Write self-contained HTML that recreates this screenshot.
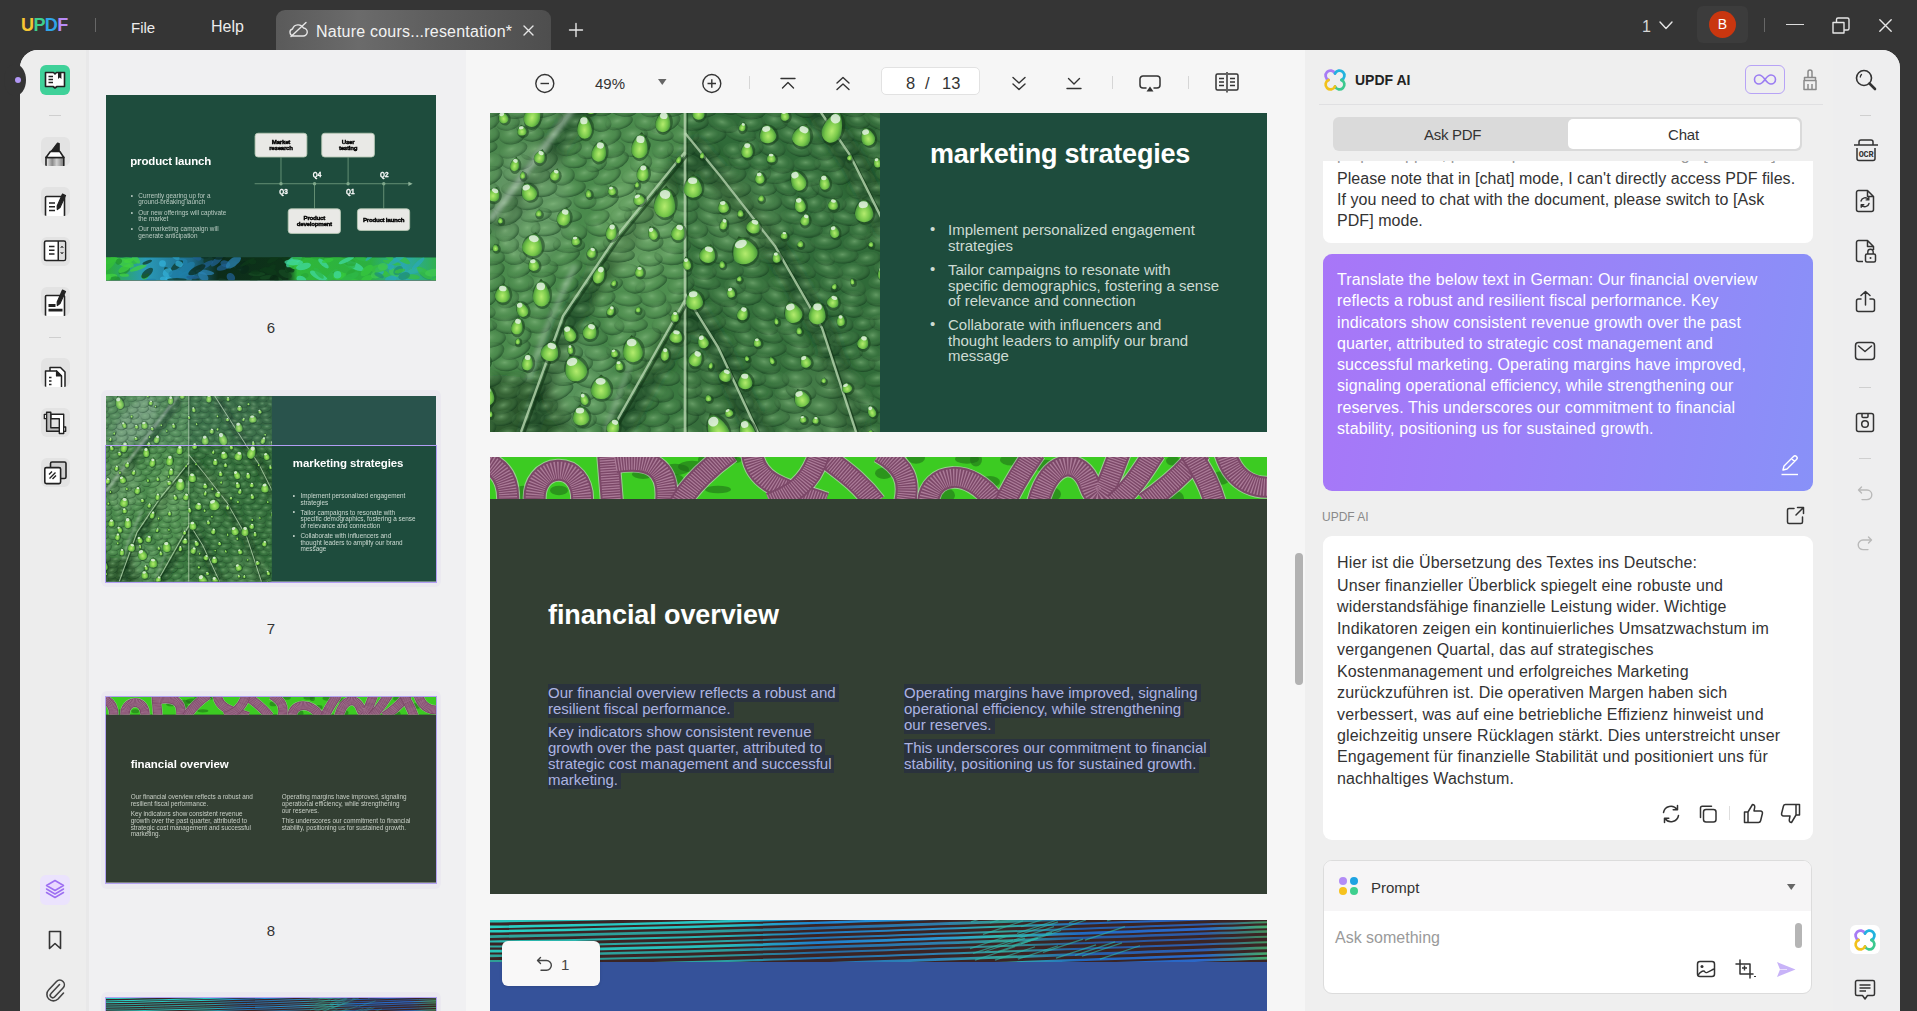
<!DOCTYPE html>
<html><head><meta charset="utf-8">
<style>
*{margin:0;padding:0;box-sizing:border-box}
html,body{width:1917px;height:1011px;overflow:hidden;background:#353535;font-family:"Liberation Sans",sans-serif}
.a{position:absolute}
svg{position:absolute;overflow:visible}
.s{fill:none;stroke:#3a3a3a;stroke-width:1.5;stroke-linecap:round;stroke-linejoin:round}
.w{fill:none;stroke:#e6e6e6;stroke-width:1.4;stroke-linecap:round;stroke-linejoin:round}
.nw{white-space:nowrap}
</style></head><body>
<!-- ============ TOP BAR ============ -->
<div class="a" style="left:21px;top:15px;font:bold 18px 'Liberation Sans';letter-spacing:-0.6px;line-height:20px">
<span style="color:#f6c633">U</span><span style="color:#3ecf8e">P</span><span style="color:#2fa5e8">D</span><span style="color:#b88bf6">F</span></div>
<div class="a" style="left:95px;top:18px;width:1px;height:14px;background:#676767"></div>
<div class="a nw" style="left:131px;top:19px;color:#ececec;font-size:15px;line-height:18px">File</div>
<div class="a nw" style="left:211px;top:18px;color:#ececec;font-size:16px;line-height:18px">Help</div>
<div class="a" style="left:276px;top:10px;width:275px;height:40px;border-radius:9px 9px 0 0;background:linear-gradient(90deg,#5a5a5a 0%,#6b6b6b 30%,#5d5d5d 60%,#4e4e4e 100%)"></div>
<svg style="left:289px;top:21px" width="20" height="17" viewBox="0 0 20 17"><path class="w" d="M5 15 H14 A4 4 0 0 0 14.5 7 A6 6 0 0 0 3.5 8 A3.6 3.6 0 0 0 5 15 M2 15.5 L17 1.5" stroke="#cfcfcf"/></svg>
<div class="a nw" style="left:316px;top:23px;color:#f2f2f2;font-size:16px;line-height:18px;letter-spacing:0.22px">Nature cours...resentation*</div>
<svg style="left:523px;top:25px" width="11" height="11"><path class="w" d="M1 1L10 10M10 1L1 10"/></svg>
<svg style="left:568.5px;top:22.5px" width="14" height="14"><path class="w" d="M7 0.5V13.5M0.5 7H13.5"/></svg>
<div class="a nw" style="left:1642px;top:18px;color:#d6d6d6;font-size:16px;line-height:18px">1</div>
<svg style="left:1659px;top:21px" width="14" height="9"><path class="w" d="M1 1L7 7.5L13 1"/></svg>
<div class="a" style="left:1697px;top:6px;width:51px;height:37px;border-radius:6px;background:#3c3c3c"></div>
<div class="a" style="left:1709px;top:11px;width:27px;height:27px;border-radius:50%;background:#c9360f;color:#fff;font-size:14px;text-align:center;line-height:27px">B</div>
<div class="a" style="left:1764px;top:18px;width:1px;height:14px;background:#676767"></div>
<div class="a" style="left:1786px;top:24px;width:18px;height:1.3px;background:#dcdcdc"></div>
<svg style="left:1832px;top:17px" width="18" height="17"><path class="w" d="M1 5.5H12V16H1Z M4.5 5.5V2.5A1.5 1.5 0 0 1 6 1H15.5A1.5 1.5 0 0 1 17 2.5V11.5A1.5 1.5 0 0 1 15.5 13H12"/></svg>
<svg style="left:1879px;top:19px" width="13" height="13"><path class="w" d="M0.8 0.8L12.2 12.2M12.2 0.8L0.8 12.2"/></svg>

<!-- ============ APP FRAME ============ -->
<div id="app" class="a" style="left:20px;top:50px;width:1880px;height:961px;border-radius:18px 18px 0 0;overflow:hidden;background:#efeff1">
  <div class="a" style="left:0;top:0;width:68px;height:961px;background:#ededed"></div><div class="a" style="left:66px;top:0;width:3px;height:961px;background:#e8e8e9"></div>
  <div class="a" style="left:69px;top:0;width:377px;height:961px;background:#f0f0f2"></div>
  <div class="a" style="left:446px;top:0;width:839px;height:961px;background:#f6f6f6"></div>
  <div class="a" style="left:1285px;top:0;width:528px;height:961px;background:#efefef"></div>
  <div class="a" style="left:1813px;top:0;width:67px;height:961px;background:#eeeeef"></div>
</div>
<!--SIDEBAR-->
<div class="a" style="left:40px;top:65px;width:30px;height:30px;border-radius:6px;background:#3fd199"></div>
<svg style="left:44px;top:70px" width="22" height="20" viewBox="0 0 22 20"><path d="M1.5 2.5H9.5L11 4L12.5 2.5H20.5V16.5H13L11 18L9 16.5H1.5Z" fill="#fff" stroke="#222" stroke-width="1.6" stroke-linejoin="round"/><path d="M4.5 6.5H9M4.5 9.5H9M4.5 12.5H9" stroke="#222" stroke-width="1.5"/><path d="M14 2V9L15.7 7.6L17.4 9V2" fill="#222"/></svg>
<div class="a" style="left:49px;top:115px;width:12px;height:1px;background:#cfcfcf"></div>
<div class="a" style="left:41px;top:137px;width:29px;height:29px;border-radius:6px;background:#e3e3e3;overflow:hidden">
 <svg style="left:0;top:0" width="29" height="29" viewBox="0 0 29 29"><defs><linearGradient id="hlg" x1="0" x2="1"><stop offset="0" stop-color="#f4f4f4"/><stop offset="0.35" stop-color="#8a8a8a"/><stop offset="0.6" stop-color="#d0d0d0"/><stop offset="1" stop-color="#777"/></linearGradient></defs><path d="M5 20.5H22.8V30H5Z" fill="url(#hlg)" stroke="#222" stroke-width="1.6"/><path d="M10 14.5L16.5 6L18.2 6.6V14.5Z" fill="#222" stroke="#222" stroke-width="1.2" stroke-linejoin="round"/><path d="M9.4 14.5H18.8L22.8 20.5H5Z" fill="#fff" stroke="#222" stroke-width="1.6" stroke-linejoin="round"/></svg></div>
<div class="a" style="left:41px;top:187px;width:29px;height:29px;border-radius:6px;background:#e3e3e3;overflow:hidden">
 <svg style="left:0;top:0" width="29" height="29" viewBox="0 0 29 29"><path d="M4.5 30V10.5A1 1 0 0 1 5.5 9.5H22.5A1 1 0 0 1 23.5 10.5V30" fill="#fff" stroke="#222" stroke-width="1.6"/><path d="M8 16H14M8 19.8H14M8 23.5H14" stroke="#222" stroke-width="1.5"/><path d="M21.5 7L24.5 8.5L19 20.5L16.3 22.5L16.2 19Z" fill="#222" stroke="#222" stroke-width="1.2" stroke-linejoin="round"/></svg></div>
<div class="a" style="left:41px;top:237px;width:29px;height:29px;border-radius:6px;background:#e3e3e3;overflow:hidden">
 <svg style="left:0;top:0" width="29" height="29" viewBox="0 0 29 29"><rect x="3.5" y="4" width="21" height="19.5" rx="1.5" fill="#fff" stroke="#222" stroke-width="1.6"/><path d="M17.3 4V23.5" stroke="#222" stroke-width="1.6"/><rect x="18.2" y="5" width="5.4" height="17.6" fill="#ddd"/><path d="M8 9.5H13.5M8 13.3H13.5M8 17H13.5" stroke="#222" stroke-width="1.5"/><path d="M19.5 10.5L21 9L22.5 10.5M19.5 15.5L21 17L22.5 15.5" stroke="#555" stroke-width="1"/></svg></div>
<div class="a" style="left:41px;top:287px;width:29px;height:29px;border-radius:6px;background:#e3e3e3;overflow:hidden">
 <svg style="left:0;top:0" width="29" height="29" viewBox="0 0 29 29"><path d="M4.5 30V9.5A1 1 0 0 1 5.5 8.5H22.5A1 1 0 0 1 23.5 9.5V30" fill="#fff" stroke="#222" stroke-width="1.6"/><path d="M7.5 18.5H14.5M7.5 23.2H21.5" stroke="#222" stroke-width="2.8"/><path d="M21.5 3L24.5 4.5L19 16.5L16.3 18.5L16.2 15Z" fill="#222" stroke="#222" stroke-width="1.2" stroke-linejoin="round"/></svg></div>
<div class="a" style="left:49px;top:337px;width:12px;height:1px;background:#cfcfcf"></div>
<div class="a" style="left:41px;top:358px;width:29px;height:29px;border-radius:6px;background:#e3e3e3;overflow:hidden">
 <svg style="left:0;top:0" width="29" height="29" viewBox="0 0 29 29"><path d="M9 30V9.5H19.5L24 14V30" fill="#fff" stroke="#222" stroke-width="1.5" stroke-linejoin="round"/><path d="M4.5 30V13H15.5L20.5 18V30" fill="#fff" stroke="#222" stroke-width="1.5" stroke-linejoin="round"/><path d="M15.5 13V18H20.5Z" fill="#222" stroke="#222" stroke-width="1.2" stroke-linejoin="round"/><path d="M8 19.5H10.5M8 23H10.5M8 26.5H10.5" stroke="#222" stroke-width="1.4"/></svg></div>
<div class="a" style="left:41px;top:408px;width:29px;height:29px;border-radius:6px;background:#e3e3e3;overflow:hidden">
 <svg style="left:0;top:0" width="29" height="29" viewBox="0 0 29 29"><path d="M5.6 10.7H3.3V6.4H5.6M22.7 19H24.7V23.3H22.7" fill="#fff" stroke="#222" stroke-width="1.3" stroke-linejoin="round"/><path d="M9.8 6.2H22.7V25.5H18.3V10.7H9.8Z" fill="#fff" stroke="#222" stroke-width="1.4" stroke-linejoin="round"/><path d="M5.6 4.2H9.8V19.8H18.3V23.3H5.6Z" fill="#bdbdbd" stroke="#222" stroke-width="1.4" stroke-linejoin="round"/></svg></div>
<div class="a" style="left:41px;top:458px;width:29px;height:29px;border-radius:6px;background:#e3e3e3;overflow:hidden">
 <svg style="left:0;top:0" width="29" height="29" viewBox="0 0 29 29"><rect x="9.5" y="4" width="15.5" height="16.5" rx="1.5" fill="#cfcfcf" stroke="#222" stroke-width="1.6"/><rect x="3.8" y="9.6" width="15.8" height="16" rx="1.5" fill="#fff" stroke="#222" stroke-width="1.6"/><path d="M8 16.5L11 13.5M8.5 20.5L14.5 14.5M11.5 21L15 17.5" stroke="#222" stroke-width="1.4"/></svg></div>
<div class="a" style="left:40px;top:875px;width:30px;height:30px;border-radius:6px;background:#ebe3fd"></div>
<svg style="left:45px;top:879px" width="20" height="22" viewBox="0 0 20 22"><path d="M10 1.5L18.5 6.5L10 11.5L1.5 6.5Z" fill="#ead9ff" stroke="#9d6ff2" stroke-width="1.5" stroke-linejoin="round"/><path d="M1.5 10L10 15L18.5 10M1.5 13.5L10 18.5L18.5 13.5" fill="none" stroke="#9d6ff2" stroke-width="1.5" stroke-linejoin="round" stroke-linecap="round"/></svg>
<svg style="left:48px;top:930px" width="14" height="20" viewBox="0 0 14 20"><path d="M1.5 1.5H12.5V18.5L7 13.5L1.5 18.5Z" fill="none" stroke="#333" stroke-width="1.6" stroke-linejoin="round"/></svg>
<svg style="left:46px;top:978px" width="20" height="24" viewBox="0 0 20 24"><path d="M13.5 6.5L5 15.5A2.4 2.4 0 0 0 8.5 19L17 10A4.5 4.5 0 0 0 10.5 3.5L2.8 11.8A6.5 6.5 0 0 0 12 21L17.5 15" fill="none" stroke="#444" stroke-width="1.6" stroke-linecap="round"/></svg>

<!--THUMBS--><svg width="0" height="0" style="position:absolute;left:0;top:0"><defs><symbol id="leaf" viewBox="0 0 390 437"><defs>
<filter id="blur4" x="-20%" y="-20%" width="140%" height="140%"><feGaussianBlur stdDeviation="6"/></filter>
<filter id="blur1"><feGaussianBlur stdDeviation="1"/></filter>
<filter id="blur2"><feGaussianBlur stdDeviation="2"/></filter>
<radialGradient id="dr" cx="0.5" cy="0.65" r="0.6"><stop offset="0" stop-color="#b4ec6e"/><stop offset="0.5" stop-color="#78c84a"/><stop offset="0.85" stop-color="#44923a"/><stop offset="1" stop-color="#234f25"/></radialGradient>
<clipPath id="lclip"><rect width="390" height="437"/></clipPath>
</defs><g clip-path="url(#lclip)"><rect width="390" height="437" fill="#3a7540"/><path d="M195 0 L195 157 L126 242 L73 321 L31 437 L0 437 L0 225 L79 119 L169 0Z" fill="#4a8a4c"/><path d="M195 157 L195 305 L120 438 L31 437 L73 321 L126 242Z" fill="#3f7f44"/><path d="M169 0 L79 119 L0 225 L0 0Z" fill="#4b874d"/><path d="M195 305 L195 437 L120 438Z" fill="#3a7840"/><path d="M195 0 L256 0 L332 119 L360 160 L395 230 L390 437 L367 440 L332 333 L285 251 L231 182 L195 138Z" fill="#2f6a38"/><path d="M195 138 L231 182 L285 251 L332 333 L367 440 L269 440 L228 352 L195 299Z" fill="#336e3a"/><path d="M256 0 L390 0 L395 230 L360 160 L332 119Z" fill="#2c6435"/><path d="M195 299 L228 352 L269 440 L195 440Z" fill="#376f3c"/><g filter="url(#blur4)"><path d="M199 165 L130 250 L77 329 L35 445" stroke="#123617" stroke-width="24" fill="none" opacity="0.7"/><path d="M199 313 L124 446" stroke="#123617" stroke-width="24" fill="none" opacity="0.7"/><path d="M173 8 L83 127 L4 233" stroke="#123617" stroke-width="24" fill="none" opacity="0.7"/><path d="M199 146 L235 190 L289 259 L336 341 L371 448" stroke="#123617" stroke-width="24" fill="none" opacity="0.7"/><path d="M199 307 L232 360 L273 448" stroke="#123617" stroke-width="24" fill="none" opacity="0.7"/><path d="M260 8 L336 127 L364 168 L399 238" stroke="#123617" stroke-width="24" fill="none" opacity="0.7"/><ellipse cx="70" cy="60" rx="70" ry="35" fill="#a8c2ad" opacity="0.45" transform="rotate(-50 70 60)"/><ellipse cx="40" cy="210" rx="40" ry="60" fill="#8fb890" opacity="0.35"/><ellipse cx="150" cy="230" rx="35" ry="55" fill="#80b27c" opacity="0.35"/><ellipse cx="90" cy="390" rx="35" ry="45" fill="#8fbf8a" opacity="0.3"/><ellipse cx="250" cy="220" rx="45" ry="40" fill="#6a9f68" opacity="0.3"/><ellipse cx="330" cy="410" rx="45" ry="40" fill="#6a9f68" opacity="0.25"/><ellipse cx="10" cy="430" rx="70" ry="50" fill="#0f2e12" opacity="0.55"/><ellipse cx="150" cy="270" rx="45" ry="110" fill="#86c476" opacity="0.22"/><ellipse cx="380" cy="20" rx="40" ry="50" fill="#1a4a20" opacity="0.4"/></g><defs><radialGradient id="cell" cx="0.45" cy="0.4" r="0.6"><stop offset="0" stop-color="#8cc086" stop-opacity="0.55"/><stop offset="0.55" stop-color="#5f9a5c" stop-opacity="0.15"/><stop offset="1" stop-color="#10361a" stop-opacity="0.6"/></radialGradient></defs><ellipse cx="-10" cy="-9" rx="15.1" ry="8.6" fill="url(#cell)" transform="rotate(3 -10 -9)"/><ellipse cx="17" cy="-9" rx="15.8" ry="8.3" fill="url(#cell)" transform="rotate(-25 17 -9)"/><ellipse cx="44" cy="-7" rx="13.2" ry="8.5" fill="url(#cell)" transform="rotate(-17 44 -7)"/><ellipse cx="71" cy="-7" rx="12.4" ry="7.1" fill="url(#cell)" transform="rotate(6 71 -7)"/><ellipse cx="90" cy="-8" rx="14.7" ry="7.1" fill="url(#cell)" transform="rotate(-21 90 -8)"/><ellipse cx="115" cy="-7" rx="16.7" ry="7.9" fill="url(#cell)" transform="rotate(-21 115 -7)"/><ellipse cx="146" cy="-9" rx="16.6" ry="8.1" fill="url(#cell)" transform="rotate(-8 146 -9)"/><ellipse cx="177" cy="-9" rx="12.1" ry="7.1" fill="url(#cell)" transform="rotate(2 177 -9)"/><ellipse cx="198" cy="-7" rx="12.3" ry="9.4" fill="url(#cell)" transform="rotate(17 198 -7)"/><ellipse cx="217" cy="-8" rx="14.5" ry="8.8" fill="url(#cell)" transform="rotate(19 217 -8)"/><ellipse cx="245" cy="-8" rx="12.2" ry="9.3" fill="url(#cell)" transform="rotate(3 245 -8)"/><ellipse cx="267" cy="-8" rx="13.7" ry="8.0" fill="url(#cell)" transform="rotate(-9 267 -8)"/><ellipse cx="291" cy="-8" rx="11.6" ry="8.8" fill="url(#cell)" transform="rotate(7 291 -8)"/><ellipse cx="308" cy="-8" rx="14.3" ry="8.9" fill="url(#cell)" transform="rotate(9 308 -8)"/><ellipse cx="333" cy="-9" rx="14.7" ry="7.5" fill="url(#cell)" transform="rotate(22 333 -9)"/><ellipse cx="360" cy="-10" rx="13.1" ry="8.5" fill="url(#cell)" transform="rotate(-8 360 -10)"/><ellipse cx="383" cy="-7" rx="15.9" ry="8.9" fill="url(#cell)" transform="rotate(14 383 -7)"/><ellipse cx="3" cy="7" rx="16.7" ry="8.0" fill="url(#cell)" transform="rotate(-4 3 7)"/><ellipse cx="30" cy="4" rx="16.3" ry="8.2" fill="url(#cell)" transform="rotate(6 30 4)"/><ellipse cx="61" cy="7" rx="12.0" ry="7.2" fill="url(#cell)" transform="rotate(-8 61 7)"/><ellipse cx="79" cy="5" rx="16.0" ry="7.1" fill="url(#cell)" transform="rotate(-10 79 5)"/><ellipse cx="108" cy="7" rx="12.0" ry="7.2" fill="url(#cell)" transform="rotate(9 108 7)"/><ellipse cx="129" cy="7" rx="15.5" ry="8.2" fill="url(#cell)" transform="rotate(-7 129 7)"/><ellipse cx="156" cy="7" rx="15.4" ry="7.1" fill="url(#cell)" transform="rotate(3 156 7)"/><ellipse cx="184" cy="6" rx="16.3" ry="8.5" fill="url(#cell)" transform="rotate(5 184 6)"/><ellipse cx="213" cy="7" rx="12.8" ry="8.3" fill="url(#cell)" transform="rotate(-10 213 7)"/><ellipse cx="234" cy="6" rx="15.1" ry="9.4" fill="url(#cell)" transform="rotate(13 234 6)"/><ellipse cx="262" cy="5" rx="16.1" ry="8.5" fill="url(#cell)" transform="rotate(24 262 5)"/><ellipse cx="290" cy="4" rx="16.4" ry="7.3" fill="url(#cell)" transform="rotate(-9 290 4)"/><ellipse cx="323" cy="6" rx="13.7" ry="7.4" fill="url(#cell)" transform="rotate(-6 323 6)"/><ellipse cx="345" cy="4" rx="14.2" ry="7.8" fill="url(#cell)" transform="rotate(-4 345 4)"/><ellipse cx="371" cy="6" rx="12.1" ry="7.9" fill="url(#cell)" transform="rotate(-8 371 6)"/><ellipse cx="393" cy="7" rx="15.3" ry="9.2" fill="url(#cell)" transform="rotate(-10 393 7)"/><ellipse cx="-7" cy="20" rx="11.4" ry="8.9" fill="url(#cell)" transform="rotate(-16 -7 20)"/><ellipse cx="12" cy="19" rx="15.2" ry="7.8" fill="url(#cell)" transform="rotate(-14 12 19)"/><ellipse cx="41" cy="19" rx="16.4" ry="7.7" fill="url(#cell)" transform="rotate(8 41 19)"/><ellipse cx="70" cy="20" rx="11.6" ry="8.5" fill="url(#cell)" transform="rotate(9 70 20)"/><ellipse cx="91" cy="19" rx="12.9" ry="8.7" fill="url(#cell)" transform="rotate(-23 91 19)"/><ellipse cx="113" cy="18" rx="15.9" ry="9.4" fill="url(#cell)" transform="rotate(10 113 18)"/><ellipse cx="140" cy="20" rx="11.6" ry="7.2" fill="url(#cell)" transform="rotate(2 140 20)"/><ellipse cx="160" cy="20" rx="13.7" ry="8.6" fill="url(#cell)" transform="rotate(-10 160 20)"/><ellipse cx="185" cy="18" rx="14.1" ry="8.0" fill="url(#cell)" transform="rotate(-23 185 18)"/><ellipse cx="211" cy="20" rx="13.6" ry="7.6" fill="url(#cell)" transform="rotate(15 211 20)"/><ellipse cx="234" cy="19" rx="13.7" ry="7.6" fill="url(#cell)" transform="rotate(12 234 19)"/><ellipse cx="259" cy="19" rx="16.8" ry="7.2" fill="url(#cell)" transform="rotate(15 259 19)"/><ellipse cx="289" cy="20" rx="16.3" ry="8.9" fill="url(#cell)" transform="rotate(13 289 20)"/><ellipse cx="319" cy="18" rx="16.2" ry="8.7" fill="url(#cell)" transform="rotate(22 319 18)"/><ellipse cx="348" cy="21" rx="13.3" ry="8.5" fill="url(#cell)" transform="rotate(25 348 21)"/><ellipse cx="369" cy="19" rx="11.0" ry="7.8" fill="url(#cell)" transform="rotate(-5 369 19)"/><ellipse cx="388" cy="21" rx="14.3" ry="7.2" fill="url(#cell)" transform="rotate(16 388 21)"/><ellipse cx="-5" cy="31" rx="11.6" ry="9.4" fill="url(#cell)" transform="rotate(-13 -5 31)"/><ellipse cx="14" cy="34" rx="14.8" ry="8.7" fill="url(#cell)" transform="rotate(-14 14 34)"/><ellipse cx="40" cy="33" rx="12.5" ry="9.1" fill="url(#cell)" transform="rotate(-18 40 33)"/><ellipse cx="62" cy="34" rx="14.6" ry="7.7" fill="url(#cell)" transform="rotate(-9 62 34)"/><ellipse cx="88" cy="31" rx="13.6" ry="8.5" fill="url(#cell)" transform="rotate(-12 88 31)"/><ellipse cx="115" cy="31" rx="12.6" ry="7.5" fill="url(#cell)" transform="rotate(3 115 31)"/><ellipse cx="133" cy="33" rx="16.6" ry="8.8" fill="url(#cell)" transform="rotate(-24 133 33)"/><ellipse cx="163" cy="31" rx="14.6" ry="8.8" fill="url(#cell)" transform="rotate(-6 163 31)"/><ellipse cx="190" cy="34" rx="11.6" ry="7.8" fill="url(#cell)" transform="rotate(-12 190 34)"/><ellipse cx="212" cy="33" rx="11.8" ry="9.0" fill="url(#cell)" transform="rotate(-8 212 33)"/><ellipse cx="231" cy="31" rx="12.1" ry="8.0" fill="url(#cell)" transform="rotate(18 231 31)"/><ellipse cx="254" cy="31" rx="16.1" ry="9.3" fill="url(#cell)" transform="rotate(10 254 31)"/><ellipse cx="282" cy="34" rx="11.5" ry="9.2" fill="url(#cell)" transform="rotate(-3 282 34)"/><ellipse cx="301" cy="33" rx="11.4" ry="9.0" fill="url(#cell)" transform="rotate(6 301 33)"/><ellipse cx="319" cy="32" rx="15.8" ry="7.8" fill="url(#cell)" transform="rotate(0 319 32)"/><ellipse cx="347" cy="31" rx="14.8" ry="9.2" fill="url(#cell)" transform="rotate(8 347 31)"/><ellipse cx="374" cy="31" rx="15.1" ry="7.5" fill="url(#cell)" transform="rotate(-9 374 31)"/><ellipse cx="-6" cy="44" rx="15.1" ry="8.6" fill="url(#cell)" transform="rotate(8 -6 44)"/><ellipse cx="22" cy="47" rx="14.2" ry="8.0" fill="url(#cell)" transform="rotate(-7 22 47)"/><ellipse cx="46" cy="44" rx="11.5" ry="9.1" fill="url(#cell)" transform="rotate(-13 46 44)"/><ellipse cx="65" cy="47" rx="14.2" ry="8.6" fill="url(#cell)" transform="rotate(-8 65 47)"/><ellipse cx="93" cy="48" rx="12.0" ry="9.1" fill="url(#cell)" transform="rotate(-1 93 48)"/><ellipse cx="114" cy="46" rx="12.3" ry="8.9" fill="url(#cell)" transform="rotate(7 114 46)"/><ellipse cx="136" cy="48" rx="16.8" ry="8.0" fill="url(#cell)" transform="rotate(3 136 48)"/><ellipse cx="165" cy="46" rx="11.1" ry="7.9" fill="url(#cell)" transform="rotate(1 165 46)"/><ellipse cx="185" cy="46" rx="14.9" ry="7.4" fill="url(#cell)" transform="rotate(6 185 46)"/><ellipse cx="210" cy="47" rx="12.2" ry="9.5" fill="url(#cell)" transform="rotate(16 210 47)"/><ellipse cx="229" cy="46" rx="16.3" ry="7.9" fill="url(#cell)" transform="rotate(-4 229 46)"/><ellipse cx="260" cy="45" rx="14.2" ry="9.0" fill="url(#cell)" transform="rotate(-9 260 45)"/><ellipse cx="283" cy="47" rx="13.5" ry="8.5" fill="url(#cell)" transform="rotate(-3 283 47)"/><ellipse cx="309" cy="48" rx="11.6" ry="9.3" fill="url(#cell)" transform="rotate(8 309 48)"/><ellipse cx="329" cy="47" rx="11.7" ry="7.6" fill="url(#cell)" transform="rotate(17 329 47)"/><ellipse cx="349" cy="46" rx="15.5" ry="8.6" fill="url(#cell)" transform="rotate(3 349 46)"/><ellipse cx="377" cy="46" rx="13.9" ry="7.7" fill="url(#cell)" transform="rotate(-9 377 46)"/><ellipse cx="0" cy="60" rx="14.5" ry="9.0" fill="url(#cell)" transform="rotate(10 0 60)"/><ellipse cx="23" cy="60" rx="13.3" ry="8.0" fill="url(#cell)" transform="rotate(-5 23 60)"/><ellipse cx="47" cy="58" rx="14.5" ry="9.5" fill="url(#cell)" transform="rotate(1 47 58)"/><ellipse cx="72" cy="59" rx="15.9" ry="8.2" fill="url(#cell)" transform="rotate(4 72 59)"/><ellipse cx="102" cy="60" rx="14.0" ry="8.2" fill="url(#cell)" transform="rotate(-4 102 60)"/><ellipse cx="128" cy="59" rx="15.2" ry="9.2" fill="url(#cell)" transform="rotate(-16 128 59)"/><ellipse cx="156" cy="58" rx="15.7" ry="9.0" fill="url(#cell)" transform="rotate(5 156 58)"/><ellipse cx="181" cy="60" rx="16.3" ry="7.2" fill="url(#cell)" transform="rotate(-20 181 60)"/><ellipse cx="212" cy="59" rx="16.0" ry="7.7" fill="url(#cell)" transform="rotate(-2 212 59)"/><ellipse cx="240" cy="58" rx="12.2" ry="8.2" fill="url(#cell)" transform="rotate(14 240 58)"/><ellipse cx="260" cy="58" rx="13.0" ry="8.6" fill="url(#cell)" transform="rotate(-5 260 58)"/><ellipse cx="283" cy="58" rx="11.3" ry="8.7" fill="url(#cell)" transform="rotate(21 283 58)"/><ellipse cx="304" cy="60" rx="14.9" ry="7.1" fill="url(#cell)" transform="rotate(6 304 60)"/><ellipse cx="329" cy="60" rx="14.0" ry="9.4" fill="url(#cell)" transform="rotate(12 329 60)"/><ellipse cx="356" cy="60" rx="13.2" ry="7.9" fill="url(#cell)" transform="rotate(6 356 60)"/><ellipse cx="379" cy="58" rx="14.1" ry="7.6" fill="url(#cell)" transform="rotate(13 379 58)"/><ellipse cx="-5" cy="71" rx="12.3" ry="8.5" fill="url(#cell)" transform="rotate(-8 -5 71)"/><ellipse cx="15" cy="72" rx="12.0" ry="9.0" fill="url(#cell)" transform="rotate(-17 15 72)"/><ellipse cx="35" cy="73" rx="11.3" ry="7.5" fill="url(#cell)" transform="rotate(5 35 73)"/><ellipse cx="56" cy="71" rx="12.3" ry="7.3" fill="url(#cell)" transform="rotate(-11 56 71)"/><ellipse cx="79" cy="73" rx="15.6" ry="7.5" fill="url(#cell)" transform="rotate(-22 79 73)"/><ellipse cx="104" cy="72" rx="12.5" ry="8.5" fill="url(#cell)" transform="rotate(-5 104 72)"/><ellipse cx="128" cy="71" rx="15.9" ry="8.3" fill="url(#cell)" transform="rotate(-14 128 71)"/><ellipse cx="155" cy="74" rx="12.9" ry="9.3" fill="url(#cell)" transform="rotate(-24 155 74)"/><ellipse cx="179" cy="73" rx="14.0" ry="9.2" fill="url(#cell)" transform="rotate(-19 179 73)"/><ellipse cx="205" cy="74" rx="16.6" ry="7.2" fill="url(#cell)" transform="rotate(15 205 74)"/><ellipse cx="232" cy="74" rx="14.2" ry="7.4" fill="url(#cell)" transform="rotate(13 232 74)"/><ellipse cx="256" cy="72" rx="13.3" ry="9.0" fill="url(#cell)" transform="rotate(-7 256 72)"/><ellipse cx="282" cy="72" rx="12.9" ry="9.0" fill="url(#cell)" transform="rotate(1 282 72)"/><ellipse cx="303" cy="72" rx="11.7" ry="8.7" fill="url(#cell)" transform="rotate(3 303 72)"/><ellipse cx="325" cy="74" rx="16.2" ry="8.1" fill="url(#cell)" transform="rotate(7 325 74)"/><ellipse cx="352" cy="73" rx="14.3" ry="7.9" fill="url(#cell)" transform="rotate(1 352 73)"/><ellipse cx="380" cy="73" rx="13.0" ry="7.5" fill="url(#cell)" transform="rotate(-3 380 73)"/><ellipse cx="-12" cy="87" rx="12.3" ry="9.2" fill="url(#cell)" transform="rotate(-17 -12 87)"/><ellipse cx="11" cy="87" rx="14.9" ry="8.1" fill="url(#cell)" transform="rotate(-12 11 87)"/><ellipse cx="38" cy="87" rx="12.7" ry="8.5" fill="url(#cell)" transform="rotate(-8 38 87)"/><ellipse cx="60" cy="85" rx="13.0" ry="9.2" fill="url(#cell)" transform="rotate(-1 60 85)"/><ellipse cx="83" cy="88" rx="15.6" ry="8.7" fill="url(#cell)" transform="rotate(-16 83 88)"/><ellipse cx="109" cy="88" rx="17.0" ry="7.8" fill="url(#cell)" transform="rotate(-19 109 88)"/><ellipse cx="138" cy="86" rx="13.4" ry="8.6" fill="url(#cell)" transform="rotate(3 138 86)"/><ellipse cx="164" cy="88" rx="14.7" ry="8.9" fill="url(#cell)" transform="rotate(6 164 88)"/><ellipse cx="189" cy="87" rx="15.9" ry="9.4" fill="url(#cell)" transform="rotate(-7 189 87)"/><ellipse cx="217" cy="87" rx="16.8" ry="8.6" fill="url(#cell)" transform="rotate(0 217 87)"/><ellipse cx="246" cy="85" rx="11.8" ry="8.0" fill="url(#cell)" transform="rotate(-7 246 85)"/><ellipse cx="266" cy="87" rx="13.7" ry="8.9" fill="url(#cell)" transform="rotate(-6 266 87)"/><ellipse cx="292" cy="87" rx="14.1" ry="7.7" fill="url(#cell)" transform="rotate(4 292 87)"/><ellipse cx="315" cy="86" rx="13.4" ry="8.8" fill="url(#cell)" transform="rotate(15 315 86)"/><ellipse cx="339" cy="87" rx="16.0" ry="9.4" fill="url(#cell)" transform="rotate(1 339 87)"/><ellipse cx="367" cy="86" rx="15.2" ry="9.1" fill="url(#cell)" transform="rotate(23 367 86)"/><ellipse cx="397" cy="86" rx="13.1" ry="8.6" fill="url(#cell)" transform="rotate(17 397 86)"/><ellipse cx="-13" cy="99" rx="13.0" ry="7.4" fill="url(#cell)" transform="rotate(-24 -13 99)"/><ellipse cx="11" cy="100" rx="15.8" ry="7.4" fill="url(#cell)" transform="rotate(5 11 100)"/><ellipse cx="38" cy="101" rx="16.1" ry="8.6" fill="url(#cell)" transform="rotate(-22 38 101)"/><ellipse cx="67" cy="99" rx="16.6" ry="7.8" fill="url(#cell)" transform="rotate(-11 67 99)"/><ellipse cx="98" cy="101" rx="15.7" ry="9.1" fill="url(#cell)" transform="rotate(-16 98 101)"/><ellipse cx="125" cy="101" rx="12.9" ry="7.8" fill="url(#cell)" transform="rotate(10 125 101)"/><ellipse cx="150" cy="100" rx="11.5" ry="9.4" fill="url(#cell)" transform="rotate(-1 150 100)"/><ellipse cx="168" cy="102" rx="15.7" ry="7.5" fill="url(#cell)" transform="rotate(6 168 102)"/><ellipse cx="197" cy="100" rx="16.5" ry="7.2" fill="url(#cell)" transform="rotate(22 197 100)"/><ellipse cx="224" cy="101" rx="12.0" ry="8.4" fill="url(#cell)" transform="rotate(15 224 101)"/><ellipse cx="245" cy="101" rx="11.2" ry="7.8" fill="url(#cell)" transform="rotate(12 245 101)"/><ellipse cx="267" cy="100" rx="11.4" ry="9.4" fill="url(#cell)" transform="rotate(10 267 100)"/><ellipse cx="285" cy="100" rx="13.2" ry="8.5" fill="url(#cell)" transform="rotate(16 285 100)"/><ellipse cx="309" cy="99" rx="12.1" ry="7.7" fill="url(#cell)" transform="rotate(-8 309 99)"/><ellipse cx="329" cy="99" rx="16.5" ry="7.4" fill="url(#cell)" transform="rotate(-1 329 99)"/><ellipse cx="357" cy="100" rx="13.1" ry="8.3" fill="url(#cell)" transform="rotate(-8 357 100)"/><ellipse cx="381" cy="99" rx="11.5" ry="7.5" fill="url(#cell)" transform="rotate(0 381 99)"/><ellipse cx="1" cy="114" rx="14.9" ry="8.2" fill="url(#cell)" transform="rotate(-14 1 114)"/><ellipse cx="26" cy="115" rx="14.7" ry="8.9" fill="url(#cell)" transform="rotate(-3 26 115)"/><ellipse cx="53" cy="115" rx="16.6" ry="7.7" fill="url(#cell)" transform="rotate(-7 53 115)"/><ellipse cx="83" cy="113" rx="16.4" ry="7.2" fill="url(#cell)" transform="rotate(1 83 113)"/><ellipse cx="110" cy="113" rx="13.5" ry="8.3" fill="url(#cell)" transform="rotate(5 110 113)"/><ellipse cx="133" cy="113" rx="14.9" ry="8.6" fill="url(#cell)" transform="rotate(9 133 113)"/><ellipse cx="162" cy="114" rx="12.2" ry="8.3" fill="url(#cell)" transform="rotate(-6 162 114)"/><ellipse cx="182" cy="113" rx="16.8" ry="9.0" fill="url(#cell)" transform="rotate(-10 182 113)"/><ellipse cx="212" cy="114" rx="15.1" ry="8.7" fill="url(#cell)" transform="rotate(5 212 114)"/><ellipse cx="239" cy="112" rx="11.1" ry="7.7" fill="url(#cell)" transform="rotate(13 239 112)"/><ellipse cx="259" cy="115" rx="17.0" ry="9.3" fill="url(#cell)" transform="rotate(7 259 115)"/><ellipse cx="287" cy="113" rx="14.5" ry="9.2" fill="url(#cell)" transform="rotate(3 287 113)"/><ellipse cx="313" cy="114" rx="13.0" ry="8.1" fill="url(#cell)" transform="rotate(23 313 114)"/><ellipse cx="337" cy="115" rx="12.4" ry="7.5" fill="url(#cell)" transform="rotate(-2 337 115)"/><ellipse cx="360" cy="114" rx="15.6" ry="7.4" fill="url(#cell)" transform="rotate(14 360 114)"/><ellipse cx="388" cy="113" rx="11.5" ry="9.4" fill="url(#cell)" transform="rotate(20 388 113)"/><ellipse cx="-2" cy="127" rx="12.0" ry="8.0" fill="url(#cell)" transform="rotate(-24 -2 127)"/><ellipse cx="18" cy="128" rx="12.0" ry="7.5" fill="url(#cell)" transform="rotate(-9 18 128)"/><ellipse cx="38" cy="128" rx="13.4" ry="9.4" fill="url(#cell)" transform="rotate(-18 38 128)"/><ellipse cx="60" cy="126" rx="14.1" ry="7.4" fill="url(#cell)" transform="rotate(-21 60 126)"/><ellipse cx="87" cy="128" rx="13.3" ry="8.6" fill="url(#cell)" transform="rotate(-8 87 128)"/><ellipse cx="110" cy="128" rx="11.5" ry="8.8" fill="url(#cell)" transform="rotate(9 110 128)"/><ellipse cx="129" cy="127" rx="14.1" ry="7.6" fill="url(#cell)" transform="rotate(-14 129 127)"/><ellipse cx="156" cy="128" rx="11.6" ry="8.0" fill="url(#cell)" transform="rotate(2 156 128)"/><ellipse cx="175" cy="128" rx="16.3" ry="9.0" fill="url(#cell)" transform="rotate(-23 175 128)"/><ellipse cx="203" cy="127" rx="15.8" ry="8.8" fill="url(#cell)" transform="rotate(-0 203 127)"/><ellipse cx="233" cy="129" rx="15.8" ry="8.1" fill="url(#cell)" transform="rotate(17 233 129)"/><ellipse cx="262" cy="129" rx="13.3" ry="7.9" fill="url(#cell)" transform="rotate(-3 262 129)"/><ellipse cx="285" cy="126" rx="13.2" ry="9.0" fill="url(#cell)" transform="rotate(6 285 126)"/><ellipse cx="306" cy="128" rx="16.8" ry="7.2" fill="url(#cell)" transform="rotate(22 306 128)"/><ellipse cx="338" cy="129" rx="16.7" ry="8.2" fill="url(#cell)" transform="rotate(2 338 129)"/><ellipse cx="368" cy="126" rx="12.4" ry="7.6" fill="url(#cell)" transform="rotate(9 368 126)"/><ellipse cx="389" cy="127" rx="16.6" ry="7.5" fill="url(#cell)" transform="rotate(24 389 127)"/><ellipse cx="-4" cy="139" rx="13.9" ry="9.3" fill="url(#cell)" transform="rotate(3 -4 139)"/><ellipse cx="22" cy="140" rx="13.4" ry="9.4" fill="url(#cell)" transform="rotate(-10 22 140)"/><ellipse cx="42" cy="139" rx="12.4" ry="7.7" fill="url(#cell)" transform="rotate(1 42 139)"/><ellipse cx="65" cy="141" rx="11.3" ry="8.5" fill="url(#cell)" transform="rotate(-5 65 141)"/><ellipse cx="83" cy="141" rx="16.6" ry="7.7" fill="url(#cell)" transform="rotate(-16 83 141)"/><ellipse cx="115" cy="142" rx="16.9" ry="9.3" fill="url(#cell)" transform="rotate(-16 115 142)"/><ellipse cx="144" cy="140" rx="13.9" ry="8.0" fill="url(#cell)" transform="rotate(-8 144 140)"/><ellipse cx="169" cy="139" rx="14.9" ry="7.1" fill="url(#cell)" transform="rotate(9 169 139)"/><ellipse cx="195" cy="141" rx="14.3" ry="8.5" fill="url(#cell)" transform="rotate(-0 195 141)"/><ellipse cx="220" cy="141" rx="16.5" ry="8.5" fill="url(#cell)" transform="rotate(-8 220 141)"/><ellipse cx="251" cy="139" rx="15.5" ry="7.8" fill="url(#cell)" transform="rotate(11 251 139)"/><ellipse cx="277" cy="142" rx="12.0" ry="7.1" fill="url(#cell)" transform="rotate(4 277 142)"/><ellipse cx="300" cy="140" rx="14.1" ry="9.0" fill="url(#cell)" transform="rotate(14 300 140)"/><ellipse cx="323" cy="140" rx="15.7" ry="9.0" fill="url(#cell)" transform="rotate(17 323 140)"/><ellipse cx="352" cy="142" rx="12.5" ry="8.2" fill="url(#cell)" transform="rotate(-1 352 142)"/><ellipse cx="372" cy="140" rx="15.0" ry="7.5" fill="url(#cell)" transform="rotate(13 372 140)"/><ellipse cx="398" cy="141" rx="14.8" ry="9.4" fill="url(#cell)" transform="rotate(7 398 141)"/><ellipse cx="-9" cy="152" rx="16.5" ry="7.4" fill="url(#cell)" transform="rotate(-2 -9 152)"/><ellipse cx="23" cy="155" rx="14.9" ry="7.6" fill="url(#cell)" transform="rotate(-18 23 155)"/><ellipse cx="47" cy="155" rx="16.7" ry="9.1" fill="url(#cell)" transform="rotate(-20 47 155)"/><ellipse cx="79" cy="153" rx="13.1" ry="8.0" fill="url(#cell)" transform="rotate(-11 79 153)"/><ellipse cx="99" cy="155" rx="12.2" ry="9.0" fill="url(#cell)" transform="rotate(-13 99 155)"/><ellipse cx="121" cy="154" rx="14.3" ry="9.2" fill="url(#cell)" transform="rotate(-3 121 154)"/><ellipse cx="147" cy="153" rx="14.5" ry="8.0" fill="url(#cell)" transform="rotate(-20 147 153)"/><ellipse cx="173" cy="155" rx="11.1" ry="8.5" fill="url(#cell)" transform="rotate(-20 173 155)"/><ellipse cx="192" cy="155" rx="15.0" ry="8.1" fill="url(#cell)" transform="rotate(-7 192 155)"/><ellipse cx="217" cy="155" rx="13.6" ry="8.6" fill="url(#cell)" transform="rotate(8 217 155)"/><ellipse cx="244" cy="156" rx="11.3" ry="8.2" fill="url(#cell)" transform="rotate(5 244 156)"/><ellipse cx="261" cy="152" rx="12.6" ry="9.3" fill="url(#cell)" transform="rotate(-1 261 152)"/><ellipse cx="282" cy="153" rx="13.8" ry="8.7" fill="url(#cell)" transform="rotate(15 282 153)"/><ellipse cx="309" cy="154" rx="13.1" ry="7.4" fill="url(#cell)" transform="rotate(14 309 154)"/><ellipse cx="331" cy="156" rx="13.9" ry="9.0" fill="url(#cell)" transform="rotate(18 331 156)"/><ellipse cx="356" cy="154" rx="15.3" ry="8.2" fill="url(#cell)" transform="rotate(-7 356 154)"/><ellipse cx="384" cy="155" rx="16.3" ry="9.0" fill="url(#cell)" transform="rotate(9 384 155)"/><ellipse cx="0" cy="167" rx="13.8" ry="9.5" fill="url(#cell)" transform="rotate(-5 0 167)"/><ellipse cx="27" cy="167" rx="15.9" ry="8.3" fill="url(#cell)" transform="rotate(-1 27 167)"/><ellipse cx="53" cy="168" rx="15.8" ry="8.5" fill="url(#cell)" transform="rotate(-25 53 168)"/><ellipse cx="84" cy="166" rx="12.8" ry="7.3" fill="url(#cell)" transform="rotate(0 84 166)"/><ellipse cx="106" cy="169" rx="11.4" ry="7.5" fill="url(#cell)" transform="rotate(-22 106 169)"/><ellipse cx="125" cy="166" rx="14.7" ry="8.0" fill="url(#cell)" transform="rotate(-24 125 166)"/><ellipse cx="151" cy="168" rx="11.5" ry="9.2" fill="url(#cell)" transform="rotate(-20 151 168)"/><ellipse cx="170" cy="169" rx="15.1" ry="9.3" fill="url(#cell)" transform="rotate(5 170 169)"/><ellipse cx="198" cy="167" rx="17.0" ry="8.4" fill="url(#cell)" transform="rotate(17 198 167)"/><ellipse cx="229" cy="169" rx="12.9" ry="8.6" fill="url(#cell)" transform="rotate(18 229 169)"/><ellipse cx="250" cy="167" rx="11.6" ry="7.4" fill="url(#cell)" transform="rotate(15 250 167)"/><ellipse cx="270" cy="167" rx="12.6" ry="8.4" fill="url(#cell)" transform="rotate(12 270 167)"/><ellipse cx="291" cy="169" rx="13.6" ry="9.4" fill="url(#cell)" transform="rotate(12 291 169)"/><ellipse cx="317" cy="169" rx="13.8" ry="7.2" fill="url(#cell)" transform="rotate(2 317 169)"/><ellipse cx="339" cy="169" rx="15.3" ry="8.3" fill="url(#cell)" transform="rotate(1 339 169)"/><ellipse cx="369" cy="169" rx="13.9" ry="8.9" fill="url(#cell)" transform="rotate(3 369 169)"/><ellipse cx="393" cy="167" rx="16.1" ry="7.4" fill="url(#cell)" transform="rotate(20 393 167)"/><ellipse cx="-2" cy="181" rx="15.0" ry="9.0" fill="url(#cell)" transform="rotate(-21 -2 181)"/><ellipse cx="26" cy="180" rx="13.1" ry="7.5" fill="url(#cell)" transform="rotate(7 26 180)"/><ellipse cx="46" cy="181" rx="14.6" ry="8.1" fill="url(#cell)" transform="rotate(-5 46 181)"/><ellipse cx="73" cy="181" rx="11.9" ry="9.4" fill="url(#cell)" transform="rotate(-15 73 181)"/><ellipse cx="96" cy="179" rx="13.2" ry="7.7" fill="url(#cell)" transform="rotate(-12 96 179)"/><ellipse cx="117" cy="181" rx="14.6" ry="8.2" fill="url(#cell)" transform="rotate(-23 117 181)"/><ellipse cx="144" cy="181" rx="12.8" ry="8.1" fill="url(#cell)" transform="rotate(-10 144 181)"/><ellipse cx="166" cy="180" rx="14.9" ry="7.7" fill="url(#cell)" transform="rotate(-3 166 180)"/><ellipse cx="194" cy="182" rx="14.2" ry="8.6" fill="url(#cell)" transform="rotate(10 194 182)"/><ellipse cx="217" cy="180" rx="12.4" ry="9.4" fill="url(#cell)" transform="rotate(6 217 180)"/><ellipse cx="240" cy="180" rx="16.5" ry="9.4" fill="url(#cell)" transform="rotate(-6 240 180)"/><ellipse cx="269" cy="179" rx="12.2" ry="8.7" fill="url(#cell)" transform="rotate(-10 269 179)"/><ellipse cx="288" cy="181" rx="17.0" ry="7.8" fill="url(#cell)" transform="rotate(-7 288 181)"/><ellipse cx="321" cy="183" rx="15.9" ry="8.3" fill="url(#cell)" transform="rotate(-6 321 183)"/><ellipse cx="349" cy="181" rx="12.3" ry="9.0" fill="url(#cell)" transform="rotate(2 349 181)"/><ellipse cx="372" cy="183" rx="14.7" ry="9.4" fill="url(#cell)" transform="rotate(24 372 183)"/><ellipse cx="397" cy="180" rx="11.8" ry="7.1" fill="url(#cell)" transform="rotate(8 397 180)"/><ellipse cx="-7" cy="193" rx="16.8" ry="8.1" fill="url(#cell)" transform="rotate(7 -7 193)"/><ellipse cx="27" cy="194" rx="15.9" ry="7.3" fill="url(#cell)" transform="rotate(0 27 194)"/><ellipse cx="53" cy="193" rx="14.4" ry="9.1" fill="url(#cell)" transform="rotate(-5 53 193)"/><ellipse cx="80" cy="194" rx="16.1" ry="8.0" fill="url(#cell)" transform="rotate(-12 80 194)"/><ellipse cx="107" cy="196" rx="13.2" ry="7.6" fill="url(#cell)" transform="rotate(-4 107 196)"/><ellipse cx="130" cy="195" rx="15.6" ry="7.4" fill="url(#cell)" transform="rotate(-12 130 195)"/><ellipse cx="156" cy="195" rx="11.1" ry="9.2" fill="url(#cell)" transform="rotate(9 156 195)"/><ellipse cx="176" cy="195" rx="12.7" ry="7.7" fill="url(#cell)" transform="rotate(9 176 195)"/><ellipse cx="201" cy="194" rx="11.9" ry="7.6" fill="url(#cell)" transform="rotate(13 201 194)"/><ellipse cx="218" cy="196" rx="15.3" ry="7.0" fill="url(#cell)" transform="rotate(22 218 196)"/><ellipse cx="246" cy="195" rx="15.2" ry="8.2" fill="url(#cell)" transform="rotate(-6 246 195)"/><ellipse cx="274" cy="194" rx="12.9" ry="7.1" fill="url(#cell)" transform="rotate(-0 274 194)"/><ellipse cx="295" cy="193" rx="12.3" ry="7.2" fill="url(#cell)" transform="rotate(24 295 193)"/><ellipse cx="318" cy="195" rx="11.2" ry="8.8" fill="url(#cell)" transform="rotate(1 318 195)"/><ellipse cx="337" cy="194" rx="16.9" ry="9.0" fill="url(#cell)" transform="rotate(22 337 194)"/><ellipse cx="368" cy="195" rx="11.9" ry="9.2" fill="url(#cell)" transform="rotate(9 368 195)"/><ellipse cx="388" cy="194" rx="14.5" ry="7.2" fill="url(#cell)" transform="rotate(-2 388 194)"/><ellipse cx="-10" cy="208" rx="15.3" ry="8.1" fill="url(#cell)" transform="rotate(8 -10 208)"/><ellipse cx="16" cy="209" rx="12.5" ry="8.3" fill="url(#cell)" transform="rotate(-20 16 209)"/><ellipse cx="39" cy="207" rx="14.3" ry="8.1" fill="url(#cell)" transform="rotate(-6 39 207)"/><ellipse cx="65" cy="210" rx="16.9" ry="7.3" fill="url(#cell)" transform="rotate(-9 65 210)"/><ellipse cx="95" cy="206" rx="11.5" ry="8.2" fill="url(#cell)" transform="rotate(1 95 206)"/><ellipse cx="114" cy="207" rx="15.7" ry="7.3" fill="url(#cell)" transform="rotate(-22 114 207)"/><ellipse cx="142" cy="208" rx="14.1" ry="7.7" fill="url(#cell)" transform="rotate(-17 142 208)"/><ellipse cx="168" cy="207" rx="16.5" ry="7.0" fill="url(#cell)" transform="rotate(6 168 207)"/><ellipse cx="195" cy="209" rx="14.6" ry="8.1" fill="url(#cell)" transform="rotate(5 195 209)"/><ellipse cx="223" cy="210" rx="16.8" ry="8.5" fill="url(#cell)" transform="rotate(13 223 210)"/><ellipse cx="251" cy="209" rx="13.0" ry="8.5" fill="url(#cell)" transform="rotate(9 251 209)"/><ellipse cx="276" cy="207" rx="16.2" ry="9.2" fill="url(#cell)" transform="rotate(2 276 207)"/><ellipse cx="302" cy="207" rx="11.5" ry="7.8" fill="url(#cell)" transform="rotate(18 302 207)"/><ellipse cx="325" cy="209" rx="11.7" ry="9.3" fill="url(#cell)" transform="rotate(-2 325 209)"/><ellipse cx="344" cy="210" rx="12.7" ry="8.1" fill="url(#cell)" transform="rotate(-9 344 210)"/><ellipse cx="364" cy="210" rx="11.5" ry="9.1" fill="url(#cell)" transform="rotate(-3 364 210)"/><ellipse cx="386" cy="209" rx="16.9" ry="8.2" fill="url(#cell)" transform="rotate(19 386 209)"/><ellipse cx="-7" cy="221" rx="13.8" ry="9.0" fill="url(#cell)" transform="rotate(5 -7 221)"/><ellipse cx="17" cy="221" rx="16.3" ry="9.1" fill="url(#cell)" transform="rotate(-21 17 221)"/><ellipse cx="46" cy="220" rx="16.0" ry="7.1" fill="url(#cell)" transform="rotate(-9 46 220)"/><ellipse cx="75" cy="221" rx="17.0" ry="7.2" fill="url(#cell)" transform="rotate(-0 75 221)"/><ellipse cx="107" cy="223" rx="13.1" ry="7.4" fill="url(#cell)" transform="rotate(-19 107 223)"/><ellipse cx="131" cy="220" rx="11.4" ry="8.0" fill="url(#cell)" transform="rotate(-20 131 220)"/><ellipse cx="149" cy="220" rx="14.9" ry="8.9" fill="url(#cell)" transform="rotate(-6 149 220)"/><ellipse cx="173" cy="223" rx="11.6" ry="7.2" fill="url(#cell)" transform="rotate(-21 173 223)"/><ellipse cx="194" cy="221" rx="13.9" ry="9.1" fill="url(#cell)" transform="rotate(3 194 221)"/><ellipse cx="220" cy="223" rx="14.4" ry="7.5" fill="url(#cell)" transform="rotate(19 220 223)"/><ellipse cx="243" cy="222" rx="16.8" ry="7.1" fill="url(#cell)" transform="rotate(-10 243 222)"/><ellipse cx="275" cy="223" rx="16.8" ry="7.7" fill="url(#cell)" transform="rotate(5 275 223)"/><ellipse cx="305" cy="222" rx="15.6" ry="7.4" fill="url(#cell)" transform="rotate(6 305 222)"/><ellipse cx="332" cy="223" rx="12.1" ry="9.1" fill="url(#cell)" transform="rotate(1 332 223)"/><ellipse cx="355" cy="223" rx="16.0" ry="7.3" fill="url(#cell)" transform="rotate(12 355 223)"/><ellipse cx="384" cy="223" rx="13.5" ry="9.5" fill="url(#cell)" transform="rotate(-2 384 223)"/><ellipse cx="-13" cy="235" rx="14.7" ry="7.3" fill="url(#cell)" transform="rotate(8 -13 235)"/><ellipse cx="17" cy="237" rx="12.6" ry="9.1" fill="url(#cell)" transform="rotate(-22 17 237)"/><ellipse cx="39" cy="234" rx="11.8" ry="9.4" fill="url(#cell)" transform="rotate(-19 39 234)"/><ellipse cx="56" cy="234" rx="15.3" ry="7.2" fill="url(#cell)" transform="rotate(-5 56 234)"/><ellipse cx="84" cy="237" rx="13.2" ry="9.1" fill="url(#cell)" transform="rotate(3 84 237)"/><ellipse cx="109" cy="233" rx="13.2" ry="8.5" fill="url(#cell)" transform="rotate(8 109 233)"/><ellipse cx="133" cy="233" rx="13.6" ry="8.3" fill="url(#cell)" transform="rotate(-16 133 233)"/><ellipse cx="154" cy="236" rx="11.2" ry="8.8" fill="url(#cell)" transform="rotate(0 154 236)"/><ellipse cx="175" cy="236" rx="17.0" ry="7.5" fill="url(#cell)" transform="rotate(-9 175 236)"/><ellipse cx="206" cy="235" rx="12.1" ry="8.7" fill="url(#cell)" transform="rotate(3 206 235)"/><ellipse cx="228" cy="234" rx="11.8" ry="8.0" fill="url(#cell)" transform="rotate(23 228 234)"/><ellipse cx="248" cy="237" rx="13.1" ry="8.2" fill="url(#cell)" transform="rotate(20 248 237)"/><ellipse cx="268" cy="235" rx="13.5" ry="8.1" fill="url(#cell)" transform="rotate(19 268 235)"/><ellipse cx="292" cy="235" rx="12.1" ry="7.8" fill="url(#cell)" transform="rotate(7 292 235)"/><ellipse cx="316" cy="234" rx="16.9" ry="8.7" fill="url(#cell)" transform="rotate(5 316 234)"/><ellipse cx="345" cy="236" rx="15.2" ry="7.2" fill="url(#cell)" transform="rotate(-9 345 236)"/><ellipse cx="371" cy="236" rx="12.2" ry="9.0" fill="url(#cell)" transform="rotate(5 371 236)"/><ellipse cx="393" cy="237" rx="13.3" ry="9.2" fill="url(#cell)" transform="rotate(19 393 237)"/><ellipse cx="-2" cy="248" rx="11.6" ry="7.8" fill="url(#cell)" transform="rotate(-4 -2 248)"/><ellipse cx="17" cy="250" rx="12.2" ry="8.8" fill="url(#cell)" transform="rotate(-4 17 250)"/><ellipse cx="38" cy="250" rx="11.7" ry="9.0" fill="url(#cell)" transform="rotate(-7 38 250)"/><ellipse cx="58" cy="249" rx="12.9" ry="8.1" fill="url(#cell)" transform="rotate(-3 58 249)"/><ellipse cx="79" cy="250" rx="16.2" ry="8.3" fill="url(#cell)" transform="rotate(-0 79 250)"/><ellipse cx="110" cy="249" rx="11.9" ry="8.2" fill="url(#cell)" transform="rotate(-21 110 249)"/><ellipse cx="129" cy="249" rx="16.2" ry="8.8" fill="url(#cell)" transform="rotate(5 129 249)"/><ellipse cx="159" cy="247" rx="14.5" ry="9.4" fill="url(#cell)" transform="rotate(-2 159 247)"/><ellipse cx="185" cy="250" rx="16.0" ry="9.3" fill="url(#cell)" transform="rotate(3 185 250)"/><ellipse cx="211" cy="247" rx="13.8" ry="7.2" fill="url(#cell)" transform="rotate(22 211 247)"/><ellipse cx="238" cy="248" rx="15.8" ry="9.3" fill="url(#cell)" transform="rotate(10 238 248)"/><ellipse cx="265" cy="247" rx="11.2" ry="7.4" fill="url(#cell)" transform="rotate(1 265 247)"/><ellipse cx="283" cy="247" rx="14.1" ry="7.4" fill="url(#cell)" transform="rotate(6 283 247)"/><ellipse cx="310" cy="249" rx="16.0" ry="8.1" fill="url(#cell)" transform="rotate(18 310 249)"/><ellipse cx="336" cy="247" rx="15.8" ry="8.3" fill="url(#cell)" transform="rotate(-0 336 247)"/><ellipse cx="366" cy="248" rx="13.0" ry="8.5" fill="url(#cell)" transform="rotate(-4 366 248)"/><ellipse cx="390" cy="247" rx="15.4" ry="9.5" fill="url(#cell)" transform="rotate(14 390 247)"/><ellipse cx="1" cy="262" rx="14.2" ry="8.6" fill="url(#cell)" transform="rotate(-0 1 262)"/><ellipse cx="25" cy="261" rx="12.0" ry="9.1" fill="url(#cell)" transform="rotate(-3 25 261)"/><ellipse cx="45" cy="263" rx="15.9" ry="8.1" fill="url(#cell)" transform="rotate(10 45 263)"/><ellipse cx="74" cy="262" rx="16.8" ry="7.8" fill="url(#cell)" transform="rotate(-20 74 262)"/><ellipse cx="104" cy="263" rx="14.3" ry="7.7" fill="url(#cell)" transform="rotate(-6 104 263)"/><ellipse cx="128" cy="260" rx="16.9" ry="7.5" fill="url(#cell)" transform="rotate(-0 128 260)"/><ellipse cx="160" cy="264" rx="12.7" ry="7.5" fill="url(#cell)" transform="rotate(1 160 264)"/><ellipse cx="181" cy="261" rx="16.7" ry="9.3" fill="url(#cell)" transform="rotate(2 181 261)"/><ellipse cx="211" cy="263" rx="12.3" ry="7.2" fill="url(#cell)" transform="rotate(12 211 263)"/><ellipse cx="231" cy="262" rx="13.5" ry="7.3" fill="url(#cell)" transform="rotate(7 231 262)"/><ellipse cx="257" cy="263" rx="14.3" ry="8.9" fill="url(#cell)" transform="rotate(22 257 263)"/><ellipse cx="282" cy="261" rx="14.1" ry="7.9" fill="url(#cell)" transform="rotate(-4 282 261)"/><ellipse cx="305" cy="262" rx="15.3" ry="8.1" fill="url(#cell)" transform="rotate(1 305 262)"/><ellipse cx="334" cy="263" rx="11.4" ry="7.1" fill="url(#cell)" transform="rotate(19 334 263)"/><ellipse cx="354" cy="261" rx="14.6" ry="7.6" fill="url(#cell)" transform="rotate(-2 354 261)"/><ellipse cx="378" cy="264" rx="13.0" ry="7.3" fill="url(#cell)" transform="rotate(-7 378 264)"/><ellipse cx="0" cy="276" rx="15.2" ry="8.9" fill="url(#cell)" transform="rotate(-18 0 276)"/><ellipse cx="30" cy="274" rx="14.0" ry="8.1" fill="url(#cell)" transform="rotate(-25 30 274)"/><ellipse cx="54" cy="274" rx="14.5" ry="8.3" fill="url(#cell)" transform="rotate(-12 54 274)"/><ellipse cx="78" cy="274" rx="15.3" ry="8.5" fill="url(#cell)" transform="rotate(-23 78 274)"/><ellipse cx="104" cy="275" rx="16.4" ry="7.7" fill="url(#cell)" transform="rotate(-18 104 275)"/><ellipse cx="135" cy="276" rx="14.3" ry="7.1" fill="url(#cell)" transform="rotate(-6 135 276)"/><ellipse cx="160" cy="276" rx="14.6" ry="7.6" fill="url(#cell)" transform="rotate(-15 160 276)"/><ellipse cx="186" cy="277" rx="16.0" ry="7.5" fill="url(#cell)" transform="rotate(-2 186 277)"/><ellipse cx="214" cy="277" rx="12.7" ry="7.9" fill="url(#cell)" transform="rotate(3 214 277)"/><ellipse cx="238" cy="276" rx="16.0" ry="8.7" fill="url(#cell)" transform="rotate(-0 238 276)"/><ellipse cx="264" cy="275" rx="15.1" ry="8.1" fill="url(#cell)" transform="rotate(-3 264 275)"/><ellipse cx="294" cy="276" rx="11.4" ry="7.7" fill="url(#cell)" transform="rotate(5 294 276)"/><ellipse cx="312" cy="275" rx="14.5" ry="8.0" fill="url(#cell)" transform="rotate(20 312 275)"/><ellipse cx="338" cy="275" rx="15.8" ry="8.1" fill="url(#cell)" transform="rotate(17 338 275)"/><ellipse cx="364" cy="277" rx="16.0" ry="9.3" fill="url(#cell)" transform="rotate(-2 364 277)"/><ellipse cx="395" cy="274" rx="11.7" ry="8.0" fill="url(#cell)" transform="rotate(13 395 274)"/><ellipse cx="0" cy="288" rx="15.7" ry="9.1" fill="url(#cell)" transform="rotate(-16 0 288)"/><ellipse cx="31" cy="288" rx="13.2" ry="9.2" fill="url(#cell)" transform="rotate(-5 31 288)"/><ellipse cx="52" cy="287" rx="14.6" ry="9.4" fill="url(#cell)" transform="rotate(-22 52 287)"/><ellipse cx="77" cy="290" rx="11.9" ry="8.2" fill="url(#cell)" transform="rotate(-18 77 290)"/><ellipse cx="99" cy="290" rx="11.3" ry="8.8" fill="url(#cell)" transform="rotate(-5 99 290)"/><ellipse cx="120" cy="290" rx="13.3" ry="7.2" fill="url(#cell)" transform="rotate(-16 120 290)"/><ellipse cx="144" cy="290" rx="11.5" ry="8.6" fill="url(#cell)" transform="rotate(7 144 290)"/><ellipse cx="161" cy="289" rx="17.0" ry="7.3" fill="url(#cell)" transform="rotate(-21 161 289)"/><ellipse cx="191" cy="290" rx="13.9" ry="9.0" fill="url(#cell)" transform="rotate(-16 191 290)"/><ellipse cx="215" cy="287" rx="15.9" ry="7.2" fill="url(#cell)" transform="rotate(10 215 287)"/><ellipse cx="245" cy="291" rx="11.1" ry="8.7" fill="url(#cell)" transform="rotate(3 245 291)"/><ellipse cx="264" cy="290" rx="16.0" ry="8.9" fill="url(#cell)" transform="rotate(11 264 290)"/><ellipse cx="292" cy="289" rx="14.6" ry="8.1" fill="url(#cell)" transform="rotate(8 292 289)"/><ellipse cx="317" cy="291" rx="13.6" ry="9.5" fill="url(#cell)" transform="rotate(10 317 291)"/><ellipse cx="341" cy="289" rx="11.6" ry="8.4" fill="url(#cell)" transform="rotate(7 341 289)"/><ellipse cx="361" cy="291" rx="15.6" ry="9.3" fill="url(#cell)" transform="rotate(23 361 291)"/><ellipse cx="390" cy="287" rx="11.9" ry="7.2" fill="url(#cell)" transform="rotate(-6 390 287)"/><ellipse cx="-6" cy="303" rx="12.3" ry="8.5" fill="url(#cell)" transform="rotate(-3 -6 303)"/><ellipse cx="18" cy="304" rx="11.5" ry="8.7" fill="url(#cell)" transform="rotate(-24 18 304)"/><ellipse cx="36" cy="302" rx="15.1" ry="7.8" fill="url(#cell)" transform="rotate(-23 36 302)"/><ellipse cx="65" cy="301" rx="14.8" ry="7.3" fill="url(#cell)" transform="rotate(-3 65 301)"/><ellipse cx="88" cy="302" rx="14.3" ry="7.1" fill="url(#cell)" transform="rotate(-11 88 302)"/><ellipse cx="114" cy="304" rx="11.9" ry="7.3" fill="url(#cell)" transform="rotate(-20 114 304)"/><ellipse cx="137" cy="304" rx="15.5" ry="7.3" fill="url(#cell)" transform="rotate(6 137 304)"/><ellipse cx="163" cy="303" rx="13.3" ry="9.4" fill="url(#cell)" transform="rotate(4 163 303)"/><ellipse cx="187" cy="301" rx="11.9" ry="7.1" fill="url(#cell)" transform="rotate(-17 187 301)"/><ellipse cx="206" cy="301" rx="14.0" ry="7.4" fill="url(#cell)" transform="rotate(-7 206 301)"/><ellipse cx="233" cy="302" rx="15.9" ry="9.1" fill="url(#cell)" transform="rotate(22 233 302)"/><ellipse cx="258" cy="302" rx="14.3" ry="8.4" fill="url(#cell)" transform="rotate(-2 258 302)"/><ellipse cx="286" cy="302" rx="14.9" ry="9.4" fill="url(#cell)" transform="rotate(19 286 302)"/><ellipse cx="310" cy="304" rx="11.5" ry="9.0" fill="url(#cell)" transform="rotate(16 310 304)"/><ellipse cx="332" cy="302" rx="16.9" ry="8.2" fill="url(#cell)" transform="rotate(16 332 302)"/><ellipse cx="363" cy="304" rx="14.2" ry="8.1" fill="url(#cell)" transform="rotate(-0 363 304)"/><ellipse cx="387" cy="302" rx="12.5" ry="9.5" fill="url(#cell)" transform="rotate(9 387 302)"/><ellipse cx="-8" cy="317" rx="13.7" ry="7.7" fill="url(#cell)" transform="rotate(2 -8 317)"/><ellipse cx="15" cy="317" rx="16.6" ry="9.3" fill="url(#cell)" transform="rotate(-1 15 317)"/><ellipse cx="48" cy="316" rx="14.8" ry="8.2" fill="url(#cell)" transform="rotate(8 48 316)"/><ellipse cx="71" cy="317" rx="11.6" ry="7.9" fill="url(#cell)" transform="rotate(-9 71 317)"/><ellipse cx="92" cy="315" rx="12.9" ry="7.8" fill="url(#cell)" transform="rotate(-8 92 315)"/><ellipse cx="114" cy="316" rx="14.7" ry="7.1" fill="url(#cell)" transform="rotate(-2 114 316)"/><ellipse cx="141" cy="318" rx="14.6" ry="8.8" fill="url(#cell)" transform="rotate(2 141 318)"/><ellipse cx="168" cy="315" rx="14.0" ry="8.4" fill="url(#cell)" transform="rotate(-15 168 315)"/><ellipse cx="190" cy="316" rx="14.0" ry="8.3" fill="url(#cell)" transform="rotate(7 190 316)"/><ellipse cx="217" cy="315" rx="16.2" ry="8.3" fill="url(#cell)" transform="rotate(-7 217 315)"/><ellipse cx="245" cy="316" rx="15.9" ry="8.3" fill="url(#cell)" transform="rotate(24 245 316)"/><ellipse cx="274" cy="317" rx="12.8" ry="8.4" fill="url(#cell)" transform="rotate(22 274 317)"/><ellipse cx="294" cy="315" rx="11.2" ry="9.0" fill="url(#cell)" transform="rotate(2 294 315)"/><ellipse cx="316" cy="316" rx="15.8" ry="9.2" fill="url(#cell)" transform="rotate(13 316 316)"/><ellipse cx="343" cy="314" rx="11.2" ry="7.9" fill="url(#cell)" transform="rotate(1 343 314)"/><ellipse cx="361" cy="315" rx="12.7" ry="7.3" fill="url(#cell)" transform="rotate(13 361 315)"/><ellipse cx="386" cy="317" rx="16.1" ry="7.8" fill="url(#cell)" transform="rotate(-6 386 317)"/><ellipse cx="-9" cy="330" rx="16.3" ry="7.4" fill="url(#cell)" transform="rotate(3 -9 330)"/><ellipse cx="18" cy="330" rx="15.7" ry="9.0" fill="url(#cell)" transform="rotate(6 18 330)"/><ellipse cx="46" cy="329" rx="15.0" ry="9.4" fill="url(#cell)" transform="rotate(9 46 329)"/><ellipse cx="73" cy="329" rx="12.8" ry="7.9" fill="url(#cell)" transform="rotate(-10 73 329)"/><ellipse cx="97" cy="331" rx="14.0" ry="7.6" fill="url(#cell)" transform="rotate(-13 97 331)"/><ellipse cx="122" cy="331" rx="12.5" ry="9.3" fill="url(#cell)" transform="rotate(7 122 331)"/><ellipse cx="141" cy="330" rx="16.9" ry="7.8" fill="url(#cell)" transform="rotate(-2 141 330)"/><ellipse cx="175" cy="330" rx="13.3" ry="9.3" fill="url(#cell)" transform="rotate(-4 175 330)"/><ellipse cx="196" cy="330" rx="13.5" ry="7.5" fill="url(#cell)" transform="rotate(7 196 330)"/><ellipse cx="222" cy="328" rx="14.1" ry="8.6" fill="url(#cell)" transform="rotate(-7 222 328)"/><ellipse cx="246" cy="330" rx="15.6" ry="7.5" fill="url(#cell)" transform="rotate(13 246 330)"/><ellipse cx="274" cy="331" rx="14.8" ry="8.0" fill="url(#cell)" transform="rotate(19 274 331)"/><ellipse cx="299" cy="331" rx="13.7" ry="8.8" fill="url(#cell)" transform="rotate(-10 299 331)"/><ellipse cx="326" cy="330" rx="14.4" ry="8.9" fill="url(#cell)" transform="rotate(8 326 330)"/><ellipse cx="349" cy="330" rx="14.6" ry="8.9" fill="url(#cell)" transform="rotate(-1 349 330)"/><ellipse cx="374" cy="329" rx="11.5" ry="7.2" fill="url(#cell)" transform="rotate(-5 374 329)"/><ellipse cx="395" cy="328" rx="15.7" ry="8.7" fill="url(#cell)" transform="rotate(5 395 328)"/><ellipse cx="-0" cy="344" rx="16.0" ry="8.7" fill="url(#cell)" transform="rotate(-7 -0 344)"/><ellipse cx="29" cy="341" rx="13.0" ry="9.3" fill="url(#cell)" transform="rotate(-23 29 341)"/><ellipse cx="51" cy="343" rx="13.8" ry="8.9" fill="url(#cell)" transform="rotate(-20 51 343)"/><ellipse cx="75" cy="342" rx="14.6" ry="8.0" fill="url(#cell)" transform="rotate(-4 75 342)"/><ellipse cx="102" cy="343" rx="16.0" ry="8.3" fill="url(#cell)" transform="rotate(-0 102 343)"/><ellipse cx="132" cy="343" rx="15.2" ry="7.0" fill="url(#cell)" transform="rotate(-23 132 343)"/><ellipse cx="157" cy="343" rx="15.3" ry="8.9" fill="url(#cell)" transform="rotate(-24 157 343)"/><ellipse cx="186" cy="343" rx="15.4" ry="8.7" fill="url(#cell)" transform="rotate(7 186 343)"/><ellipse cx="210" cy="342" rx="13.5" ry="7.0" fill="url(#cell)" transform="rotate(-2 210 342)"/><ellipse cx="236" cy="345" rx="12.4" ry="7.2" fill="url(#cell)" transform="rotate(23 236 345)"/><ellipse cx="257" cy="343" rx="13.1" ry="8.2" fill="url(#cell)" transform="rotate(16 257 343)"/><ellipse cx="280" cy="341" rx="13.6" ry="7.0" fill="url(#cell)" transform="rotate(14 280 341)"/><ellipse cx="305" cy="343" rx="16.8" ry="8.4" fill="url(#cell)" transform="rotate(24 305 343)"/><ellipse cx="334" cy="343" rx="12.0" ry="8.4" fill="url(#cell)" transform="rotate(-2 334 343)"/><ellipse cx="354" cy="344" rx="15.7" ry="7.8" fill="url(#cell)" transform="rotate(-9 354 344)"/><ellipse cx="384" cy="342" rx="12.1" ry="9.3" fill="url(#cell)" transform="rotate(-5 384 342)"/><ellipse cx="-1" cy="358" rx="16.0" ry="9.5" fill="url(#cell)" transform="rotate(-22 -1 358)"/><ellipse cx="26" cy="355" rx="15.7" ry="8.1" fill="url(#cell)" transform="rotate(-25 26 355)"/><ellipse cx="53" cy="358" rx="14.1" ry="8.6" fill="url(#cell)" transform="rotate(-23 53 358)"/><ellipse cx="77" cy="358" rx="16.2" ry="9.3" fill="url(#cell)" transform="rotate(-3 77 358)"/><ellipse cx="108" cy="358" rx="13.6" ry="8.1" fill="url(#cell)" transform="rotate(2 108 358)"/><ellipse cx="130" cy="357" rx="13.8" ry="8.1" fill="url(#cell)" transform="rotate(5 130 357)"/><ellipse cx="156" cy="358" rx="14.8" ry="8.5" fill="url(#cell)" transform="rotate(5 156 358)"/><ellipse cx="184" cy="356" rx="14.1" ry="8.7" fill="url(#cell)" transform="rotate(-3 184 356)"/><ellipse cx="206" cy="358" rx="12.7" ry="8.9" fill="url(#cell)" transform="rotate(14 206 358)"/><ellipse cx="230" cy="356" rx="14.2" ry="8.4" fill="url(#cell)" transform="rotate(-9 230 356)"/><ellipse cx="254" cy="355" rx="13.7" ry="7.7" fill="url(#cell)" transform="rotate(-3 254 355)"/><ellipse cx="280" cy="355" rx="16.9" ry="7.9" fill="url(#cell)" transform="rotate(-7 280 355)"/><ellipse cx="310" cy="355" rx="15.1" ry="8.1" fill="url(#cell)" transform="rotate(7 310 355)"/><ellipse cx="337" cy="355" rx="14.6" ry="7.6" fill="url(#cell)" transform="rotate(-6 337 355)"/><ellipse cx="361" cy="358" rx="11.9" ry="7.1" fill="url(#cell)" transform="rotate(-4 361 358)"/><ellipse cx="381" cy="358" rx="12.7" ry="7.8" fill="url(#cell)" transform="rotate(19 381 358)"/><ellipse cx="-12" cy="370" rx="15.0" ry="9.3" fill="url(#cell)" transform="rotate(-24 -12 370)"/><ellipse cx="16" cy="369" rx="12.9" ry="7.3" fill="url(#cell)" transform="rotate(1 16 369)"/><ellipse cx="39" cy="370" rx="13.3" ry="7.2" fill="url(#cell)" transform="rotate(1 39 370)"/><ellipse cx="62" cy="371" rx="15.5" ry="7.6" fill="url(#cell)" transform="rotate(9 62 371)"/><ellipse cx="89" cy="370" rx="14.3" ry="8.5" fill="url(#cell)" transform="rotate(-14 89 370)"/><ellipse cx="114" cy="368" rx="14.0" ry="7.7" fill="url(#cell)" transform="rotate(-22 114 368)"/><ellipse cx="141" cy="369" rx="16.2" ry="7.9" fill="url(#cell)" transform="rotate(-12 141 369)"/><ellipse cx="169" cy="371" rx="16.4" ry="8.1" fill="url(#cell)" transform="rotate(-11 169 371)"/><ellipse cx="199" cy="370" rx="12.2" ry="7.0" fill="url(#cell)" transform="rotate(17 199 370)"/><ellipse cx="219" cy="368" rx="16.9" ry="9.2" fill="url(#cell)" transform="rotate(10 219 368)"/><ellipse cx="247" cy="369" rx="13.9" ry="7.3" fill="url(#cell)" transform="rotate(3 247 369)"/><ellipse cx="275" cy="369" rx="16.3" ry="9.5" fill="url(#cell)" transform="rotate(20 275 369)"/><ellipse cx="303" cy="368" rx="13.3" ry="7.9" fill="url(#cell)" transform="rotate(14 303 368)"/><ellipse cx="327" cy="368" rx="11.4" ry="8.5" fill="url(#cell)" transform="rotate(13 327 368)"/><ellipse cx="347" cy="369" rx="14.1" ry="7.9" fill="url(#cell)" transform="rotate(-3 347 369)"/><ellipse cx="372" cy="369" rx="13.5" ry="7.9" fill="url(#cell)" transform="rotate(4 372 369)"/><ellipse cx="394" cy="369" rx="15.7" ry="8.2" fill="url(#cell)" transform="rotate(2 394 369)"/><ellipse cx="-4" cy="383" rx="15.7" ry="9.5" fill="url(#cell)" transform="rotate(2 -4 383)"/><ellipse cx="24" cy="385" rx="13.8" ry="7.6" fill="url(#cell)" transform="rotate(-17 24 385)"/><ellipse cx="46" cy="383" rx="16.2" ry="7.2" fill="url(#cell)" transform="rotate(7 46 383)"/><ellipse cx="75" cy="383" rx="13.9" ry="7.9" fill="url(#cell)" transform="rotate(-5 75 383)"/><ellipse cx="99" cy="384" rx="14.6" ry="9.2" fill="url(#cell)" transform="rotate(9 99 384)"/><ellipse cx="128" cy="385" rx="14.6" ry="8.8" fill="url(#cell)" transform="rotate(-14 128 385)"/><ellipse cx="151" cy="383" rx="13.7" ry="9.1" fill="url(#cell)" transform="rotate(9 151 383)"/><ellipse cx="177" cy="383" rx="13.4" ry="8.1" fill="url(#cell)" transform="rotate(2 177 383)"/><ellipse cx="200" cy="385" rx="11.7" ry="8.2" fill="url(#cell)" transform="rotate(20 200 385)"/><ellipse cx="223" cy="382" rx="12.8" ry="7.8" fill="url(#cell)" transform="rotate(14 223 382)"/><ellipse cx="244" cy="384" rx="11.1" ry="7.7" fill="url(#cell)" transform="rotate(12 244 384)"/><ellipse cx="264" cy="383" rx="12.3" ry="8.0" fill="url(#cell)" transform="rotate(9 264 383)"/><ellipse cx="285" cy="385" rx="14.4" ry="9.1" fill="url(#cell)" transform="rotate(2 285 385)"/><ellipse cx="307" cy="384" rx="15.4" ry="9.2" fill="url(#cell)" transform="rotate(6 307 384)"/><ellipse cx="338" cy="385" rx="13.3" ry="8.6" fill="url(#cell)" transform="rotate(18 338 385)"/><ellipse cx="360" cy="384" rx="16.6" ry="9.2" fill="url(#cell)" transform="rotate(22 360 384)"/><ellipse cx="389" cy="384" rx="14.5" ry="7.2" fill="url(#cell)" transform="rotate(-9 389 384)"/><ellipse cx="-12" cy="398" rx="16.1" ry="8.7" fill="url(#cell)" transform="rotate(-4 -12 398)"/><ellipse cx="17" cy="396" rx="13.3" ry="8.6" fill="url(#cell)" transform="rotate(-1 17 396)"/><ellipse cx="41" cy="396" rx="15.1" ry="8.5" fill="url(#cell)" transform="rotate(-20 41 396)"/><ellipse cx="68" cy="397" rx="16.6" ry="7.7" fill="url(#cell)" transform="rotate(-25 68 397)"/><ellipse cx="96" cy="399" rx="12.9" ry="7.5" fill="url(#cell)" transform="rotate(-19 96 399)"/><ellipse cx="122" cy="398" rx="12.8" ry="7.7" fill="url(#cell)" transform="rotate(-3 122 398)"/><ellipse cx="141" cy="398" rx="14.8" ry="8.5" fill="url(#cell)" transform="rotate(8 141 398)"/><ellipse cx="168" cy="398" rx="16.3" ry="9.3" fill="url(#cell)" transform="rotate(10 168 398)"/><ellipse cx="200" cy="396" rx="12.5" ry="7.7" fill="url(#cell)" transform="rotate(-5 200 396)"/><ellipse cx="220" cy="396" rx="15.1" ry="7.8" fill="url(#cell)" transform="rotate(-2 220 396)"/><ellipse cx="247" cy="397" rx="14.5" ry="8.1" fill="url(#cell)" transform="rotate(-2 247 397)"/><ellipse cx="271" cy="398" rx="12.2" ry="7.2" fill="url(#cell)" transform="rotate(2 271 398)"/><ellipse cx="295" cy="398" rx="11.0" ry="7.1" fill="url(#cell)" transform="rotate(-3 295 398)"/><ellipse cx="311" cy="396" rx="15.7" ry="9.2" fill="url(#cell)" transform="rotate(14 311 396)"/><ellipse cx="341" cy="396" rx="15.7" ry="7.7" fill="url(#cell)" transform="rotate(3 341 396)"/><ellipse cx="369" cy="399" rx="16.0" ry="8.4" fill="url(#cell)" transform="rotate(22 369 399)"/><ellipse cx="397" cy="399" rx="15.0" ry="7.1" fill="url(#cell)" transform="rotate(7 397 399)"/><ellipse cx="-11" cy="411" rx="15.0" ry="8.4" fill="url(#cell)" transform="rotate(-15 -11 411)"/><ellipse cx="15" cy="411" rx="13.3" ry="7.3" fill="url(#cell)" transform="rotate(-20 15 411)"/><ellipse cx="39" cy="412" rx="11.3" ry="8.6" fill="url(#cell)" transform="rotate(-9 39 412)"/><ellipse cx="57" cy="412" rx="11.5" ry="8.3" fill="url(#cell)" transform="rotate(-17 57 412)"/><ellipse cx="77" cy="411" rx="15.9" ry="8.6" fill="url(#cell)" transform="rotate(-23 77 411)"/><ellipse cx="104" cy="411" rx="12.6" ry="8.8" fill="url(#cell)" transform="rotate(7 104 411)"/><ellipse cx="130" cy="410" rx="16.8" ry="8.9" fill="url(#cell)" transform="rotate(-12 130 410)"/><ellipse cx="157" cy="409" rx="12.6" ry="7.2" fill="url(#cell)" transform="rotate(-17 157 409)"/><ellipse cx="180" cy="412" rx="13.0" ry="7.9" fill="url(#cell)" transform="rotate(-12 180 412)"/><ellipse cx="203" cy="411" rx="13.8" ry="9.0" fill="url(#cell)" transform="rotate(24 203 411)"/><ellipse cx="229" cy="412" rx="16.4" ry="7.7" fill="url(#cell)" transform="rotate(-2 229 412)"/><ellipse cx="257" cy="409" rx="11.9" ry="8.8" fill="url(#cell)" transform="rotate(24 257 409)"/><ellipse cx="277" cy="411" rx="13.8" ry="9.5" fill="url(#cell)" transform="rotate(-5 277 411)"/><ellipse cx="300" cy="410" rx="15.9" ry="8.1" fill="url(#cell)" transform="rotate(13 300 410)"/><ellipse cx="331" cy="412" rx="16.3" ry="8.9" fill="url(#cell)" transform="rotate(3 331 412)"/><ellipse cx="359" cy="412" rx="12.0" ry="9.3" fill="url(#cell)" transform="rotate(14 359 412)"/><ellipse cx="379" cy="410" rx="15.7" ry="8.5" fill="url(#cell)" transform="rotate(13 379 410)"/><ellipse cx="-12" cy="422" rx="13.2" ry="9.0" fill="url(#cell)" transform="rotate(-17 -12 422)"/><ellipse cx="13" cy="423" rx="13.6" ry="7.7" fill="url(#cell)" transform="rotate(-10 13 423)"/><ellipse cx="38" cy="424" rx="16.5" ry="9.1" fill="url(#cell)" transform="rotate(-6 38 424)"/><ellipse cx="66" cy="423" rx="15.8" ry="7.5" fill="url(#cell)" transform="rotate(-9 66 423)"/><ellipse cx="94" cy="425" rx="12.9" ry="8.7" fill="url(#cell)" transform="rotate(-5 94 425)"/><ellipse cx="117" cy="423" rx="14.5" ry="8.1" fill="url(#cell)" transform="rotate(-2 117 423)"/><ellipse cx="144" cy="424" rx="12.9" ry="7.7" fill="url(#cell)" transform="rotate(-21 144 424)"/><ellipse cx="165" cy="424" rx="14.7" ry="8.0" fill="url(#cell)" transform="rotate(-7 165 424)"/><ellipse cx="193" cy="425" rx="16.4" ry="7.7" fill="url(#cell)" transform="rotate(-16 193 425)"/><ellipse cx="221" cy="425" rx="11.1" ry="7.4" fill="url(#cell)" transform="rotate(6 221 425)"/><ellipse cx="241" cy="426" rx="12.4" ry="8.5" fill="url(#cell)" transform="rotate(9 241 426)"/><ellipse cx="261" cy="423" rx="12.2" ry="8.4" fill="url(#cell)" transform="rotate(-7 261 423)"/><ellipse cx="284" cy="424" rx="16.2" ry="7.7" fill="url(#cell)" transform="rotate(-10 284 424)"/><ellipse cx="310" cy="425" rx="16.4" ry="9.5" fill="url(#cell)" transform="rotate(-9 310 425)"/><ellipse cx="341" cy="425" rx="16.4" ry="7.4" fill="url(#cell)" transform="rotate(11 341 425)"/><ellipse cx="372" cy="425" rx="16.3" ry="7.4" fill="url(#cell)" transform="rotate(-6 372 425)"/><ellipse cx="398" cy="424" rx="11.2" ry="7.5" fill="url(#cell)" transform="rotate(-6 398 424)"/><ellipse cx="-9" cy="436" rx="16.1" ry="8.8" fill="url(#cell)" transform="rotate(-22 -9 436)"/><ellipse cx="19" cy="439" rx="12.9" ry="7.2" fill="url(#cell)" transform="rotate(-14 19 439)"/><ellipse cx="42" cy="436" rx="16.0" ry="7.1" fill="url(#cell)" transform="rotate(-6 42 436)"/><ellipse cx="71" cy="439" rx="16.2" ry="9.1" fill="url(#cell)" transform="rotate(-11 71 439)"/><ellipse cx="100" cy="438" rx="14.1" ry="7.7" fill="url(#cell)" transform="rotate(-11 100 438)"/><ellipse cx="124" cy="437" rx="12.2" ry="7.8" fill="url(#cell)" transform="rotate(7 124 437)"/><ellipse cx="147" cy="438" rx="14.4" ry="7.7" fill="url(#cell)" transform="rotate(-20 147 438)"/><ellipse cx="171" cy="436" rx="14.3" ry="7.7" fill="url(#cell)" transform="rotate(-13 171 436)"/><ellipse cx="198" cy="438" rx="15.3" ry="7.1" fill="url(#cell)" transform="rotate(20 198 438)"/><ellipse cx="224" cy="436" rx="11.8" ry="9.0" fill="url(#cell)" transform="rotate(14 224 436)"/><ellipse cx="244" cy="438" rx="15.3" ry="9.5" fill="url(#cell)" transform="rotate(23 244 438)"/><ellipse cx="271" cy="437" rx="14.2" ry="8.7" fill="url(#cell)" transform="rotate(4 271 437)"/><ellipse cx="297" cy="438" rx="12.1" ry="7.3" fill="url(#cell)" transform="rotate(8 297 438)"/><ellipse cx="320" cy="438" rx="14.1" ry="8.3" fill="url(#cell)" transform="rotate(2 320 438)"/><ellipse cx="343" cy="437" rx="11.6" ry="7.3" fill="url(#cell)" transform="rotate(14 343 437)"/><ellipse cx="365" cy="439" rx="11.6" ry="7.5" fill="url(#cell)" transform="rotate(-1 365 439)"/><ellipse cx="383" cy="437" rx="14.3" ry="8.4" fill="url(#cell)" transform="rotate(-8 383 437)"/><path d="M195 -5 L195 442" stroke="#b8d4b0" stroke-width="2.6" opacity="0.8"/><path d="M197.5 -5V442" stroke="#143a18" stroke-width="1.2" opacity="0.6"/><path d="M197.5 160 L128.5 245 L75.5 324 L33.5 440" stroke="#0f3214" stroke-width="2.4" fill="none" opacity="0.6"/><path d="M195 157 L126 242 L73 321 L31 437" stroke="#b8d8b0" stroke-width="2.4" fill="none" opacity="0.8"/><path d="M197.5 308 L122.5 441" stroke="#0f3214" stroke-width="2.4" fill="none" opacity="0.6"/><path d="M195 305 L120 438" stroke="#b8d8b0" stroke-width="2.4" fill="none" opacity="0.8"/><path d="M197.5 141 L233.5 185 L287.5 254 L334.5 336 L369.5 443" stroke="#0f3214" stroke-width="2.4" fill="none" opacity="0.6"/><path d="M195 138 L231 182 L285 251 L332 333 L367 440" stroke="#b8d8b0" stroke-width="2.4" fill="none" opacity="0.8"/><path d="M197.5 302 L230.5 355 L271.5 443" stroke="#0f3214" stroke-width="2.4" fill="none" opacity="0.6"/><path d="M195 299 L228 352 L269 440" stroke="#b8d8b0" stroke-width="2.4" fill="none" opacity="0.8"/><path d="M258.5 3 L334.5 122 L362.5 163 L397.5 233" stroke="#0f3214" stroke-width="2.4" fill="none" opacity="0.6"/><path d="M256 0 L332 119 L360 160 L395 230" stroke="#b8d8b0" stroke-width="2.4" fill="none" opacity="0.8"/><path d="M169 0 L79 119 L0 225" stroke="#c8d8cc" stroke-width="6" fill="none" opacity="0.55" filter="url(#blur2)"/><path d="M85 270 L58 330 L38 385" stroke="#c8d8cc" stroke-width="5" fill="none" opacity="0.4" filter="url(#blur2)"/><path d="M140 370 L115 437" stroke="#c8d8cc" stroke-width="4" fill="none" opacity="0.35" filter="url(#blur2)"/><g transform="translate(370.2 104.2) rotate(23)"><ellipse cx="1" cy="1.5" rx="6.6" ry="9.9" fill="#143a17" opacity="0.5"/><path d="M0 -10.1 C4.9 -4.4 5.4 1.7 5.4 2.6 A5.4 6.1 0 0 1 -5.4 2.6 C-5.4 1.7 -4.9 -4.4 0 -10.1Z" fill="url(#dr)"/><ellipse cx="-0.3" cy="-4.8" rx="2.7" ry="2.6" fill="#eef6ee" opacity="0.8"/></g><g transform="translate(159.1 69.7) rotate(-11)"><ellipse cx="1" cy="1.5" rx="5.4" ry="7.0" fill="#143a17" opacity="0.5"/><path d="M0 -6.7 C3.8 -2.9 4.2 1.2 4.2 1.8 A4.2 4.1 0 0 1 -4.2 1.8 C-4.2 1.2 -3.8 -2.9 0 -6.7Z" fill="url(#dr)"/><ellipse cx="-0.2" cy="-3.2" rx="2.1" ry="1.8" fill="#eef6ee" opacity="0.8"/></g><g transform="translate(327.4 318.2) rotate(5)"><ellipse cx="1" cy="1.5" rx="9.8" ry="12.4" fill="#143a17" opacity="0.5"/><path d="M0 -12.9 C7.8 -5.6 8.6 2.2 8.6 3.4 A8.6 7.8 0 0 1 -8.6 3.4 C-8.6 2.2 -7.8 -5.6 0 -12.9Z" fill="url(#dr)"/><ellipse cx="-0.4" cy="-6.2" rx="4.3" ry="3.4" fill="#eef6ee" opacity="0.8"/></g><g transform="translate(100.7 113.7) rotate(17)"><ellipse cx="1" cy="1.5" rx="6.3" ry="6.5" fill="#143a17" opacity="0.5"/><path d="M0 -6.1 C4.6 -2.7 5.1 1.1 5.1 1.6 A5.1 3.7 0 0 1 -5.1 1.6 C-5.1 1.1 -4.6 -2.7 0 -6.1Z" fill="url(#dr)"/><ellipse cx="-0.3" cy="-2.9" rx="2.6" ry="1.6" fill="#eef6ee" opacity="0.8"/></g><g transform="translate(174.9 207.6) rotate(5)"><ellipse cx="1" cy="1.5" rx="11.9" ry="16.0" fill="#143a17" opacity="0.5"/><path d="M0 -17.1 C9.6 -7.4 10.7 3.0 10.7 4.5 A10.7 10.4 0 0 1 -10.7 4.5 C-10.7 3.0 -9.6 -7.4 0 -17.1Z" fill="url(#dr)"/><ellipse cx="-0.5" cy="-8.2" rx="5.3" ry="4.5" fill="#eef6ee" opacity="0.8"/></g><g transform="translate(362.2 286.5) rotate(-11)"><ellipse cx="1" cy="1.5" rx="3.3" ry="4.3" fill="#143a17" opacity="0.5"/><path d="M0 -3.6 C1.8 -1.6 2.1 0.6 2.1 0.9 A2.1 2.2 0 0 1 -2.1 0.9 C-2.1 0.6 -1.8 -1.6 0 -3.6Z" fill="url(#dr)"/></g><g transform="translate(286.4 262.1) rotate(-7)"><ellipse cx="1" cy="1.5" rx="5.3" ry="6.7" fill="#143a17" opacity="0.5"/><path d="M0 -6.4 C3.7 -2.8 4.1 1.1 4.1 1.7 A4.1 3.9 0 0 1 -4.1 1.7 C-4.1 1.1 -3.7 -2.8 0 -6.4Z" fill="url(#dr)"/><ellipse cx="-0.2" cy="-3.0" rx="2.0" ry="1.7" fill="#eef6ee" opacity="0.8"/></g><g transform="translate(70.2 99.7) rotate(-22)"><ellipse cx="1" cy="1.5" rx="5.3" ry="5.5" fill="#143a17" opacity="0.5"/><path d="M0 -5.0 C3.7 -2.2 4.1 0.9 4.1 1.3 A4.1 3.0 0 0 1 -4.1 1.3 C-4.1 0.9 -3.7 -2.2 0 -5.0Z" fill="url(#dr)"/><ellipse cx="-0.2" cy="-2.4" rx="2.1" ry="1.3" fill="#eef6ee" opacity="0.8"/></g><g transform="translate(175.0 359.0) rotate(6)"><ellipse cx="1" cy="1.5" rx="5.4" ry="7.9" fill="#143a17" opacity="0.5"/><path d="M0 -7.7 C3.8 -3.4 4.2 1.3 4.2 2.0 A4.2 4.7 0 0 1 -4.2 2.0 C-4.2 1.3 -3.8 -3.4 0 -7.7Z" fill="url(#dr)"/><ellipse cx="-0.2" cy="-3.7" rx="2.1" ry="2.0" fill="#eef6ee" opacity="0.8"/></g><g transform="translate(173.3 126.6) rotate(9)"><ellipse cx="1" cy="1.5" rx="8.7" ry="11.7" fill="#143a17" opacity="0.5"/><path d="M0 -12.1 C6.8 -5.3 7.5 2.1 7.5 3.2 A7.5 7.4 0 0 1 -7.5 3.2 C-7.5 2.1 -6.8 -5.3 0 -12.1Z" fill="url(#dr)"/><ellipse cx="-0.4" cy="-5.8" rx="3.8" ry="3.2" fill="#eef6ee" opacity="0.8"/></g><g transform="translate(206.3 31.7) rotate(-11)"><ellipse cx="1" cy="1.5" rx="5.6" ry="7.6" fill="#143a17" opacity="0.5"/><path d="M0 -7.3 C4.0 -3.2 4.4 1.3 4.4 1.9 A4.4 4.5 0 0 1 -4.4 1.9 C-4.4 1.3 -4.0 -3.2 0 -7.3Z" fill="url(#dr)"/><ellipse cx="-0.2" cy="-3.5" rx="2.2" ry="1.9" fill="#eef6ee" opacity="0.8"/></g><g transform="translate(60.3 356.3) rotate(20)"><ellipse cx="1" cy="1.5" rx="10.1" ry="11.0" fill="#143a17" opacity="0.5"/><path d="M0 -11.3 C8.0 -4.9 8.9 2.0 8.9 2.9 A8.9 6.9 0 0 1 -8.9 2.9 C-8.9 2.0 -8.0 -4.9 0 -11.3Z" fill="url(#dr)"/><ellipse cx="-0.4" cy="-5.4" rx="4.4" ry="2.9" fill="#eef6ee" opacity="0.8"/></g><g transform="translate(362.2 36.5) rotate(-22)"><ellipse cx="1" cy="1.5" rx="5.3" ry="6.2" fill="#143a17" opacity="0.5"/><path d="M0 -5.8 C3.7 -2.5 4.1 1.0 4.1 1.5 A4.1 3.5 0 0 1 -4.1 1.5 C-4.1 1.0 -3.7 -2.5 0 -5.8Z" fill="url(#dr)"/><ellipse cx="-0.2" cy="-2.8" rx="2.1" ry="1.5" fill="#eef6ee" opacity="0.8"/></g><g transform="translate(242.4 4.9) rotate(4)"><ellipse cx="1" cy="1.5" rx="7.8" ry="11.6" fill="#143a17" opacity="0.5"/><path d="M0 -12.0 C5.9 -5.2 6.6 2.1 6.6 3.1 A6.6 7.3 0 0 1 -6.6 3.1 C-6.6 2.1 -5.9 -5.2 0 -12.0Z" fill="url(#dr)"/><ellipse cx="-0.3" cy="-5.7" rx="3.3" ry="3.1" fill="#eef6ee" opacity="0.8"/></g><g transform="translate(162.6 238.3) rotate(-21)"><ellipse cx="1" cy="1.5" rx="5.8" ry="7.9" fill="#143a17" opacity="0.5"/><path d="M0 -7.7 C4.1 -3.4 4.6 1.3 4.6 2.0 A4.6 4.7 0 0 1 -4.6 2.0 C-4.6 1.3 -4.1 -3.4 0 -7.7Z" fill="url(#dr)"/><ellipse cx="-0.2" cy="-3.7" rx="2.3" ry="2.0" fill="#eef6ee" opacity="0.8"/></g><g transform="translate(204.2 304.7) rotate(-6)"><ellipse cx="1" cy="1.5" rx="9.8" ry="11.3" fill="#143a17" opacity="0.5"/><path d="M0 -11.6 C7.8 -5.0 8.6 2.0 8.6 3.0 A8.6 7.1 0 0 1 -8.6 3.0 C-8.6 2.0 -7.8 -5.0 0 -11.6Z" fill="url(#dr)"/><ellipse cx="-0.4" cy="-5.5" rx="4.3" ry="3.0" fill="#eef6ee" opacity="0.8"/></g><g transform="translate(19.4 87.8) rotate(10)"><ellipse cx="1" cy="1.5" rx="4.0" ry="4.6" fill="#143a17" opacity="0.5"/><path d="M0 -3.9 C2.5 -1.7 2.8 0.7 2.8 1.0 A2.8 2.4 0 0 1 -2.8 1.0 C-2.8 0.7 -2.5 -1.7 0 -3.9Z" fill="url(#dr)"/></g><g transform="translate(249.4 283.7) rotate(18)"><ellipse cx="1" cy="1.5" rx="3.8" ry="4.0" fill="#143a17" opacity="0.5"/><path d="M0 -3.2 C2.3 -1.4 2.6 0.6 2.6 0.8 A2.6 2.0 0 0 1 -2.6 0.8 C-2.6 0.6 -2.3 -1.4 0 -3.2Z" fill="url(#dr)"/></g><g transform="translate(5.4 252.7) rotate(-8)"><ellipse cx="1" cy="1.5" rx="4.2" ry="4.7" fill="#143a17" opacity="0.5"/><path d="M0 -4.0 C2.7 -1.8 3.0 0.7 3.0 1.1 A3.0 2.5 0 0 1 -3.0 1.1 C-3.0 0.7 -2.7 -1.8 0 -4.0Z" fill="url(#dr)"/></g><g transform="translate(12.7 298.5) rotate(6)"><ellipse cx="1" cy="1.5" rx="8.8" ry="10.2" fill="#143a17" opacity="0.5"/><path d="M0 -10.3 C6.8 -4.5 7.6 1.8 7.6 2.7 A7.6 6.3 0 0 1 -7.6 2.7 C-7.6 1.8 -6.8 -4.5 0 -10.3Z" fill="url(#dr)"/><ellipse cx="-0.4" cy="-4.9" rx="3.8" ry="2.7" fill="#eef6ee" opacity="0.8"/></g><g transform="translate(149.5 276.4) rotate(4)"><ellipse cx="1" cy="1.5" rx="5.6" ry="6.5" fill="#143a17" opacity="0.5"/><path d="M0 -6.1 C3.9 -2.6 4.4 1.1 4.4 1.6 A4.4 3.7 0 0 1 -4.4 1.6 C-4.4 1.1 -3.9 -2.6 0 -6.1Z" fill="url(#dr)"/><ellipse cx="-0.2" cy="-2.9" rx="2.2" ry="1.6" fill="#eef6ee" opacity="0.8"/></g><g transform="translate(267.3 347.3) rotate(-6)"><ellipse cx="1" cy="1.5" rx="5.1" ry="5.7" fill="#143a17" opacity="0.5"/><path d="M0 -5.2 C3.5 -2.2 3.9 0.9 3.9 1.3 A3.9 3.1 0 0 1 -3.9 1.3 C-3.9 0.9 -3.5 -2.2 0 -5.2Z" fill="url(#dr)"/><ellipse cx="-0.2" cy="-2.5" rx="1.9" ry="1.3" fill="#eef6ee" opacity="0.8"/></g><g transform="translate(79.3 338.4) rotate(-23)"><ellipse cx="1" cy="1.5" rx="7.2" ry="9.7" fill="#143a17" opacity="0.5"/><path d="M0 -9.8 C5.4 -4.3 6.0 1.7 6.0 2.6 A6.0 6.0 0 0 1 -6.0 2.6 C-6.0 1.7 -5.4 -4.3 0 -9.8Z" fill="url(#dr)"/><ellipse cx="-0.3" cy="-4.7" rx="3.0" ry="2.6" fill="#eef6ee" opacity="0.8"/></g><g transform="translate(60.4 47.8) rotate(20)"><ellipse cx="1" cy="1.5" rx="4.2" ry="4.6" fill="#143a17" opacity="0.5"/><path d="M0 -3.9 C2.7 -1.7 3.0 0.7 3.0 1.0 A3.0 2.4 0 0 1 -3.0 1.0 C-3.0 0.7 -2.7 -1.7 0 -3.9Z" fill="url(#dr)"/></g><g transform="translate(356.8 392.8) rotate(-21)"><ellipse cx="1" cy="1.5" rx="6.3" ry="6.2" fill="#143a17" opacity="0.5"/><path d="M0 -5.8 C4.6 -2.5 5.1 1.0 5.1 1.5 A5.1 3.5 0 0 1 -5.1 1.5 C-5.1 1.0 -4.6 -2.5 0 -5.8Z" fill="url(#dr)"/><ellipse cx="-0.3" cy="-2.8" rx="2.5" ry="1.5" fill="#eef6ee" opacity="0.8"/></g><g transform="translate(185.0 321.4) rotate(6)"><ellipse cx="1" cy="1.5" rx="5.3" ry="6.6" fill="#143a17" opacity="0.5"/><path d="M0 -6.2 C3.7 -2.7 4.1 1.1 4.1 1.6 A4.1 3.8 0 0 1 -4.1 1.6 C-4.1 1.1 -3.7 -2.7 0 -6.2Z" fill="url(#dr)"/><ellipse cx="-0.2" cy="-2.9" rx="2.0" ry="1.6" fill="#eef6ee" opacity="0.8"/></g><g transform="translate(381.6 416.3) rotate(-20)"><ellipse cx="1" cy="1.5" rx="5.2" ry="7.1" fill="#143a17" opacity="0.5"/><path d="M0 -6.8 C3.6 -3.0 4.0 1.2 4.0 1.8 A4.0 4.2 0 0 1 -4.0 1.8 C-4.0 1.2 -3.6 -3.0 0 -6.8Z" fill="url(#dr)"/><ellipse cx="-0.2" cy="-3.3" rx="2.0" ry="1.8" fill="#eef6ee" opacity="0.8"/></g><g transform="translate(10.3 225.4) rotate(-6)"><ellipse cx="1" cy="1.5" rx="3.7" ry="4.1" fill="#143a17" opacity="0.5"/><path d="M0 -3.4 C2.2 -1.5 2.5 0.6 2.5 0.9 A2.5 2.1 0 0 1 -2.5 0.9 C-2.5 0.6 -2.2 -1.5 0 -3.4Z" fill="url(#dr)"/></g><g transform="translate(10.6 101.6) rotate(14)"><ellipse cx="1" cy="1.5" rx="4.4" ry="5.9" fill="#143a17" opacity="0.5"/><path d="M0 -5.4 C2.9 -2.3 3.2 0.9 3.2 1.4 A3.2 3.3 0 0 1 -3.2 1.4 C-3.2 0.9 -2.9 -2.3 0 -5.4Z" fill="url(#dr)"/><ellipse cx="-0.2" cy="-2.6" rx="1.6" ry="1.4" fill="#eef6ee" opacity="0.8"/></g><g transform="translate(109.4 156.3) rotate(13)"><ellipse cx="1" cy="1.5" rx="8.5" ry="11.7" fill="#143a17" opacity="0.5"/><path d="M0 -12.1 C6.5 -5.2 7.3 2.1 7.3 3.1 A7.3 7.3 0 0 1 -7.3 3.1 C-7.3 2.1 -6.5 -5.2 0 -12.1Z" fill="url(#dr)"/><ellipse cx="-0.4" cy="-5.8" rx="3.6" ry="3.1" fill="#eef6ee" opacity="0.8"/></g><g transform="translate(381.0 249.2) rotate(13)"><ellipse cx="1" cy="1.5" rx="3.7" ry="3.9" fill="#143a17" opacity="0.5"/><path d="M0 -3.1 C2.2 -1.4 2.5 0.5 2.5 0.8 A2.5 1.9 0 0 1 -2.5 0.8 C-2.5 0.5 -2.2 -1.4 0 -3.1Z" fill="url(#dr)"/></g><g transform="translate(121.6 236.6) rotate(10)"><ellipse cx="1" cy="1.5" rx="6.6" ry="9.6" fill="#143a17" opacity="0.5"/><path d="M0 -9.7 C4.9 -4.2 5.4 1.7 5.4 2.5 A5.4 5.9 0 0 1 -5.4 2.5 C-5.4 1.7 -4.9 -4.2 0 -9.7Z" fill="url(#dr)"/><ellipse cx="-0.3" cy="-4.6" rx="2.7" ry="2.5" fill="#eef6ee" opacity="0.8"/></g><g transform="translate(343.3 306.3) rotate(21)"><ellipse cx="1" cy="1.5" rx="7.2" ry="7.6" fill="#143a17" opacity="0.5"/><path d="M0 -7.4 C5.4 -3.2 6.0 1.3 6.0 1.9 A6.0 4.5 0 0 1 -6.0 1.9 C-6.0 1.3 -5.4 -3.2 0 -7.4Z" fill="url(#dr)"/><ellipse cx="-0.3" cy="-3.5" rx="3.0" ry="1.9" fill="#eef6ee" opacity="0.8"/></g><g transform="translate(257.2 154.9) rotate(4)"><ellipse cx="1" cy="1.5" rx="7.1" ry="9.1" fill="#143a17" opacity="0.5"/><path d="M0 -9.1 C5.3 -3.9 5.9 1.6 5.9 2.4 A5.9 5.5 0 0 1 -5.9 2.4 C-5.9 1.6 -5.3 -3.9 0 -9.1Z" fill="url(#dr)"/><ellipse cx="-0.3" cy="-4.3" rx="3.0" ry="2.4" fill="#eef6ee" opacity="0.8"/></g><g transform="translate(238.7 417.6) rotate(-24)"><ellipse cx="1" cy="1.5" rx="5.4" ry="5.4" fill="#143a17" opacity="0.5"/><path d="M0 -4.8 C3.7 -2.1 4.2 0.8 4.2 1.3 A4.2 2.9 0 0 1 -4.2 1.3 C-4.2 0.8 -3.7 -2.1 0 -4.8Z" fill="url(#dr)"/><ellipse cx="-0.2" cy="-2.3" rx="2.1" ry="1.3" fill="#eef6ee" opacity="0.8"/></g><g transform="translate(227.3 434.3) rotate(-24)"><ellipse cx="1" cy="1.5" rx="11.5" ry="16.9" fill="#143a17" opacity="0.5"/><path d="M0 -18.0 C9.3 -7.8 10.3 3.1 10.3 4.7 A10.3 11.0 0 0 1 -10.3 4.7 C-10.3 3.1 -9.3 -7.8 0 -18.0Z" fill="url(#dr)"/><ellipse cx="-0.5" cy="-8.6" rx="5.2" ry="4.7" fill="#eef6ee" opacity="0.8"/></g><g transform="translate(85.6 245.6) rotate(-9)"><ellipse cx="1" cy="1.5" rx="5.5" ry="5.8" fill="#143a17" opacity="0.5"/><path d="M0 -5.3 C3.9 -2.3 4.3 0.9 4.3 1.4 A4.3 3.2 0 0 1 -4.3 1.4 C-4.3 0.9 -3.9 -2.3 0 -5.3Z" fill="url(#dr)"/><ellipse cx="-0.2" cy="-2.5" rx="2.2" ry="1.4" fill="#eef6ee" opacity="0.8"/></g><g transform="translate(31.5 16.0) rotate(-16)"><ellipse cx="1" cy="1.5" rx="11.0" ry="16.2" fill="#143a17" opacity="0.5"/><path d="M0 -17.3 C8.8 -7.5 9.8 3.0 9.8 4.5 A9.8 10.5 0 0 1 -9.8 4.5 C-9.8 3.0 -8.8 -7.5 0 -17.3Z" fill="url(#dr)"/><ellipse cx="-0.5" cy="-8.3" rx="4.9" ry="4.5" fill="#eef6ee" opacity="0.8"/></g><g transform="translate(252.6 131.9) rotate(20)"><ellipse cx="1" cy="1.5" rx="4.5" ry="5.7" fill="#143a17" opacity="0.5"/><path d="M0 -5.1 C2.9 -2.2 3.3 0.9 3.3 1.3 A3.3 3.1 0 0 1 -3.3 1.3 C-3.3 0.9 -2.9 -2.2 0 -5.1Z" fill="url(#dr)"/><ellipse cx="-0.2" cy="-2.5" rx="1.6" ry="1.3" fill="#eef6ee" opacity="0.8"/></g><g transform="translate(262.8 77.9) rotate(17)"><ellipse cx="1" cy="1.5" rx="4.2" ry="4.8" fill="#143a17" opacity="0.5"/><path d="M0 -4.1 C2.7 -1.8 3.0 0.7 3.0 1.1 A3.0 2.5 0 0 1 -3.0 1.1 C-3.0 0.7 -2.7 -1.8 0 -4.1Z" fill="url(#dr)"/></g><g transform="translate(346.7 111.4) rotate(-3)"><ellipse cx="1" cy="1.5" rx="4.9" ry="7.0" fill="#143a17" opacity="0.5"/><path d="M0 -6.7 C3.3 -2.9 3.7 1.2 3.7 1.7 A3.7 4.1 0 0 1 -3.7 1.7 C-3.7 1.2 -3.3 -2.9 0 -6.7Z" fill="url(#dr)"/><ellipse cx="-0.2" cy="-3.2" rx="1.9" ry="1.7" fill="#eef6ee" opacity="0.8"/></g><g transform="translate(32.7 180.1) rotate(3)"><ellipse cx="1" cy="1.5" rx="3.9" ry="4.9" fill="#143a17" opacity="0.5"/><path d="M0 -4.2 C2.4 -1.8 2.7 0.7 2.7 1.1 A2.7 2.6 0 0 1 -2.7 1.1 C-2.7 0.7 -2.4 -1.8 0 -4.2Z" fill="url(#dr)"/></g><g transform="translate(262.1 47.5) rotate(-23)"><ellipse cx="1" cy="1.5" rx="3.7" ry="4.1" fill="#143a17" opacity="0.5"/><path d="M0 -3.4 C2.3 -1.5 2.5 0.6 2.5 0.9 A2.5 2.1 0 0 1 -2.5 0.9 C-2.5 0.6 -2.3 -1.5 0 -3.4Z" fill="url(#dr)"/></g><g transform="translate(312.9 424.1) rotate(-14)"><ellipse cx="1" cy="1.5" rx="4.6" ry="4.8" fill="#143a17" opacity="0.5"/><path d="M0 -4.1 C3.1 -1.8 3.4 0.7 3.4 1.1 A3.4 2.5 0 0 1 -3.4 1.1 C-3.4 0.7 -3.1 -1.8 0 -4.1Z" fill="url(#dr)"/><ellipse cx="-0.2" cy="-2.0" rx="1.7" ry="1.1" fill="#eef6ee" opacity="0.8"/></g><g transform="translate(152.1 9.4) rotate(5)"><ellipse cx="1" cy="1.5" rx="7.8" ry="11.6" fill="#143a17" opacity="0.5"/><path d="M0 -12.0 C6.0 -5.2 6.6 2.1 6.6 3.1 A6.6 7.3 0 0 1 -6.6 3.1 C-6.6 2.1 -6.0 -5.2 0 -12.0Z" fill="url(#dr)"/><ellipse cx="-0.3" cy="-5.7" rx="3.3" ry="3.1" fill="#eef6ee" opacity="0.8"/></g><g transform="translate(90.2 68.3) rotate(-8)"><ellipse cx="1" cy="1.5" rx="9.0" ry="10.2" fill="#143a17" opacity="0.5"/><path d="M0 -10.3 C7.0 -4.5 7.8 1.8 7.8 2.7 A7.8 6.3 0 0 1 -7.8 2.7 C-7.8 1.8 -7.0 -4.5 0 -10.3Z" fill="url(#dr)"/><ellipse cx="-0.4" cy="-4.9" rx="3.9" ry="2.7" fill="#eef6ee" opacity="0.8"/></g><g transform="translate(123.6 431.5) rotate(22)"><ellipse cx="1" cy="1.5" rx="7.6" ry="9.2" fill="#143a17" opacity="0.5"/><path d="M0 -9.2 C5.8 -4.0 6.4 1.6 6.4 2.4 A6.4 5.6 0 0 1 -6.4 2.4 C-6.4 1.6 -5.8 -4.0 0 -9.2Z" fill="url(#dr)"/><ellipse cx="-0.3" cy="-4.4" rx="3.2" ry="2.4" fill="#eef6ee" opacity="0.8"/></g><g transform="translate(37.5 367.1) rotate(6)"><ellipse cx="1" cy="1.5" rx="6.8" ry="9.5" fill="#143a17" opacity="0.5"/><path d="M0 -9.5 C5.0 -4.1 5.6 1.7 5.6 2.5 A5.6 5.8 0 0 1 -5.6 2.5 C-5.6 1.7 -5.0 -4.1 0 -9.5Z" fill="url(#dr)"/><ellipse cx="-0.3" cy="-4.5" rx="2.8" ry="2.5" fill="#eef6ee" opacity="0.8"/></g><g transform="translate(85.1 373.3) rotate(-21)"><ellipse cx="1" cy="1.5" rx="12.1" ry="14.2" fill="#143a17" opacity="0.5"/><path d="M0 -14.9 C9.8 -6.5 10.9 2.6 10.9 3.9 A10.9 9.1 0 0 1 -10.9 3.9 C-10.9 2.6 -9.8 -6.5 0 -14.9Z" fill="url(#dr)"/><ellipse cx="-0.5" cy="-7.1" rx="5.4" ry="3.9" fill="#eef6ee" opacity="0.8"/></g><g transform="translate(31.8 135.6) rotate(-7)"><ellipse cx="1" cy="1.5" rx="5.9" ry="6.2" fill="#143a17" opacity="0.5"/><path d="M0 -5.8 C4.2 -2.5 4.7 1.0 4.7 1.5 A4.7 3.5 0 0 1 -4.7 1.5 C-4.7 1.0 -4.2 -2.5 0 -5.8Z" fill="url(#dr)"/><ellipse cx="-0.2" cy="-2.8" rx="2.4" ry="1.5" fill="#eef6ee" opacity="0.8"/></g><g transform="translate(302.8 317.3) rotate(-21)"><ellipse cx="1" cy="1.5" rx="10.0" ry="11.7" fill="#143a17" opacity="0.5"/><path d="M0 -12.1 C7.9 -5.3 8.8 2.1 8.8 3.2 A8.8 7.4 0 0 1 -8.8 3.2 C-8.8 2.1 -7.9 -5.3 0 -12.1Z" fill="url(#dr)"/><ellipse cx="-0.4" cy="-5.8" rx="4.4" ry="3.2" fill="#eef6ee" opacity="0.8"/></g><g transform="translate(343.2 209.2) rotate(10)"><ellipse cx="1" cy="1.5" rx="6.3" ry="6.8" fill="#143a17" opacity="0.5"/><path d="M0 -6.5 C4.6 -2.8 5.1 1.1 5.1 1.7 A5.1 3.9 0 0 1 -5.1 1.7 C-5.1 1.1 -4.6 -2.8 0 -6.5Z" fill="url(#dr)"/><ellipse cx="-0.3" cy="-3.1" rx="2.5" ry="1.7" fill="#eef6ee" opacity="0.8"/></g><g transform="translate(252.9 318.3) rotate(18)"><ellipse cx="1" cy="1.5" rx="6.6" ry="8.3" fill="#143a17" opacity="0.5"/><path d="M0 -8.2 C4.9 -3.5 5.4 1.4 5.4 2.1 A5.4 5.0 0 0 1 -5.4 2.1 C-5.4 1.4 -4.9 -3.5 0 -8.2Z" fill="url(#dr)"/><ellipse cx="-0.3" cy="-3.9" rx="2.7" ry="2.1" fill="#eef6ee" opacity="0.8"/></g><g transform="translate(101.8 257.4) rotate(20)"><ellipse cx="1" cy="1.5" rx="5.8" ry="6.7" fill="#143a17" opacity="0.5"/><path d="M0 -6.3 C4.1 -2.7 4.6 1.1 4.6 1.6 A4.6 3.8 0 0 1 -4.6 1.6 C-4.6 1.1 -4.1 -2.7 0 -6.3Z" fill="url(#dr)"/><ellipse cx="-0.2" cy="-3.0" rx="2.3" ry="1.6" fill="#eef6ee" opacity="0.8"/></g><g transform="translate(315.3 224.6) rotate(19)"><ellipse cx="1" cy="1.5" rx="5.8" ry="7.2" fill="#143a17" opacity="0.5"/><path d="M0 -6.9 C4.1 -3.0 4.6 1.2 4.6 1.8 A4.6 4.2 0 0 1 -4.6 1.8 C-4.6 1.2 -4.1 -3.0 0 -6.9Z" fill="url(#dr)"/><ellipse cx="-0.2" cy="-3.3" rx="2.3" ry="1.8" fill="#eef6ee" opacity="0.8"/></g><g transform="translate(392.1 112.6) rotate(-18)"><ellipse cx="1" cy="1.5" rx="5.9" ry="8.6" fill="#143a17" opacity="0.5"/><path d="M0 -8.5 C4.2 -3.7 4.7 1.5 4.7 2.2 A4.7 5.2 0 0 1 -4.7 2.2 C-4.7 1.5 -4.2 -3.7 0 -8.5Z" fill="url(#dr)"/><ellipse cx="-0.2" cy="-4.1" rx="2.3" ry="2.2" fill="#eef6ee" opacity="0.8"/></g><g transform="translate(111.0 392.7) rotate(1)"><ellipse cx="1" cy="1.5" rx="11.3" ry="12.6" fill="#143a17" opacity="0.5"/><path d="M0 -13.1 C9.1 -5.7 10.1 2.3 10.1 3.4 A10.1 8.0 0 0 1 -10.1 3.4 C-10.1 2.3 -9.1 -5.7 0 -13.1Z" fill="url(#dr)"/><ellipse cx="-0.5" cy="-6.3" rx="5.0" ry="3.4" fill="#eef6ee" opacity="0.8"/></g><g transform="translate(148.7 204.2) rotate(-21)"><ellipse cx="1" cy="1.5" rx="6.9" ry="6.9" fill="#143a17" opacity="0.5"/><path d="M0 -6.5 C5.2 -2.8 5.7 1.1 5.7 1.7 A5.7 4.0 0 0 1 -5.7 1.7 C-5.7 1.1 -5.2 -2.8 0 -6.5Z" fill="url(#dr)"/><ellipse cx="-0.3" cy="-3.1" rx="2.9" ry="1.7" fill="#eef6ee" opacity="0.8"/></g><g transform="translate(233.2 103.4) rotate(-4)"><ellipse cx="1" cy="1.5" rx="9.7" ry="12.5" fill="#143a17" opacity="0.5"/><path d="M0 -13.0 C7.7 -5.7 8.5 2.3 8.5 3.4 A8.5 7.9 0 0 1 -8.5 3.4 C-8.5 2.3 -7.7 -5.7 0 -13.0Z" fill="url(#dr)"/><ellipse cx="-0.4" cy="-6.2" rx="4.3" ry="3.4" fill="#eef6ee" opacity="0.8"/></g><g transform="translate(287.3 6.6) rotate(5)"><ellipse cx="1" cy="1.5" rx="5.2" ry="6.4" fill="#143a17" opacity="0.5"/><path d="M0 -6.0 C3.6 -2.6 4.0 1.0 4.0 1.6 A4.0 3.7 0 0 1 -4.0 1.6 C-4.0 1.0 -3.6 -2.6 0 -6.0Z" fill="url(#dr)"/><ellipse cx="-0.2" cy="-2.9" rx="2.0" ry="1.6" fill="#eef6ee" opacity="0.8"/></g><g transform="translate(121.7 195.5) rotate(-14)"><ellipse cx="1" cy="1.5" rx="5.2" ry="5.8" fill="#143a17" opacity="0.5"/><path d="M0 -5.3 C3.6 -2.3 4.0 0.9 4.0 1.4 A4.0 3.2 0 0 1 -4.0 1.4 C-4.0 0.9 -3.6 -2.3 0 -5.3Z" fill="url(#dr)"/><ellipse cx="-0.2" cy="-2.5" rx="2.0" ry="1.4" fill="#eef6ee" opacity="0.8"/></g><g transform="translate(315.4 366.3) rotate(-23)"><ellipse cx="1" cy="1.5" rx="6.6" ry="7.7" fill="#143a17" opacity="0.5"/><path d="M0 -7.4 C4.8 -3.2 5.4 1.3 5.4 1.9 A5.4 4.5 0 0 1 -5.4 1.9 C-5.4 1.3 -4.8 -3.2 0 -7.4Z" fill="url(#dr)"/><ellipse cx="-0.3" cy="-3.6" rx="2.7" ry="1.9" fill="#eef6ee" opacity="0.8"/></g><g transform="translate(323.9 54.8) rotate(22)"><ellipse cx="1" cy="1.5" rx="4.4" ry="5.5" fill="#143a17" opacity="0.5"/><path d="M0 -5.0 C2.9 -2.2 3.2 0.9 3.2 1.3 A3.2 3.0 0 0 1 -3.2 1.3 C-3.2 0.9 -2.9 -2.2 0 -5.0Z" fill="url(#dr)"/><ellipse cx="-0.2" cy="-2.4" rx="1.6" ry="1.3" fill="#eef6ee" opacity="0.8"/></g><g transform="translate(286.1 55.2) rotate(4)"><ellipse cx="1" cy="1.5" rx="5.4" ry="5.5" fill="#143a17" opacity="0.5"/><path d="M0 -4.9 C3.8 -2.1 4.2 0.9 4.2 1.3 A4.2 3.0 0 0 1 -4.2 1.3 C-4.2 0.9 -3.8 -2.1 0 -4.9Z" fill="url(#dr)"/><ellipse cx="-0.2" cy="-2.4" rx="2.1" ry="1.3" fill="#eef6ee" opacity="0.8"/></g><g transform="translate(310.4 248.8) rotate(13)"><ellipse cx="1" cy="1.5" rx="4.3" ry="4.5" fill="#143a17" opacity="0.5"/><path d="M0 -3.8 C2.8 -1.7 3.1 0.7 3.1 1.0 A3.1 2.3 0 0 1 -3.1 1.0 C-3.1 0.7 -2.8 -1.7 0 -3.8Z" fill="url(#dr)"/></g><g transform="translate(119.8 101.3) rotate(20)"><ellipse cx="1" cy="1.5" rx="7.9" ry="11.1" fill="#143a17" opacity="0.5"/><path d="M0 -11.4 C6.0 -4.9 6.7 2.0 6.7 3.0 A6.7 6.9 0 0 1 -6.7 3.0 C-6.7 2.0 -6.0 -4.9 0 -11.4Z" fill="url(#dr)"/><ellipse cx="-0.3" cy="-5.4" rx="3.4" ry="3.0" fill="#eef6ee" opacity="0.8"/></g><g transform="translate(220.8 370.4) rotate(15)"><ellipse cx="1" cy="1.5" rx="3.4" ry="4.6" fill="#143a17" opacity="0.5"/><path d="M0 -3.9 C2.0 -1.7 2.2 0.7 2.2 1.0 A2.2 2.3 0 0 1 -2.2 1.0 C-2.2 0.7 -2.0 -1.7 0 -3.9Z" fill="url(#dr)"/></g><g transform="translate(311.4 403.2) rotate(-24)"><ellipse cx="1" cy="1.5" rx="8.8" ry="9.9" fill="#143a17" opacity="0.5"/><path d="M0 -10.0 C6.8 -4.4 7.6 1.7 7.6 2.6 A7.6 6.1 0 0 1 -7.6 2.6 C-7.6 1.7 -6.8 -4.4 0 -10.0Z" fill="url(#dr)"/><ellipse cx="-0.4" cy="-4.8" rx="3.8" ry="2.6" fill="#eef6ee" opacity="0.8"/></g><g transform="translate(325.7 425.0) rotate(11)"><ellipse cx="1" cy="1.5" rx="4.5" ry="4.7" fill="#143a17" opacity="0.5"/><path d="M0 -4.1 C3.0 -1.8 3.3 0.7 3.3 1.1 A3.3 2.5 0 0 1 -3.3 1.1 C-3.3 0.7 -3.0 -1.8 0 -4.1Z" fill="url(#dr)"/><ellipse cx="-0.2" cy="-1.9" rx="1.6" ry="1.1" fill="#eef6ee" opacity="0.8"/></g><g transform="translate(74.1 221.8) rotate(16)"><ellipse cx="1" cy="1.5" rx="7.9" ry="10.1" fill="#143a17" opacity="0.5"/><path d="M0 -10.2 C6.0 -4.4 6.7 1.8 6.7 2.7 A6.7 6.2 0 0 1 -6.7 2.7 C-6.7 1.8 -6.0 -4.4 0 -10.2Z" fill="url(#dr)"/><ellipse cx="-0.3" cy="-4.9" rx="3.3" ry="2.7" fill="#eef6ee" opacity="0.8"/></g><g transform="translate(94.5 132.1) rotate(-2)"><ellipse cx="1" cy="1.5" rx="8.6" ry="12.7" fill="#143a17" opacity="0.5"/><path d="M0 -13.2 C6.6 -5.8 7.4 2.3 7.4 3.5 A7.4 8.1 0 0 1 -7.4 3.5 C-7.4 2.3 -6.6 -5.8 0 -13.2Z" fill="url(#dr)"/><ellipse cx="-0.4" cy="-6.3" rx="3.7" ry="3.5" fill="#eef6ee" opacity="0.8"/></g><g transform="translate(129.9 68.4) rotate(-19)"><ellipse cx="1" cy="1.5" rx="3.7" ry="4.1" fill="#143a17" opacity="0.5"/><path d="M0 -3.4 C2.2 -1.5 2.5 0.6 2.5 0.9 A2.5 2.0 0 0 1 -2.5 0.9 C-2.5 0.6 -2.2 -1.5 0 -3.4Z" fill="url(#dr)"/></g><g transform="translate(31.8 314.1) rotate(-25)"><ellipse cx="1" cy="1.5" rx="6.8" ry="9.2" fill="#143a17" opacity="0.5"/><path d="M0 -9.2 C5.0 -4.0 5.6 1.6 5.6 2.4 A5.6 5.6 0 0 1 -5.6 2.4 C-5.6 1.6 -5.0 -4.0 0 -9.2Z" fill="url(#dr)"/><ellipse cx="-0.3" cy="-4.4" rx="2.8" ry="2.4" fill="#eef6ee" opacity="0.8"/></g><g transform="translate(108.6 76.5) rotate(-10)"><ellipse cx="1" cy="1.5" rx="5.0" ry="5.7" fill="#143a17" opacity="0.5"/><path d="M0 -5.2 C3.4 -2.3 3.8 0.9 3.8 1.4 A3.8 3.2 0 0 1 -3.8 1.4 C-3.8 0.9 -3.4 -2.3 0 -5.2Z" fill="url(#dr)"/><ellipse cx="-0.2" cy="-2.5" rx="1.9" ry="1.4" fill="#eef6ee" opacity="0.8"/></g><g transform="translate(393.0 278.3) rotate(-7)"><ellipse cx="1" cy="1.5" rx="6.7" ry="8.2" fill="#143a17" opacity="0.5"/><path d="M0 -8.1 C5.0 -3.5 5.5 1.4 5.5 2.1 A5.5 4.9 0 0 1 -5.5 2.1 C-5.5 1.4 -5.0 -3.5 0 -8.1Z" fill="url(#dr)"/><ellipse cx="-0.3" cy="-3.9" rx="2.8" ry="2.1" fill="#eef6ee" opacity="0.8"/></g><g transform="translate(98.5 198.5) rotate(-5)"><ellipse cx="1" cy="1.5" rx="4.2" ry="5.2" fill="#143a17" opacity="0.5"/><path d="M0 -4.6 C2.7 -2.0 3.0 0.8 3.0 1.2 A3.0 2.8 0 0 1 -3.0 1.2 C-3.0 0.8 -2.7 -2.0 0 -4.6Z" fill="url(#dr)"/></g><g transform="translate(387.2 167.4) rotate(-11)"><ellipse cx="1" cy="1.5" rx="4.8" ry="6.3" fill="#143a17" opacity="0.5"/><path d="M0 -5.9 C3.3 -2.6 3.6 1.0 3.6 1.5 A3.6 3.6 0 0 1 -3.6 1.5 C-3.6 1.0 -3.3 -2.6 0 -5.9Z" fill="url(#dr)"/><ellipse cx="-0.2" cy="-2.8" rx="1.8" ry="1.5" fill="#eef6ee" opacity="0.8"/></g><g transform="translate(124.0 287.8) rotate(24)"><ellipse cx="1" cy="1.5" rx="3.7" ry="4.4" fill="#143a17" opacity="0.5"/><path d="M0 -3.7 C2.3 -1.6 2.5 0.6 2.5 1.0 A2.5 2.3 0 0 1 -2.5 1.0 C-2.5 0.6 -2.3 -1.6 0 -3.7Z" fill="url(#dr)"/></g><g transform="translate(307.7 185.3) rotate(-24)"><ellipse cx="1" cy="1.5" rx="8.6" ry="11.7" fill="#143a17" opacity="0.5"/><path d="M0 -12.1 C6.6 -5.3 7.4 2.1 7.4 3.2 A7.4 7.4 0 0 1 -7.4 3.2 C-7.4 2.1 -6.6 -5.3 0 -12.1Z" fill="url(#dr)"/><ellipse cx="-0.4" cy="-5.8" rx="3.7" ry="3.2" fill="#eef6ee" opacity="0.8"/></g><g transform="translate(286.3 326.2) rotate(-11)"><ellipse cx="1" cy="1.5" rx="3.4" ry="4.4" fill="#143a17" opacity="0.5"/><path d="M0 -3.7 C1.9 -1.6 2.2 0.6 2.2 1.0 A2.2 2.3 0 0 1 -2.2 1.0 C-2.2 0.6 -1.9 -1.6 0 -3.7Z" fill="url(#dr)"/></g><g transform="translate(255.2 385.8) rotate(-1)"><ellipse cx="1" cy="1.5" rx="8.4" ry="9.6" fill="#143a17" opacity="0.5"/><path d="M0 -9.6 C6.4 -4.2 7.2 1.7 7.2 2.5 A7.2 5.9 0 0 1 -7.2 2.5 C-7.2 1.7 -6.4 -4.2 0 -9.6Z" fill="url(#dr)"/><ellipse cx="-0.4" cy="-4.6" rx="3.6" ry="2.5" fill="#eef6ee" opacity="0.8"/></g><g transform="translate(274.4 100.1) rotate(-21)"><ellipse cx="1" cy="1.5" rx="10.9" ry="17.4" fill="#143a17" opacity="0.5"/><path d="M0 -18.6 C8.7 -8.1 9.7 3.2 9.7 4.9 A9.7 11.3 0 0 1 -9.7 4.9 C-9.7 3.2 -8.7 -8.1 0 -18.6Z" fill="url(#dr)"/><ellipse cx="-0.5" cy="-8.9" rx="4.8" ry="4.9" fill="#eef6ee" opacity="0.8"/></g><g transform="translate(0.4 419.1) rotate(14)"><ellipse cx="1" cy="1.5" rx="3.5" ry="4.2" fill="#143a17" opacity="0.5"/><path d="M0 -3.5 C2.1 -1.5 2.3 0.6 2.3 0.9 A2.3 2.1 0 0 1 -2.3 0.9 C-2.3 0.6 -2.1 -1.5 0 -3.5Z" fill="url(#dr)"/></g><g transform="translate(142.7 354.5) rotate(-4)"><ellipse cx="1" cy="1.5" rx="11.1" ry="13.9" fill="#143a17" opacity="0.5"/><path d="M0 -14.6 C8.9 -6.3 9.9 2.5 9.9 3.8 A9.9 8.9 0 0 1 -9.9 3.8 C-9.9 2.5 -8.9 -6.3 0 -14.6Z" fill="url(#dr)"/><ellipse cx="-0.5" cy="-7.0" rx="4.9" ry="3.8" fill="#eef6ee" opacity="0.8"/></g><g transform="translate(48.8 218.2) rotate(6)"><ellipse cx="1" cy="1.5" rx="4.3" ry="4.6" fill="#143a17" opacity="0.5"/><path d="M0 -3.9 C2.8 -1.7 3.1 0.7 3.1 1.0 A3.1 2.4 0 0 1 -3.1 1.0 C-3.1 0.7 -2.8 -1.7 0 -3.9Z" fill="url(#dr)"/></g><g transform="translate(188.5 236.9) rotate(18)"><ellipse cx="1" cy="1.5" rx="8.0" ry="9.6" fill="#143a17" opacity="0.5"/><path d="M0 -9.7 C6.1 -4.2 6.8 1.7 6.8 2.5 A6.8 5.9 0 0 1 -6.8 2.5 C-6.8 1.7 -6.1 -4.2 0 -9.7Z" fill="url(#dr)"/><ellipse cx="-0.3" cy="-4.6" rx="3.4" ry="2.5" fill="#eef6ee" opacity="0.8"/></g><g transform="translate(94.0 403.8) rotate(-19)"><ellipse cx="1" cy="1.5" rx="5.3" ry="7.4" fill="#143a17" opacity="0.5"/><path d="M0 -7.1 C3.7 -3.1 4.1 1.2 4.1 1.9 A4.1 4.3 0 0 1 -4.1 1.9 C-4.1 1.2 -3.7 -3.1 0 -7.1Z" fill="url(#dr)"/><ellipse cx="-0.2" cy="-3.4" rx="2.0" ry="1.9" fill="#eef6ee" opacity="0.8"/></g><g transform="translate(269.7 182.7) rotate(-5)"><ellipse cx="1" cy="1.5" rx="6.0" ry="7.2" fill="#143a17" opacity="0.5"/><path d="M0 -6.9 C4.3 -3.0 4.8 1.2 4.8 1.8 A4.8 4.2 0 0 1 -4.8 1.8 C-4.8 1.2 -4.3 -3.0 0 -6.9Z" fill="url(#dr)"/><ellipse cx="-0.2" cy="-3.3" rx="2.4" ry="1.8" fill="#eef6ee" opacity="0.8"/></g><g transform="translate(312.2 140.6) rotate(21)"><ellipse cx="1" cy="1.5" rx="10.4" ry="12.2" fill="#143a17" opacity="0.5"/><path d="M0 -12.7 C8.3 -5.5 9.2 2.2 9.2 3.3 A9.2 7.7 0 0 1 -9.2 3.3 C-9.2 2.2 -8.3 -5.5 0 -12.7Z" fill="url(#dr)"/><ellipse cx="-0.5" cy="-6.1" rx="4.6" ry="3.3" fill="#eef6ee" opacity="0.8"/></g><g transform="translate(312.6 73.0) rotate(-9)"><ellipse cx="1" cy="1.5" rx="9.8" ry="13.1" fill="#143a17" opacity="0.5"/><path d="M0 -13.7 C7.8 -6.0 8.6 2.4 8.6 3.6 A8.6 8.3 0 0 1 -8.6 3.6 C-8.6 2.4 -7.8 -6.0 0 -13.7Z" fill="url(#dr)"/><ellipse cx="-0.4" cy="-6.6" rx="4.3" ry="3.6" fill="#eef6ee" opacity="0.8"/></g><g transform="translate(359.7 162.5) rotate(19)"><ellipse cx="1" cy="1.5" rx="3.7" ry="4.2" fill="#143a17" opacity="0.5"/><path d="M0 -3.5 C2.2 -1.5 2.5 0.6 2.5 0.9 A2.5 2.1 0 0 1 -2.5 0.9 C-2.5 0.6 -2.2 -1.5 0 -3.5Z" fill="url(#dr)"/></g><g transform="translate(344.2 236.6) rotate(-14)"><ellipse cx="1" cy="1.5" rx="5.9" ry="7.6" fill="#143a17" opacity="0.5"/><path d="M0 -7.3 C4.3 -3.2 4.7 1.3 4.7 1.9 A4.7 4.5 0 0 1 -4.7 1.9 C-4.7 1.3 -4.3 -3.2 0 -7.3Z" fill="url(#dr)"/><ellipse cx="-0.2" cy="-3.5" rx="2.4" ry="1.9" fill="#eef6ee" opacity="0.8"/></g><g transform="translate(3.7 199.4) rotate(25)"><ellipse cx="1" cy="1.5" rx="7.7" ry="8.2" fill="#143a17" opacity="0.5"/><path d="M0 -8.1 C5.9 -3.5 6.5 1.4 6.5 2.1 A6.5 4.9 0 0 1 -6.5 2.1 C-6.5 1.4 -5.9 -3.5 0 -8.1Z" fill="url(#dr)"/><ellipse cx="-0.3" cy="-3.9" rx="3.3" ry="2.1" fill="#eef6ee" opacity="0.8"/></g><g transform="translate(50.0 161.6) rotate(21)"><ellipse cx="1" cy="1.5" rx="6.6" ry="8.0" fill="#143a17" opacity="0.5"/><path d="M0 -7.8 C4.8 -3.4 5.4 1.4 5.4 2.0 A5.4 4.7 0 0 1 -5.4 2.0 C-5.4 1.4 -4.8 -3.4 0 -7.8Z" fill="url(#dr)"/><ellipse cx="-0.3" cy="-3.7" rx="2.7" ry="2.0" fill="#eef6ee" opacity="0.8"/></g><g transform="translate(309.9 209.5) rotate(-12)"><ellipse cx="1" cy="1.5" rx="6.7" ry="8.9" fill="#143a17" opacity="0.5"/><path d="M0 -8.9 C5.0 -3.9 5.5 1.5 5.5 2.3 A5.5 5.4 0 0 1 -5.5 2.3 C-5.5 1.5 -5.0 -3.9 0 -8.9Z" fill="url(#dr)"/><ellipse cx="-0.3" cy="-4.2" rx="2.8" ry="2.3" fill="#eef6ee" opacity="0.8"/></g><g transform="translate(294.2 240.2) rotate(10)"><ellipse cx="1" cy="1.5" rx="4.8" ry="4.9" fill="#143a17" opacity="0.5"/><path d="M0 -4.3 C3.3 -1.9 3.6 0.7 3.6 1.1 A3.6 2.6 0 0 1 -3.6 1.1 C-3.6 0.7 -3.3 -1.9 0 -4.3Z" fill="url(#dr)"/><ellipse cx="-0.2" cy="-2.0" rx="1.8" ry="1.1" fill="#eef6ee" opacity="0.8"/></g><g transform="translate(212.9 346.4) rotate(-20)"><ellipse cx="1" cy="1.5" rx="6.5" ry="8.2" fill="#143a17" opacity="0.5"/><path d="M0 -8.1 C4.8 -3.5 5.3 1.4 5.3 2.1 A5.3 4.9 0 0 1 -5.3 2.1 C-5.3 1.4 -4.8 -3.5 0 -8.1Z" fill="url(#dr)"/><ellipse cx="-0.3" cy="-3.9" rx="2.6" ry="2.1" fill="#eef6ee" opacity="0.8"/></g><g transform="translate(188.8 164.5) rotate(20)"><ellipse cx="1" cy="1.5" rx="3.7" ry="5.0" fill="#143a17" opacity="0.5"/><path d="M0 -4.3 C2.3 -1.9 2.5 0.8 2.5 1.1 A2.5 2.6 0 0 1 -2.5 1.1 C-2.5 0.8 -2.3 -1.9 0 -4.3Z" fill="url(#dr)"/></g><g transform="translate(281.7 365.5) rotate(-25)"><ellipse cx="1" cy="1.5" rx="3.6" ry="5.0" fill="#143a17" opacity="0.5"/><path d="M0 -4.3 C2.2 -1.9 2.4 0.8 2.4 1.1 A2.4 2.6 0 0 1 -2.4 1.1 C-2.4 0.8 -2.2 -1.9 0 -4.3Z" fill="url(#dr)"/></g><g transform="translate(254.1 255.7) rotate(-21)"><ellipse cx="1" cy="1.5" rx="13.6" ry="14.6" fill="#143a17" opacity="0.5"/><path d="M0 -15.4 C11.2 -6.7 12.4 2.7 12.4 4.0 A12.4 9.4 0 0 1 -12.4 4.0 C-12.4 2.7 -11.2 -6.7 0 -15.4Z" fill="url(#dr)"/><ellipse cx="-0.6" cy="-7.4" rx="6.2" ry="4.0" fill="#eef6ee" opacity="0.8"/></g><g transform="translate(153.0 177.6) rotate(7)"><ellipse cx="1" cy="1.5" rx="7.2" ry="9.6" fill="#143a17" opacity="0.5"/><path d="M0 -9.7 C5.4 -4.2 6.0 1.7 6.0 2.5 A6.0 5.9 0 0 1 -6.0 2.5 C-6.0 1.7 -5.4 -4.2 0 -9.7Z" fill="url(#dr)"/><ellipse cx="-0.3" cy="-4.6" rx="3.0" ry="2.5" fill="#eef6ee" opacity="0.8"/></g><g transform="translate(196.8 268.5) rotate(-10)"><ellipse cx="1" cy="1.5" rx="5.3" ry="7.4" fill="#143a17" opacity="0.5"/><path d="M0 -7.2 C3.7 -3.1 4.1 1.2 4.1 1.9 A4.1 4.4 0 0 1 -4.1 1.9 C-4.1 1.2 -3.7 -3.1 0 -7.2Z" fill="url(#dr)"/><ellipse cx="-0.2" cy="-3.4" rx="2.0" ry="1.9" fill="#eef6ee" opacity="0.8"/></g><g transform="translate(208.7 117.4) rotate(6)"><ellipse cx="1" cy="1.5" rx="7.3" ry="8.6" fill="#143a17" opacity="0.5"/><path d="M0 -8.5 C5.5 -3.7 6.1 1.5 6.1 2.2 A6.1 5.2 0 0 1 -6.1 2.2 C-6.1 1.5 -5.5 -3.7 0 -8.5Z" fill="url(#dr)"/><ellipse cx="-0.3" cy="-4.1" rx="3.0" ry="2.2" fill="#eef6ee" opacity="0.8"/></g><g transform="translate(203.0 191.7) rotate(1)"><ellipse cx="1" cy="1.5" rx="10.4" ry="12.1" fill="#143a17" opacity="0.5"/><path d="M0 -12.6 C8.3 -5.5 9.2 2.2 9.2 3.3 A9.2 7.7 0 0 1 -9.2 3.3 C-9.2 2.2 -8.3 -5.5 0 -12.6Z" fill="url(#dr)"/><ellipse cx="-0.5" cy="-6.0" rx="4.6" ry="3.3" fill="#eef6ee" opacity="0.8"/></g><g transform="translate(-3.1 400.8) rotate(3)"><ellipse cx="1" cy="1.5" rx="8.8" ry="11.0" fill="#143a17" opacity="0.5"/><path d="M0 -11.3 C6.8 -4.9 7.6 2.0 7.6 2.9 A7.6 6.9 0 0 1 -7.6 2.9 C-7.6 2.0 -6.8 -4.9 0 -11.3Z" fill="url(#dr)"/><ellipse cx="-0.4" cy="-5.4" rx="3.8" ry="2.9" fill="#eef6ee" opacity="0.8"/></g><g transform="translate(124.2 358.0) rotate(-16)"><ellipse cx="1" cy="1.5" rx="4.8" ry="5.3" fill="#143a17" opacity="0.5"/><path d="M0 -4.7 C3.3 -2.1 3.6 0.8 3.6 1.2 A3.6 2.9 0 0 1 -3.6 1.2 C-3.6 0.8 -3.3 -2.1 0 -4.7Z" fill="url(#dr)"/><ellipse cx="-0.2" cy="-2.3" rx="1.8" ry="1.2" fill="#eef6ee" opacity="0.8"/></g><g transform="translate(98.4 0.7) rotate(-18)"><ellipse cx="1" cy="1.5" rx="3.3" ry="4.2" fill="#143a17" opacity="0.5"/><path d="M0 -3.5 C1.9 -1.5 2.1 0.6 2.1 0.9 A2.1 2.1 0 0 1 -2.1 0.9 C-2.1 0.6 -1.9 -1.5 0 -3.5Z" fill="url(#dr)"/></g><g transform="translate(377.5 141.7) rotate(-19)"><ellipse cx="1" cy="1.5" rx="8.1" ry="10.3" fill="#143a17" opacity="0.5"/><path d="M0 -10.5 C6.2 -4.5 6.9 1.8 6.9 2.7 A6.9 6.4 0 0 1 -6.9 2.7 C-6.9 1.8 -6.2 -4.5 0 -10.5Z" fill="url(#dr)"/><ellipse cx="-0.3" cy="-5.0" rx="3.5" ry="2.7" fill="#eef6ee" opacity="0.8"/></g><g transform="translate(27.3 331.0) rotate(12)"><ellipse cx="1" cy="1.5" rx="7.0" ry="9.7" fill="#143a17" opacity="0.5"/><path d="M0 -9.8 C5.2 -4.2 5.8 1.7 5.8 2.5 A5.8 5.9 0 0 1 -5.8 2.5 C-5.8 1.7 -5.2 -4.2 0 -9.8Z" fill="url(#dr)"/><ellipse cx="-0.3" cy="-4.7" rx="2.9" ry="2.5" fill="#eef6ee" opacity="0.8"/></g><g transform="translate(277.6 138.9) rotate(-11)"><ellipse cx="1" cy="1.5" rx="9.5" ry="10.4" fill="#143a17" opacity="0.5"/><path d="M0 -10.6 C7.4 -4.6 8.3 1.8 8.3 2.8 A8.3 6.5 0 0 1 -8.3 2.8 C-8.3 1.8 -7.4 -4.6 0 -10.6Z" fill="url(#dr)"/><ellipse cx="-0.4" cy="-5.1" rx="4.1" ry="2.8" fill="#eef6ee" opacity="0.8"/></g><g transform="translate(38.6 196.8) rotate(-24)"><ellipse cx="1" cy="1.5" rx="8.8" ry="10.2" fill="#143a17" opacity="0.5"/><path d="M0 -10.3 C6.8 -4.5 7.6 1.8 7.6 2.7 A7.6 6.3 0 0 1 -7.6 2.7 C-7.6 1.8 -6.8 -4.5 0 -10.3Z" fill="url(#dr)"/><ellipse cx="-0.4" cy="-4.9" rx="3.8" ry="2.7" fill="#eef6ee" opacity="0.8"/></g><g transform="translate(235.6 380.2) rotate(24)"><ellipse cx="1" cy="1.5" rx="7.4" ry="7.8" fill="#143a17" opacity="0.5"/><path d="M0 -7.6 C5.5 -3.3 6.2 1.3 6.2 2.0 A6.2 4.6 0 0 1 -6.2 2.0 C-6.2 1.3 -5.5 -3.3 0 -7.6Z" fill="url(#dr)"/><ellipse cx="-0.3" cy="-3.6" rx="3.1" ry="2.0" fill="#eef6ee" opacity="0.8"/></g><g transform="translate(195.2 50.0) rotate(-14)"><ellipse cx="1" cy="1.5" rx="4.5" ry="5.4" fill="#143a17" opacity="0.5"/><path d="M0 -4.9 C2.9 -2.1 3.3 0.8 3.3 1.3 A3.3 3.0 0 0 1 -3.3 1.3 C-3.3 0.8 -2.9 -2.1 0 -4.9Z" fill="url(#dr)"/><ellipse cx="-0.2" cy="-2.3" rx="1.6" ry="1.3" fill="#eef6ee" opacity="0.8"/></g><g transform="translate(393.4 427.6) rotate(16)"><ellipse cx="1" cy="1.5" rx="3.7" ry="4.5" fill="#143a17" opacity="0.5"/><path d="M0 -3.8 C2.3 -1.7 2.5 0.7 2.5 1.0 A2.5 2.3 0 0 1 -2.5 1.0 C-2.5 0.7 -2.3 -1.7 0 -3.8Z" fill="url(#dr)"/></g><g transform="translate(374.8 90.8) rotate(14)"><ellipse cx="1" cy="1.5" rx="3.7" ry="3.7" fill="#143a17" opacity="0.5"/><path d="M0 -2.9 C2.3 -1.3 2.5 0.5 2.5 0.8 A2.5 1.8 0 0 1 -2.5 0.8 C-2.5 0.5 -2.3 -1.3 0 -2.9Z" fill="url(#dr)"/></g><g transform="translate(43.6 269.6) rotate(-8)"><ellipse cx="1" cy="1.5" rx="6.7" ry="7.4" fill="#143a17" opacity="0.5"/><path d="M0 -7.2 C5.0 -3.1 5.5 1.2 5.5 1.9 A5.5 4.4 0 0 1 -5.5 1.9 C-5.5 1.2 -5.0 -3.1 0 -7.2Z" fill="url(#dr)"/><ellipse cx="-0.3" cy="-3.4" rx="2.8" ry="1.9" fill="#eef6ee" opacity="0.8"/></g><g transform="translate(143.2 81.7) rotate(4)"><ellipse cx="1" cy="1.5" rx="3.3" ry="4.4" fill="#143a17" opacity="0.5"/><path d="M0 -3.7 C1.9 -1.6 2.1 0.6 2.1 1.0 A2.1 2.2 0 0 1 -2.1 1.0 C-2.1 0.6 -1.9 -1.6 0 -3.7Z" fill="url(#dr)"/></g><g transform="translate(240.8 297.3) rotate(-12)"><ellipse cx="1" cy="1.5" rx="5.3" ry="6.4" fill="#143a17" opacity="0.5"/><path d="M0 -6.0 C3.7 -2.6 4.1 1.0 4.1 1.6 A4.1 3.7 0 0 1 -4.1 1.6 C-4.1 1.0 -3.7 -2.6 0 -6.0Z" fill="url(#dr)"/><ellipse cx="-0.2" cy="-2.9" rx="2.1" ry="1.6" fill="#eef6ee" opacity="0.8"/></g><g transform="translate(256.7 435.4) rotate(-15)"><ellipse cx="1" cy="1.5" rx="8.9" ry="12.6" fill="#143a17" opacity="0.5"/><path d="M0 -13.1 C6.9 -5.7 7.7 2.3 7.7 3.4 A7.7 8.0 0 0 1 -7.7 3.4 C-7.7 2.3 -6.9 -5.7 0 -13.1Z" fill="url(#dr)"/><ellipse cx="-0.4" cy="-6.3" rx="3.8" ry="3.4" fill="#eef6ee" opacity="0.8"/></g><g transform="translate(250.4 218.2) rotate(0)"><ellipse cx="1" cy="1.5" rx="4.3" ry="4.8" fill="#143a17" opacity="0.5"/><path d="M0 -4.2 C2.8 -1.8 3.1 0.7 3.1 1.1 A3.1 2.5 0 0 1 -3.1 1.1 C-3.1 0.7 -2.8 -1.8 0 -4.2Z" fill="url(#dr)"/></g><g transform="translate(212.1 160.4) rotate(9)"><ellipse cx="1" cy="1.5" rx="3.4" ry="4.3" fill="#143a17" opacity="0.5"/><path d="M0 -3.6 C2.0 -1.5 2.2 0.6 2.2 0.9 A2.2 2.2 0 0 1 -2.2 0.9 C-2.2 0.6 -2.0 -1.5 0 -3.6Z" fill="url(#dr)"/></g><g transform="translate(13.1 122.4) rotate(-21)"><ellipse cx="1" cy="1.5" rx="6.0" ry="7.2" fill="#143a17" opacity="0.5"/><path d="M0 -6.9 C4.3 -3.0 4.8 1.2 4.8 1.8 A4.8 4.2 0 0 1 -4.8 1.8 C-4.8 1.2 -4.3 -3.0 0 -6.9Z" fill="url(#dr)"/><ellipse cx="-0.2" cy="-3.3" rx="2.4" ry="1.8" fill="#eef6ee" opacity="0.8"/></g><g transform="translate(263.7 231.1) rotate(21)"><ellipse cx="1" cy="1.5" rx="8.1" ry="8.6" fill="#143a17" opacity="0.5"/><path d="M0 -8.5 C6.2 -3.7 6.9 1.5 6.9 2.2 A6.9 5.2 0 0 1 -6.9 2.2 C-6.9 1.5 -6.2 -3.7 0 -8.5Z" fill="url(#dr)"/><ellipse cx="-0.3" cy="-4.1" rx="3.4" ry="2.2" fill="#eef6ee" opacity="0.8"/></g><g transform="translate(105.3 15.7) rotate(13)"><ellipse cx="1" cy="1.5" rx="6.3" ry="7.0" fill="#143a17" opacity="0.5"/><path d="M0 -6.7 C4.6 -2.9 5.1 1.2 5.1 1.7 A5.1 4.1 0 0 1 -5.1 1.7 C-5.1 1.2 -4.6 -2.9 0 -6.7Z" fill="url(#dr)"/><ellipse cx="-0.3" cy="-3.2" rx="2.6" ry="1.7" fill="#eef6ee" opacity="0.8"/></g><g transform="translate(120.9 315.5) rotate(23)"><ellipse cx="1" cy="1.5" rx="4.8" ry="6.2" fill="#143a17" opacity="0.5"/><path d="M0 -5.8 C3.2 -2.5 3.6 1.0 3.6 1.5 A3.6 3.5 0 0 1 -3.6 1.5 C-3.6 1.0 -3.2 -2.5 0 -5.8Z" fill="url(#dr)"/><ellipse cx="-0.2" cy="-2.8" rx="1.8" ry="1.5" fill="#eef6ee" opacity="0.8"/></g><g transform="translate(43.0 119.8) rotate(18)"><ellipse cx="1" cy="1.5" rx="9.3" ry="13.7" fill="#143a17" opacity="0.5"/><path d="M0 -14.4 C7.3 -6.2 8.1 2.5 8.1 3.7 A8.1 8.7 0 0 1 -8.1 3.7 C-8.1 2.5 -7.3 -6.2 0 -14.4Z" fill="url(#dr)"/><ellipse cx="-0.4" cy="-6.9" rx="4.1" ry="3.7" fill="#eef6ee" opacity="0.8"/></g><g transform="translate(335.5 18.7) rotate(11)"><ellipse cx="1" cy="1.5" rx="4.3" ry="4.2" fill="#143a17" opacity="0.5"/><path d="M0 -3.5 C2.7 -1.5 3.1 0.6 3.1 0.9 A3.1 2.1 0 0 1 -3.1 0.9 C-3.1 0.6 -2.7 -1.5 0 -3.5Z" fill="url(#dr)"/></g><g transform="translate(149.9 151.1) rotate(8)"><ellipse cx="1" cy="1.5" rx="9.4" ry="13.5" fill="#143a17" opacity="0.5"/><path d="M0 -14.2 C7.4 -6.2 8.2 2.5 8.2 3.7 A8.2 8.6 0 0 1 -8.2 3.7 C-8.2 2.5 -7.4 -6.2 0 -14.2Z" fill="url(#dr)"/><ellipse cx="-0.4" cy="-6.8" rx="4.1" ry="3.7" fill="#eef6ee" opacity="0.8"/></g><g transform="translate(380.4 437.7) rotate(16)"><ellipse cx="1" cy="1.5" rx="3.9" ry="4.4" fill="#143a17" opacity="0.5"/><path d="M0 -3.7 C2.4 -1.6 2.7 0.6 2.7 1.0 A2.7 2.2 0 0 1 -2.7 1.0 C-2.7 0.6 -2.4 -1.6 0 -3.7Z" fill="url(#dr)"/></g><g transform="translate(116.3 24.1) rotate(-11)"><ellipse cx="1" cy="1.5" rx="3.4" ry="4.0" fill="#143a17" opacity="0.5"/><path d="M0 -3.2 C2.0 -1.4 2.2 0.6 2.2 0.8 A2.2 2.0 0 0 1 -2.2 0.8 C-2.2 0.6 -2.0 -1.4 0 -3.2Z" fill="url(#dr)"/></g><g transform="translate(186.1 341.1) rotate(11)"><ellipse cx="1" cy="1.5" rx="7.8" ry="7.9" fill="#143a17" opacity="0.5"/><path d="M0 -7.7 C5.9 -3.3 6.6 1.3 6.6 2.0 A6.6 4.7 0 0 1 -6.6 2.0 C-6.6 1.3 -5.9 -3.3 0 -7.7Z" fill="url(#dr)"/><ellipse cx="-0.3" cy="-3.7" rx="3.3" ry="2.0" fill="#eef6ee" opacity="0.8"/></g><g transform="translate(71.6 71.8) rotate(-9)"><ellipse cx="1" cy="1.5" rx="5.6" ry="6.3" fill="#143a17" opacity="0.5"/><path d="M0 -5.8 C4.0 -2.5 4.4 1.0 4.4 1.5 A4.4 3.6 0 0 1 -4.4 1.5 C-4.4 1.0 -4.0 -2.5 0 -5.8Z" fill="url(#dr)"/><ellipse cx="-0.2" cy="-2.8" rx="2.2" ry="1.5" fill="#eef6ee" opacity="0.8"/></g><g transform="translate(334.5 187.1) rotate(-5)"><ellipse cx="1" cy="1.5" rx="6.5" ry="8.8" fill="#143a17" opacity="0.5"/><path d="M0 -8.7 C4.8 -3.8 5.3 1.5 5.3 2.3 A5.3 5.3 0 0 1 -5.3 2.3 C-5.3 1.5 -4.8 -3.8 0 -8.7Z" fill="url(#dr)"/><ellipse cx="-0.3" cy="-4.2" rx="2.7" ry="2.3" fill="#eef6ee" opacity="0.8"/></g><g transform="translate(345.2 53.5) rotate(-8)"><ellipse cx="1" cy="1.5" rx="10.5" ry="10.3" fill="#143a17" opacity="0.5"/><path d="M0 -10.5 C8.3 -4.6 9.3 1.8 9.3 2.7 A9.3 6.4 0 0 1 -9.3 2.7 C-9.3 1.8 -8.3 -4.6 0 -10.5Z" fill="url(#dr)"/><ellipse cx="-0.5" cy="-5.0" rx="4.6" ry="2.7" fill="#eef6ee" opacity="0.8"/></g><g transform="translate(102.5 96.1) rotate(1)"><ellipse cx="1" cy="1.5" rx="3.7" ry="4.4" fill="#143a17" opacity="0.5"/><path d="M0 -3.7 C2.3 -1.6 2.5 0.6 2.5 1.0 A2.5 2.2 0 0 1 -2.5 1.0 C-2.5 0.6 -2.3 -1.6 0 -3.7Z" fill="url(#dr)"/></g><g transform="translate(294.7 120.2) rotate(-10)"><ellipse cx="1" cy="1.5" rx="5.7" ry="6.7" fill="#143a17" opacity="0.5"/><path d="M0 -6.4 C4.0 -2.8 4.5 1.1 4.5 1.7 A4.5 3.9 0 0 1 -4.5 1.7 C-4.5 1.1 -4.0 -2.8 0 -6.4Z" fill="url(#dr)"/><ellipse cx="-0.2" cy="-3.0" rx="2.2" ry="1.7" fill="#eef6ee" opacity="0.8"/></g><g transform="translate(100.3 336.0) rotate(19)"><ellipse cx="1" cy="1.5" rx="8.2" ry="9.4" fill="#143a17" opacity="0.5"/><path d="M0 -9.5 C6.3 -4.1 7.0 1.6 7.0 2.5 A7.0 5.8 0 0 1 -7.0 2.5 C-7.0 1.6 -6.3 -4.1 0 -9.5Z" fill="url(#dr)"/><ellipse cx="-0.3" cy="-4.5" rx="3.5" ry="2.5" fill="#eef6ee" opacity="0.8"/></g><g transform="translate(281.3 162.8) rotate(1)"><ellipse cx="1" cy="1.5" rx="5.8" ry="5.9" fill="#143a17" opacity="0.5"/><path d="M0 -5.4 C4.2 -2.3 4.6 0.9 4.6 1.4 A4.6 3.3 0 0 1 -4.6 1.4 C-4.6 0.9 -4.2 -2.3 0 -5.4Z" fill="url(#dr)"/><ellipse cx="-0.2" cy="-2.6" rx="2.3" ry="1.4" fill="#eef6ee" opacity="0.8"/></g><g transform="translate(271.3 203.2) rotate(18)"><ellipse cx="1" cy="1.5" rx="4.2" ry="4.4" fill="#143a17" opacity="0.5"/><path d="M0 -3.7 C2.7 -1.6 3.0 0.6 3.0 1.0 A3.0 2.3 0 0 1 -3.0 1.0 C-3.0 0.6 -2.7 -1.6 0 -3.7Z" fill="url(#dr)"/></g><g transform="translate(213.1 65.8) rotate(-17)"><ellipse cx="1" cy="1.5" rx="3.6" ry="4.5" fill="#143a17" opacity="0.5"/><path d="M0 -3.8 C2.1 -1.7 2.4 0.7 2.4 1.0 A2.4 2.3 0 0 1 -2.4 1.0 C-2.4 0.7 -2.1 -1.7 0 -3.8Z" fill="url(#dr)"/></g><g transform="translate(109.4 279.5) rotate(20)"><ellipse cx="1" cy="1.5" rx="6.8" ry="10.5" fill="#143a17" opacity="0.5"/><path d="M0 -10.6 C5.1 -4.6 5.6 1.9 5.6 2.8 A5.6 6.5 0 0 1 -5.6 2.8 C-5.6 1.9 -5.1 -4.6 0 -10.6Z" fill="url(#dr)"/><ellipse cx="-0.3" cy="-5.1" rx="2.8" ry="2.8" fill="#eef6ee" opacity="0.8"/></g><g transform="translate(51.3 298.5) rotate(-1)"><ellipse cx="1" cy="1.5" rx="9.8" ry="14.1" fill="#143a17" opacity="0.5"/><path d="M0 -14.8 C7.8 -6.4 8.6 2.6 8.6 3.9 A8.6 9.0 0 0 1 -8.6 3.9 C-8.6 2.6 -7.8 -6.4 0 -14.8Z" fill="url(#dr)"/><ellipse cx="-0.4" cy="-7.1" rx="4.3" ry="3.9" fill="#eef6ee" opacity="0.8"/></g><g transform="translate(333.8 385.4) rotate(20)"><ellipse cx="1" cy="1.5" rx="3.6" ry="3.8" fill="#143a17" opacity="0.5"/><path d="M0 -3.0 C2.2 -1.3 2.4 0.5 2.4 0.8 A2.4 1.8 0 0 1 -2.4 0.8 C-2.4 0.5 -2.2 -1.3 0 -3.0Z" fill="url(#dr)"/></g><g transform="translate(42.8 249.8) rotate(14)"><ellipse cx="1" cy="1.5" rx="11.3" ry="12.5" fill="#143a17" opacity="0.5"/><path d="M0 -13.0 C9.0 -5.6 10.1 2.3 10.1 3.4 A10.1 7.9 0 0 1 -10.1 3.4 C-10.1 2.3 -9.0 -5.6 0 -13.0Z" fill="url(#dr)"/><ellipse cx="-0.5" cy="-6.2" rx="5.0" ry="3.4" fill="#eef6ee" opacity="0.8"/></g><g transform="translate(42.3 68.0) rotate(-24)"><ellipse cx="1" cy="1.5" rx="6.1" ry="9.1" fill="#143a17" opacity="0.5"/><path d="M0 -9.1 C4.5 -4.0 4.9 1.6 4.9 2.4 A4.9 5.5 0 0 1 -4.9 2.4 C-4.9 1.6 -4.5 -4.0 0 -9.1Z" fill="url(#dr)"/><ellipse cx="-0.2" cy="-4.3" rx="2.5" ry="2.4" fill="#eef6ee" opacity="0.8"/></g><g transform="translate(344.4 291.3) rotate(25)"><ellipse cx="1" cy="1.5" rx="3.7" ry="4.2" fill="#143a17" opacity="0.5"/><path d="M0 -3.5 C2.2 -1.5 2.5 0.6 2.5 0.9 A2.5 2.1 0 0 1 -2.5 0.9 C-2.5 0.6 -2.2 -1.5 0 -3.5Z" fill="url(#dr)"/></g><g transform="translate(65.2 179.7) rotate(21)"><ellipse cx="1" cy="1.5" rx="6.0" ry="7.0" fill="#143a17" opacity="0.5"/><path d="M0 -6.7 C4.4 -2.9 4.8 1.2 4.8 1.8 A4.8 4.1 0 0 1 -4.8 1.8 C-4.8 1.2 -4.4 -2.9 0 -6.7Z" fill="url(#dr)"/><ellipse cx="-0.2" cy="-3.2" rx="2.4" ry="1.8" fill="#eef6ee" opacity="0.8"/></g><g transform="translate(373.2 347.1) rotate(16)"><ellipse cx="1" cy="1.5" rx="6.8" ry="8.1" fill="#143a17" opacity="0.5"/><path d="M0 -8.0 C5.0 -3.5 5.6 1.4 5.6 2.1 A5.6 4.9 0 0 1 -5.6 2.1 C-5.6 1.4 -5.0 -3.5 0 -8.0Z" fill="url(#dr)"/><ellipse cx="-0.3" cy="-3.8" rx="2.8" ry="2.1" fill="#eef6ee" opacity="0.8"/></g><g transform="translate(90.9 420.8) rotate(-6)"><ellipse cx="1" cy="1.5" rx="9.5" ry="10.8" fill="#143a17" opacity="0.5"/><path d="M0 -11.0 C7.5 -4.8 8.3 1.9 8.3 2.9 A8.3 6.7 0 0 1 -8.3 2.9 C-8.3 1.9 -7.5 -4.8 0 -11.0Z" fill="url(#dr)"/><ellipse cx="-0.4" cy="-5.3" rx="4.2" ry="2.9" fill="#eef6ee" opacity="0.8"/></g><g transform="translate(343.1 132.2) rotate(19)"><ellipse cx="1" cy="1.5" rx="11.0" ry="17.0" fill="#143a17" opacity="0.5"/><path d="M0 -18.2 C8.8 -7.9 9.8 3.2 9.8 4.7 A9.8 11.1 0 0 1 -9.8 4.7 C-9.8 3.2 -8.8 -7.9 0 -18.2Z" fill="url(#dr)"/><ellipse cx="-0.5" cy="-8.7" rx="4.9" ry="4.7" fill="#eef6ee" opacity="0.8"/></g><g transform="translate(249.0 82.3) rotate(17)"><ellipse cx="1" cy="1.5" rx="6.7" ry="7.6" fill="#143a17" opacity="0.5"/><path d="M0 -7.3 C4.9 -3.2 5.5 1.3 5.5 1.9 A5.5 4.5 0 0 1 -5.5 1.9 C-5.5 1.3 -4.9 -3.2 0 -7.3Z" fill="url(#dr)"/><ellipse cx="-0.3" cy="-3.5" rx="2.7" ry="1.9" fill="#eef6ee" opacity="0.8"/></g><g transform="translate(42.4 442.0) rotate(0)"><ellipse cx="1" cy="1.5" rx="3.7" ry="4.3" fill="#143a17" opacity="0.5"/><path d="M0 -3.6 C2.3 -1.6 2.5 0.6 2.5 0.9 A2.5 2.2 0 0 1 -2.5 0.9 C-2.5 0.6 -2.3 -1.6 0 -3.6Z" fill="url(#dr)"/></g><g transform="translate(218.3 403.1) rotate(-10)"><ellipse cx="1" cy="1.5" rx="4.3" ry="4.5" fill="#143a17" opacity="0.5"/><path d="M0 -3.8 C2.8 -1.7 3.1 0.7 3.1 1.0 A3.1 2.3 0 0 1 -3.1 1.0 C-3.1 0.7 -2.8 -1.7 0 -3.8Z" fill="url(#dr)"/></g><g transform="translate(309.0 335.6) rotate(-6)"><ellipse cx="1" cy="1.5" rx="4.0" ry="4.7" fill="#143a17" opacity="0.5"/><path d="M0 -4.0 C2.5 -1.8 2.8 0.7 2.8 1.1 A2.8 2.5 0 0 1 -2.8 1.1 C-2.8 0.7 -2.5 -1.8 0 -4.0Z" fill="url(#dr)"/></g><g transform="translate(179.1 -0.2) rotate(-9)"><ellipse cx="1" cy="1.5" rx="7.3" ry="7.7" fill="#143a17" opacity="0.5"/><path d="M0 -7.5 C5.4 -3.3 6.1 1.3 6.1 2.0 A6.1 4.6 0 0 1 -6.1 2.0 C-6.1 1.3 -5.4 -3.3 0 -7.5Z" fill="url(#dr)"/><ellipse cx="-0.3" cy="-3.6" rx="3.0" ry="2.0" fill="#eef6ee" opacity="0.8"/></g><g transform="translate(217.9 259.0) rotate(17)"><ellipse cx="1" cy="1.5" rx="9.3" ry="10.0" fill="#143a17" opacity="0.5"/><path d="M0 -10.1 C7.3 -4.4 8.1 1.8 8.1 2.6 A8.1 6.2 0 0 1 -8.1 2.6 C-8.1 1.8 -7.3 -4.4 0 -10.1Z" fill="url(#dr)"/><ellipse cx="-0.4" cy="-4.8" rx="4.1" ry="2.6" fill="#eef6ee" opacity="0.8"/></g><g transform="translate(233.8 228.9) rotate(17)"><ellipse cx="1" cy="1.5" rx="4.9" ry="6.9" fill="#143a17" opacity="0.5"/><path d="M0 -6.5 C3.3 -2.8 3.7 1.1 3.7 1.7 A3.7 4.0 0 0 1 -3.7 1.7 C-3.7 1.1 -3.3 -2.8 0 -6.5Z" fill="url(#dr)"/><ellipse cx="-0.2" cy="-3.1" rx="1.9" ry="1.7" fill="#eef6ee" opacity="0.8"/></g><g transform="translate(24.9 169.5) rotate(12)"><ellipse cx="1" cy="1.5" rx="5.7" ry="8.0" fill="#143a17" opacity="0.5"/><path d="M0 -7.8 C4.1 -3.4 4.5 1.4 4.5 2.0 A4.5 4.7 0 0 1 -4.5 2.0 C-4.5 1.4 -4.1 -3.4 0 -7.8Z" fill="url(#dr)"/><ellipse cx="-0.2" cy="-3.7" rx="2.3" ry="2.0" fill="#eef6ee" opacity="0.8"/></g><g transform="translate(147.0 189.5) rotate(7)"><ellipse cx="1" cy="1.5" rx="3.4" ry="4.1" fill="#143a17" opacity="0.5"/><path d="M0 -3.4 C1.9 -1.5 2.2 0.6 2.2 0.9 A2.2 2.0 0 0 1 -2.2 0.9 C-2.2 0.6 -1.9 -1.5 0 -3.4Z" fill="url(#dr)"/></g><g transform="translate(129.1 370.4) rotate(-7)"><ellipse cx="1" cy="1.5" rx="5.2" ry="6.2" fill="#143a17" opacity="0.5"/><path d="M0 -5.7 C3.6 -2.5 4.0 1.0 4.0 1.5 A4.0 3.5 0 0 1 -4.0 1.5 C-4.0 1.0 -3.6 -2.5 0 -5.7Z" fill="url(#dr)"/><ellipse cx="-0.2" cy="-2.7" rx="2.0" ry="1.5" fill="#eef6ee" opacity="0.8"/></g><g transform="translate(233.4 211.5) rotate(-6)"><ellipse cx="1" cy="1.5" rx="6.7" ry="7.5" fill="#143a17" opacity="0.5"/><path d="M0 -7.2 C5.0 -3.1 5.5 1.3 5.5 1.9 A5.5 4.4 0 0 1 -5.5 1.9 C-5.5 1.3 -5.0 -3.1 0 -7.2Z" fill="url(#dr)"/><ellipse cx="-0.3" cy="-3.5" rx="2.8" ry="1.9" fill="#eef6ee" opacity="0.8"/></g><g transform="translate(232.0 269.3) rotate(-6)"><ellipse cx="1" cy="1.5" rx="4.1" ry="4.7" fill="#143a17" opacity="0.5"/><path d="M0 -4.0 C2.6 -1.8 2.9 0.7 2.9 1.1 A2.9 2.5 0 0 1 -2.9 1.1 C-2.9 0.7 -2.6 -1.8 0 -4.0Z" fill="url(#dr)"/></g><g transform="translate(80.3 354.2) rotate(-7)"><ellipse cx="1" cy="1.5" rx="4.0" ry="5.9" fill="#143a17" opacity="0.5"/><path d="M0 -5.4 C2.5 -2.3 2.8 0.9 2.8 1.4 A2.8 3.3 0 0 1 -2.8 1.4 C-2.8 0.9 -2.5 -2.3 0 -5.4Z" fill="url(#dr)"/><ellipse cx="-0.1" cy="-2.6" rx="1.4" ry="1.4" fill="#eef6ee" opacity="0.8"/></g><g transform="translate(350.8 325.2) rotate(-1)"><ellipse cx="1" cy="1.5" rx="5.3" ry="7.0" fill="#143a17" opacity="0.5"/><path d="M0 -6.6 C3.7 -2.9 4.1 1.2 4.1 1.7 A4.1 4.0 0 0 1 -4.1 1.7 C-4.1 1.2 -3.7 -2.9 0 -6.6Z" fill="url(#dr)"/><ellipse cx="-0.2" cy="-3.2" rx="2.0" ry="1.7" fill="#eef6ee" opacity="0.8"/></g><g transform="translate(206.0 363.2) rotate(25)"><ellipse cx="1" cy="1.5" rx="7.8" ry="9.6" fill="#143a17" opacity="0.5"/><path d="M0 -9.6 C5.9 -4.2 6.6 1.7 6.6 2.5 A6.6 5.9 0 0 1 -6.6 2.5 C-6.6 1.7 -5.9 -4.2 0 -9.6Z" fill="url(#dr)"/><ellipse cx="-0.3" cy="-4.6" rx="3.3" ry="2.5" fill="#eef6ee" opacity="0.8"/></g><g transform="translate(27.8 346.1) rotate(8)"><ellipse cx="1" cy="1.5" rx="3.6" ry="4.5" fill="#143a17" opacity="0.5"/><path d="M0 -3.7 C2.2 -1.6 2.4 0.7 2.4 1.0 A2.4 2.3 0 0 1 -2.4 1.0 C-2.4 0.7 -2.2 -1.6 0 -3.7Z" fill="url(#dr)"/></g><g transform="translate(256.8 363.4) rotate(-16)"><ellipse cx="1" cy="1.5" rx="3.4" ry="3.7" fill="#143a17" opacity="0.5"/><path d="M0 -2.9 C1.9 -1.3 2.2 0.5 2.2 0.8 A2.2 1.8 0 0 1 -2.2 0.8 C-2.2 0.5 -1.9 -1.3 0 -2.9Z" fill="url(#dr)"/></g><g transform="translate(148.2 314.5) rotate(19)"><ellipse cx="1" cy="1.5" rx="3.8" ry="4.0" fill="#143a17" opacity="0.5"/><path d="M0 -3.2 C2.3 -1.4 2.6 0.6 2.6 0.8 A2.6 2.0 0 0 1 -2.6 0.8 C-2.6 0.6 -2.3 -1.4 0 -3.2Z" fill="url(#dr)"/></g><g transform="translate(314.3 28.4) rotate(1)"><ellipse cx="1" cy="1.5" rx="7.3" ry="8.0" fill="#143a17" opacity="0.5"/><path d="M0 -7.8 C5.5 -3.4 6.1 1.4 6.1 2.0 A6.1 4.7 0 0 1 -6.1 2.0 C-6.1 1.4 -5.5 -3.4 0 -7.8Z" fill="url(#dr)"/><ellipse cx="-0.3" cy="-3.7" rx="3.1" ry="2.0" fill="#eef6ee" opacity="0.8"/></g><g transform="translate(374.0 215.9) rotate(-2)"><ellipse cx="1" cy="1.5" rx="10.4" ry="12.5" fill="#143a17" opacity="0.5"/><path d="M0 -13.0 C8.3 -5.6 9.2 2.3 9.2 3.4 A9.2 7.9 0 0 1 -9.2 3.4 C-9.2 2.3 -8.3 -5.6 0 -13.0Z" fill="url(#dr)"/><ellipse cx="-0.5" cy="-6.2" rx="4.6" ry="3.4" fill="#eef6ee" opacity="0.8"/></g></g></symbol><symbol id="coral" viewBox="0 0 777 44" preserveAspectRatio="none"><rect width="777" height="44" fill="#3ccb22"/><ellipse cx="185" cy="24" rx="9" ry="6" fill="#1d6a18" opacity="0.55"/><ellipse cx="486" cy="3" rx="6" ry="7" fill="#1d6a18" opacity="0.55"/><ellipse cx="202" cy="10" rx="14" ry="6" fill="#1d6a18" opacity="0.55"/><ellipse cx="650" cy="21" rx="11" ry="5" fill="#1d6a18" opacity="0.55"/><ellipse cx="493" cy="38" rx="10" ry="7" fill="#1d6a18" opacity="0.55"/><ellipse cx="522" cy="3" rx="12" ry="6" fill="#1d6a18" opacity="0.55"/><ellipse cx="234" cy="1" rx="13" ry="6" fill="#1d6a18" opacity="0.55"/><ellipse cx="559" cy="39" rx="12" ry="8" fill="#1d6a18" opacity="0.55"/><ellipse cx="307" cy="35" rx="10" ry="8" fill="#1d6a18" opacity="0.55"/><ellipse cx="683" cy="4" rx="7" ry="5" fill="#1d6a18" opacity="0.55"/><ellipse cx="750" cy="19" rx="11" ry="5" fill="#1d6a18" opacity="0.55"/><ellipse cx="394" cy="17" rx="9" ry="6" fill="#1d6a18" opacity="0.55"/><ellipse cx="454" cy="40" rx="11" ry="8" fill="#1d6a18" opacity="0.55"/><ellipse cx="665" cy="44" rx="11" ry="5" fill="#1d6a18" opacity="0.55"/><ellipse cx="669" cy="42" rx="13" ry="6" fill="#1d6a18" opacity="0.55"/><ellipse cx="555" cy="9" rx="13" ry="6" fill="#1d6a18" opacity="0.55"/><ellipse cx="221" cy="3" rx="13" ry="8" fill="#1d6a18" opacity="0.55"/><ellipse cx="69" cy="35" rx="9" ry="5" fill="#1d6a18" opacity="0.55"/><ellipse cx="228" cy="34" rx="13" ry="4" fill="#1d6a18" opacity="0.55"/><ellipse cx="477" cy="2" rx="12" ry="5" fill="#1d6a18" opacity="0.55"/><ellipse cx="684" cy="43" rx="10" ry="8" fill="#1d6a18" opacity="0.55"/><ellipse cx="241" cy="3" rx="11" ry="4" fill="#1d6a18" opacity="0.55"/><ellipse cx="153" cy="18" rx="11" ry="5" fill="#1d6a18" opacity="0.55"/><ellipse cx="33" cy="38" rx="9" ry="8" fill="#1d6a18" opacity="0.55"/><ellipse cx="697" cy="17" rx="10" ry="6" fill="#1d6a18" opacity="0.55"/><ellipse cx="500" cy="26" rx="10" ry="6" fill="#1d6a18" opacity="0.55"/><ellipse cx="731" cy="22" rx="9" ry="7" fill="#1d6a18" opacity="0.55"/><ellipse cx="185" cy="13" rx="14" ry="6" fill="#1d6a18" opacity="0.55"/><ellipse cx="426" cy="1" rx="9" ry="6" fill="#1d6a18" opacity="0.55"/><ellipse cx="16" cy="27" rx="11" ry="4" fill="#1d6a18" opacity="0.55"/><path d="M-5 5 Q20 15 18 48" stroke="#d9d2dc" stroke-width="24" fill="none" opacity="0.6"/><path d="M45 48 C40 5 95 0 92 48" stroke="#d9d2dc" stroke-width="24" fill="none" opacity="0.6"/><path d="M118 -5 L122 48" stroke="#d9d2dc" stroke-width="24" fill="none" opacity="0.6"/><path d="M125 6 C160 0 180 10 176 48" stroke="#d9d2dc" stroke-width="24" fill="none" opacity="0.6"/><path d="M190 48 C200 30 220 10 240 -5" stroke="#d9d2dc" stroke-width="24" fill="none" opacity="0.6"/><path d="M262 -5 C265 30 300 35 335 48" stroke="#d9d2dc" stroke-width="24" fill="none" opacity="0.6"/><path d="M330 -5 C345 10 365 20 385 48" stroke="#d9d2dc" stroke-width="24" fill="none" opacity="0.6"/><path d="M390 -5 C415 10 420 25 415 48" stroke="#d9d2dc" stroke-width="24" fill="none" opacity="0.6"/><path d="M438 48 C440 15 480 10 505 48" stroke="#d9d2dc" stroke-width="24" fill="none" opacity="0.6"/><path d="M515 48 C525 25 535 10 545 -5" stroke="#d9d2dc" stroke-width="24" fill="none" opacity="0.6"/><path d="M548 48 C560 0 590 0 600 30 S620 20 630 -5" stroke="#d9d2dc" stroke-width="24" fill="none" opacity="0.6"/><path d="M625 48 C645 30 655 10 665 -5" stroke="#d9d2dc" stroke-width="24" fill="none" opacity="0.6"/><path d="M655 48 C680 30 700 10 710 -5" stroke="#d9d2dc" stroke-width="24" fill="none" opacity="0.6"/><path d="M700 -5 C715 20 720 30 725 48" stroke="#d9d2dc" stroke-width="24" fill="none" opacity="0.6"/><path d="M735 -5 C745 30 770 35 790 30" stroke="#d9d2dc" stroke-width="24" fill="none" opacity="0.6"/><path d="M280 48 C300 40 320 30 330 -5" stroke="#d9d2dc" stroke-width="24" fill="none" opacity="0.6"/><path d="M-5 5 Q20 15 18 48" stroke="#7c4868" stroke-width="22" fill="none"/><path d="M-5 5 Q20 15 18 48" stroke="#bf92ad" stroke-width="18" fill="none" stroke-dasharray="1.2 1.5" opacity="0.7"/><path d="M45 48 C40 5 95 0 92 48" stroke="#7c4868" stroke-width="22" fill="none"/><path d="M45 48 C40 5 95 0 92 48" stroke="#bf92ad" stroke-width="18" fill="none" stroke-dasharray="1.2 1.5" opacity="0.7"/><path d="M118 -5 L122 48" stroke="#7c4868" stroke-width="22" fill="none"/><path d="M118 -5 L122 48" stroke="#bf92ad" stroke-width="18" fill="none" stroke-dasharray="1.2 1.5" opacity="0.7"/><path d="M125 6 C160 0 180 10 176 48" stroke="#7c4868" stroke-width="22" fill="none"/><path d="M125 6 C160 0 180 10 176 48" stroke="#bf92ad" stroke-width="18" fill="none" stroke-dasharray="1.2 1.5" opacity="0.7"/><path d="M190 48 C200 30 220 10 240 -5" stroke="#7c4868" stroke-width="22" fill="none"/><path d="M190 48 C200 30 220 10 240 -5" stroke="#bf92ad" stroke-width="18" fill="none" stroke-dasharray="1.2 1.5" opacity="0.7"/><path d="M262 -5 C265 30 300 35 335 48" stroke="#7c4868" stroke-width="22" fill="none"/><path d="M262 -5 C265 30 300 35 335 48" stroke="#bf92ad" stroke-width="18" fill="none" stroke-dasharray="1.2 1.5" opacity="0.7"/><path d="M330 -5 C345 10 365 20 385 48" stroke="#7c4868" stroke-width="22" fill="none"/><path d="M330 -5 C345 10 365 20 385 48" stroke="#bf92ad" stroke-width="18" fill="none" stroke-dasharray="1.2 1.5" opacity="0.7"/><path d="M390 -5 C415 10 420 25 415 48" stroke="#7c4868" stroke-width="22" fill="none"/><path d="M390 -5 C415 10 420 25 415 48" stroke="#bf92ad" stroke-width="18" fill="none" stroke-dasharray="1.2 1.5" opacity="0.7"/><path d="M438 48 C440 15 480 10 505 48" stroke="#7c4868" stroke-width="22" fill="none"/><path d="M438 48 C440 15 480 10 505 48" stroke="#bf92ad" stroke-width="18" fill="none" stroke-dasharray="1.2 1.5" opacity="0.7"/><path d="M515 48 C525 25 535 10 545 -5" stroke="#7c4868" stroke-width="22" fill="none"/><path d="M515 48 C525 25 535 10 545 -5" stroke="#bf92ad" stroke-width="18" fill="none" stroke-dasharray="1.2 1.5" opacity="0.7"/><path d="M548 48 C560 0 590 0 600 30 S620 20 630 -5" stroke="#7c4868" stroke-width="22" fill="none"/><path d="M548 48 C560 0 590 0 600 30 S620 20 630 -5" stroke="#bf92ad" stroke-width="18" fill="none" stroke-dasharray="1.2 1.5" opacity="0.7"/><path d="M625 48 C645 30 655 10 665 -5" stroke="#7c4868" stroke-width="22" fill="none"/><path d="M625 48 C645 30 655 10 665 -5" stroke="#bf92ad" stroke-width="18" fill="none" stroke-dasharray="1.2 1.5" opacity="0.7"/><path d="M655 48 C680 30 700 10 710 -5" stroke="#7c4868" stroke-width="22" fill="none"/><path d="M655 48 C680 30 700 10 710 -5" stroke="#bf92ad" stroke-width="18" fill="none" stroke-dasharray="1.2 1.5" opacity="0.7"/><path d="M700 -5 C715 20 720 30 725 48" stroke="#7c4868" stroke-width="22" fill="none"/><path d="M700 -5 C715 20 720 30 725 48" stroke="#bf92ad" stroke-width="18" fill="none" stroke-dasharray="1.2 1.5" opacity="0.7"/><path d="M735 -5 C745 30 770 35 790 30" stroke="#7c4868" stroke-width="22" fill="none"/><path d="M735 -5 C745 30 770 35 790 30" stroke="#bf92ad" stroke-width="18" fill="none" stroke-dasharray="1.2 1.5" opacity="0.7"/><path d="M280 48 C300 40 320 30 330 -5" stroke="#7c4868" stroke-width="22" fill="none"/><path d="M280 48 C300 40 320 30 330 -5" stroke="#bf92ad" stroke-width="18" fill="none" stroke-dasharray="1.2 1.5" opacity="0.7"/></symbol><symbol id="feather" viewBox="0 0 777 44" preserveAspectRatio="none"><defs><linearGradient id="fs" gradientUnits="userSpaceOnUse" x1="0" y1="0" x2="777" y2="0"><stop offset="0" stop-color="#2ad3c6"/><stop offset="0.3" stop-color="#27c9c8"/><stop offset="0.42" stop-color="#1e86d8"/><stop offset="0.58" stop-color="#2a9fe0"/><stop offset="0.66" stop-color="#33c8b8"/><stop offset="0.76" stop-color="#1f6fd0"/><stop offset="0.92" stop-color="#2a6ed8"/><stop offset="1" stop-color="#48b870"/></linearGradient></defs><rect width="777" height="44" fill="#3a2424"/><path d="M-5 1.4 C250 -2.6 500 -14.6 790 -24.6" stroke="url(#fs)" stroke-width="2.7" fill="none" opacity="0.94"/><path d="M-5 7.3 C250 3.3 500 -8.7 790 -18.7" stroke="url(#fs)" stroke-width="2.7" fill="none" opacity="0.98"/><path d="M-5 11.9 C250 7.9 500 -4.1 790 -14.1" stroke="url(#fs)" stroke-width="2.5" fill="none" opacity="0.98"/><path d="M-5 17.4 C250 13.4 500 1.4 790 -8.6" stroke="url(#fs)" stroke-width="2.9" fill="none" opacity="0.73"/><path d="M-5 22.6 C250 18.6 500 6.6 790 -3.4" stroke="url(#fs)" stroke-width="2.2" fill="none" opacity="0.86"/><path d="M-5 27.9 C250 23.9 500 11.9 790 1.9" stroke="url(#fs)" stroke-width="2.0" fill="none" opacity="0.77"/><path d="M-5 32.8 C250 28.8 500 16.8 790 6.8" stroke="url(#fs)" stroke-width="2.9" fill="none" opacity="0.93"/><path d="M-5 37.6 C250 33.6 500 21.6 790 11.6" stroke="url(#fs)" stroke-width="2.8" fill="none" opacity="0.74"/><path d="M-5 43.0 C250 39.0 500 27.0 790 17.0" stroke="url(#fs)" stroke-width="2.1" fill="none" opacity="0.70"/><path d="M-5 48.8 C250 44.8 500 32.8 790 22.8" stroke="url(#fs)" stroke-width="2.2" fill="none" opacity="0.76"/><path d="M-5 54.8 C250 50.8 500 38.8 790 28.8" stroke="url(#fs)" stroke-width="2.9" fill="none" opacity="0.79"/><path d="M-5 60.7 C250 56.7 500 44.7 790 34.7" stroke="url(#fs)" stroke-width="2.5" fill="none" opacity="0.90"/><path d="M-5 65.5 C250 61.5 500 49.5 790 39.5" stroke="url(#fs)" stroke-width="2.9" fill="none" opacity="0.91"/><path d="M-5 71.5 C250 67.5 500 55.5 790 45.5" stroke="url(#fs)" stroke-width="2.9" fill="none" opacity="0.79"/><path d="M531 7l40 -14" stroke="#30c0b0" stroke-width="1.3" opacity="0.6"/><path d="M500 3l40 -14" stroke="#30c0b0" stroke-width="1.3" opacity="0.6"/><path d="M522 27l40 -14" stroke="#30c0b0" stroke-width="1.3" opacity="0.6"/><path d="M480 30l40 -14" stroke="#30c0b0" stroke-width="1.3" opacity="0.6"/><path d="M527 14l40 -14" stroke="#30c0b0" stroke-width="1.3" opacity="0.6"/><path d="M595 21l40 -14" stroke="#30c0b0" stroke-width="1.3" opacity="0.6"/><path d="M524 21l40 -14" stroke="#30c0b0" stroke-width="1.3" opacity="0.6"/><path d="M579 3l40 -14" stroke="#30c0b0" stroke-width="1.3" opacity="0.6"/><path d="M617 1l40 -14" stroke="#30c0b0" stroke-width="1.3" opacity="0.6"/><path d="M585 37l40 -14" stroke="#30c0b0" stroke-width="1.3" opacity="0.6"/><path d="M483 35l40 -14" stroke="#30c0b0" stroke-width="1.3" opacity="0.6"/><path d="M531 25l40 -14" stroke="#30c0b0" stroke-width="1.3" opacity="0.6"/><path d="M481 2l40 -14" stroke="#30c0b0" stroke-width="1.3" opacity="0.6"/><path d="M505 42l40 -14" stroke="#30c0b0" stroke-width="1.3" opacity="0.6"/><path d="M508 33l40 -14" stroke="#30c0b0" stroke-width="1.3" opacity="0.6"/><path d="M610 41l40 -14" stroke="#30c0b0" stroke-width="1.3" opacity="0.6"/><path d="M528 16l40 -14" stroke="#30c0b0" stroke-width="1.3" opacity="0.6"/><path d="M553 34l40 -14" stroke="#30c0b0" stroke-width="1.3" opacity="0.6"/><path d="M495 33l40 -14" stroke="#30c0b0" stroke-width="1.3" opacity="0.6"/><path d="M592 38l40 -14" stroke="#30c0b0" stroke-width="1.3" opacity="0.6"/><path d="M485 42l40 -14" stroke="#30c0b0" stroke-width="1.3" opacity="0.6"/><path d="M493 15l40 -14" stroke="#30c0b0" stroke-width="1.3" opacity="0.6"/><path d="M566 40l40 -14" stroke="#30c0b0" stroke-width="1.3" opacity="0.6"/><path d="M528 41l40 -14" stroke="#30c0b0" stroke-width="1.3" opacity="0.6"/><path d="M556 14l40 -14" stroke="#30c0b0" stroke-width="1.3" opacity="0.6"/></symbol><symbol id="jungle" viewBox="0 0 777 56" preserveAspectRatio="none"><rect width="777" height="56" fill="#0f3a1e"/><defs><linearGradient id="jg" x1="0" x2="1"><stop offset="0" stop-color="#2cae34"/><stop offset="0.12" stop-color="#2a9ab8"/><stop offset="0.26" stop-color="#1d6a8a"/><stop offset="0.34" stop-color="#0c2c1a"/><stop offset="0.55" stop-color="#0d3318"/><stop offset="0.58" stop-color="#2fb83a"/><stop offset="0.8" stop-color="#2cb040"/><stop offset="0.9" stop-color="#2aa8b0"/><stop offset="1" stop-color="#30b050"/></linearGradient></defs><rect width="777" height="56" fill="url(#jg)"/><ellipse cx="43" cy="31" rx="15" ry="9" fill="#1f8f30" opacity="0.75" transform="rotate(-31 43 31)"/><ellipse cx="76" cy="26" rx="21" ry="5" fill="#40d040" opacity="0.75" transform="rotate(-20 76 26)"/><ellipse cx="9" cy="48" rx="18" ry="8" fill="#40d040" opacity="0.75" transform="rotate(-10 9 48)"/><ellipse cx="43" cy="43" rx="11" ry="4" fill="#40d040" opacity="0.75" transform="rotate(3 43 43)"/><ellipse cx="6" cy="7" rx="18" ry="9" fill="#34c038" opacity="0.75" transform="rotate(-17 6 7)"/><ellipse cx="56" cy="8" rx="18" ry="7" fill="#34c038" opacity="0.75" transform="rotate(16 56 8)"/><ellipse cx="43" cy="13" rx="24" ry="9" fill="#40d040" opacity="0.75" transform="rotate(21 43 13)"/><ellipse cx="30" cy="10" rx="8" ry="7" fill="#1f8f30" opacity="0.75" transform="rotate(-39 30 10)"/><ellipse cx="10" cy="14" rx="23" ry="9" fill="#34c038" opacity="0.75" transform="rotate(-50 10 14)"/><ellipse cx="20" cy="54" rx="14" ry="8" fill="#1f8f30" opacity="0.75" transform="rotate(-8 20 54)"/><ellipse cx="54" cy="8" rx="12" ry="5" fill="#40d040" opacity="0.75" transform="rotate(-17 54 8)"/><ellipse cx="92" cy="44" rx="10" ry="8" fill="#34c038" opacity="0.75" transform="rotate(-49 92 44)"/><ellipse cx="44" cy="27" rx="17" ry="7" fill="#40d040" opacity="0.75" transform="rotate(-31 44 27)"/><ellipse cx="70" cy="4" rx="14" ry="6" fill="#40d040" opacity="0.75" transform="rotate(49 70 4)"/><ellipse cx="0" cy="51" rx="13" ry="9" fill="#40d040" opacity="0.75" transform="rotate(-29 0 51)"/><ellipse cx="136" cy="51" rx="9" ry="5" fill="#33b0d8" opacity="0.75" transform="rotate(-6 136 51)"/><ellipse cx="96" cy="35" rx="14" ry="4" fill="#2a9cc0" opacity="0.75" transform="rotate(-29 96 35)"/><ellipse cx="162" cy="-4" rx="14" ry="7" fill="#2a9cc0" opacity="0.75" transform="rotate(46 162 -4)"/><ellipse cx="146" cy="32" rx="11" ry="5" fill="#0f3a2a" opacity="0.75" transform="rotate(41 146 32)"/><ellipse cx="181" cy="11" rx="11" ry="8" fill="#1f7fa8" opacity="0.75" transform="rotate(5 181 11)"/><ellipse cx="167" cy="20" rx="18" ry="7" fill="#0f3a2a" opacity="0.75" transform="rotate(-40 167 20)"/><ellipse cx="99" cy="58" rx="20" ry="6" fill="#1f7fa8" opacity="0.75" transform="rotate(-8 99 58)"/><ellipse cx="190" cy="27" rx="23" ry="10" fill="#1f7fa8" opacity="0.75" transform="rotate(-37 190 27)"/><ellipse cx="145" cy="37" rx="12" ry="10" fill="#33b0d8" opacity="0.75" transform="rotate(-30 145 37)"/><ellipse cx="97" cy="12" rx="12" ry="4" fill="#0f3a2a" opacity="0.75" transform="rotate(-22 97 12)"/><ellipse cx="151" cy="58" rx="14" ry="9" fill="#33b0d8" opacity="0.75" transform="rotate(48 151 58)"/><ellipse cx="164" cy="40" rx="17" ry="10" fill="#1f7fa8" opacity="0.75" transform="rotate(-3 164 40)"/><ellipse cx="133" cy="15" rx="8" ry="8" fill="#33b0d8" opacity="0.75" transform="rotate(-2 133 15)"/><ellipse cx="172" cy="16" rx="9" ry="7" fill="#33b0d8" opacity="0.75" transform="rotate(24 172 16)"/><ellipse cx="190" cy="43" rx="21" ry="9" fill="#1f7fa8" opacity="0.75" transform="rotate(-15 190 43)"/><ellipse cx="167" cy="54" rx="23" ry="4" fill="#0f3a2a" opacity="0.75" transform="rotate(-0 167 54)"/><ellipse cx="97" cy="38" rx="17" ry="8" fill="#0f3a2a" opacity="0.75" transform="rotate(-42 97 38)"/><ellipse cx="283" cy="60" rx="20" ry="6" fill="#113a2a" opacity="0.75" transform="rotate(24 283 60)"/><ellipse cx="276" cy="24" rx="16" ry="7" fill="#1f5f90" opacity="0.75" transform="rotate(-19 276 24)"/><ellipse cx="211" cy="-4" rx="16" ry="8" fill="#1f5f90" opacity="0.75" transform="rotate(42 211 -4)"/><ellipse cx="233" cy="-4" rx="10" ry="8" fill="#0a2a1a" opacity="0.75" transform="rotate(2 233 -4)"/><ellipse cx="298" cy="17" rx="16" ry="5" fill="#113a2a" opacity="0.75" transform="rotate(-10 298 17)"/><ellipse cx="233" cy="36" rx="22" ry="6" fill="#2a80b0" opacity="0.75" transform="rotate(8 233 36)"/><ellipse cx="241" cy="4" rx="14" ry="9" fill="#113a2a" opacity="0.75" transform="rotate(-46 241 4)"/><ellipse cx="208" cy="59" rx="10" ry="7" fill="#2a80b0" opacity="0.75" transform="rotate(43 208 59)"/><ellipse cx="308" cy="20" rx="19" ry="8" fill="#113a2a" opacity="0.75" transform="rotate(34 308 20)"/><ellipse cx="281" cy="16" rx="12" ry="8" fill="#1f5f90" opacity="0.75" transform="rotate(18 281 16)"/><ellipse cx="237" cy="18" rx="18" ry="6" fill="#1f5f90" opacity="0.75" transform="rotate(-31 237 18)"/><ellipse cx="300" cy="12" rx="21" ry="10" fill="#2a80b0" opacity="0.75" transform="rotate(-38 300 12)"/><ellipse cx="214" cy="30" rx="23" ry="8" fill="#0a2a1a" opacity="0.75" transform="rotate(-30 214 30)"/><ellipse cx="262" cy="7" rx="20" ry="7" fill="#1f5f90" opacity="0.75" transform="rotate(-46 262 7)"/><ellipse cx="229" cy="46" rx="14" ry="9" fill="#2a80b0" opacity="0.75" transform="rotate(41 229 46)"/><ellipse cx="211" cy="56" rx="10" ry="7" fill="#113a2a" opacity="0.75" transform="rotate(13 211 56)"/><ellipse cx="318" cy="19" rx="15" ry="8" fill="#0a2a1a" opacity="0.75" transform="rotate(-30 318 19)"/><ellipse cx="294" cy="48" rx="11" ry="9" fill="#1f5f90" opacity="0.75" transform="rotate(48 294 48)"/><ellipse cx="327" cy="30" rx="12" ry="8" fill="#0a2a1a" opacity="0.75" transform="rotate(-48 327 30)"/><ellipse cx="266" cy="-3" rx="17" ry="9" fill="#0a2a1a" opacity="0.75" transform="rotate(-1 266 -3)"/><ellipse cx="204" cy="48" rx="15" ry="4" fill="#1f5f90" opacity="0.75" transform="rotate(3 204 48)"/><ellipse cx="406" cy="55" rx="10" ry="7" fill="#164a22" opacity="0.75" transform="rotate(22 406 55)"/><ellipse cx="422" cy="40" rx="17" ry="8" fill="#164a22" opacity="0.75" transform="rotate(26 422 40)"/><ellipse cx="378" cy="31" rx="17" ry="5" fill="#0e3a1a" opacity="0.75" transform="rotate(1 378 31)"/><ellipse cx="430" cy="12" rx="14" ry="9" fill="#0e3a1a" opacity="0.75" transform="rotate(40 430 12)"/><ellipse cx="353" cy="50" rx="16" ry="7" fill="#0e3a1a" opacity="0.75" transform="rotate(-30 353 50)"/><ellipse cx="389" cy="28" rx="14" ry="7" fill="#0e3a1a" opacity="0.75" transform="rotate(-46 389 28)"/><ellipse cx="431" cy="30" rx="10" ry="5" fill="#0e3a1a" opacity="0.75" transform="rotate(-33 431 30)"/><ellipse cx="432" cy="25" rx="12" ry="7" fill="#164a22" opacity="0.75" transform="rotate(-37 432 25)"/><ellipse cx="378" cy="48" rx="16" ry="5" fill="#164a22" opacity="0.75" transform="rotate(-8 378 48)"/><ellipse cx="333" cy="12" rx="20" ry="4" fill="#0e3a1a" opacity="0.75" transform="rotate(-31 333 12)"/><ellipse cx="355" cy="40" rx="20" ry="5" fill="#164a22" opacity="0.75" transform="rotate(-0 355 40)"/><ellipse cx="385" cy="33" rx="18" ry="8" fill="#0e3a1a" opacity="0.75" transform="rotate(20 385 33)"/><ellipse cx="427" cy="-3" rx="15" ry="7" fill="#0e3a1a" opacity="0.75" transform="rotate(-34 427 -3)"/><ellipse cx="352" cy="36" rx="11" ry="5" fill="#0e3a1a" opacity="0.75" transform="rotate(4 352 36)"/><ellipse cx="395" cy="4" rx="18" ry="6" fill="#0e3a1a" opacity="0.75" transform="rotate(-32 395 4)"/><ellipse cx="396" cy="53" rx="11" ry="10" fill="#0a2814" opacity="0.75" transform="rotate(39 396 53)"/><ellipse cx="345" cy="11" rx="9" ry="6" fill="#0e3a1a" opacity="0.75" transform="rotate(-7 345 11)"/><ellipse cx="434" cy="30" rx="10" ry="6" fill="#0e3a1a" opacity="0.75" transform="rotate(19 434 30)"/><ellipse cx="443" cy="8" rx="23" ry="10" fill="#40d8a0" opacity="0.75" transform="rotate(-38 443 8)"/><ellipse cx="531" cy="44" rx="21" ry="7" fill="#2eb848" opacity="0.75" transform="rotate(-48 531 44)"/><ellipse cx="577" cy="35" rx="10" ry="5" fill="#28a838" opacity="0.75" transform="rotate(-30 577 35)"/><ellipse cx="591" cy="59" rx="17" ry="5" fill="#36c83e" opacity="0.75" transform="rotate(18 591 59)"/><ellipse cx="454" cy="1" rx="15" ry="7" fill="#28a838" opacity="0.75" transform="rotate(-7 454 1)"/><ellipse cx="548" cy="-4" rx="22" ry="5" fill="#36c83e" opacity="0.75" transform="rotate(-5 548 -4)"/><ellipse cx="573" cy="21" rx="18" ry="5" fill="#2eb848" opacity="0.75" transform="rotate(29 573 21)"/><ellipse cx="498" cy="1" rx="17" ry="5" fill="#28a838" opacity="0.75" transform="rotate(8 498 1)"/><ellipse cx="501" cy="45" rx="23" ry="8" fill="#40d8a0" opacity="0.75" transform="rotate(28 501 45)"/><ellipse cx="587" cy="21" rx="22" ry="8" fill="#40d8a0" opacity="0.75" transform="rotate(27 587 21)"/><ellipse cx="578" cy="21" rx="9" ry="6" fill="#2eb848" opacity="0.75" transform="rotate(-3 578 21)"/><ellipse cx="442" cy="18" rx="12" ry="10" fill="#36c83e" opacity="0.75" transform="rotate(17 442 18)"/><ellipse cx="501" cy="38" rx="17" ry="6" fill="#2eb848" opacity="0.75" transform="rotate(50 501 38)"/><ellipse cx="556" cy="41" rx="24" ry="4" fill="#28a838" opacity="0.75" transform="rotate(12 556 41)"/><ellipse cx="573" cy="12" rx="16" ry="9" fill="#28a838" opacity="0.75" transform="rotate(15 573 12)"/><ellipse cx="442" cy="12" rx="22" ry="7" fill="#40d8a0" opacity="0.75" transform="rotate(1 442 12)"/><ellipse cx="614" cy="32" rx="18" ry="9" fill="#36c83e" opacity="0.75" transform="rotate(-42 614 32)"/><ellipse cx="548" cy="44" rx="14" ry="10" fill="#36c83e" opacity="0.75" transform="rotate(-11 548 44)"/><ellipse cx="615" cy="51" rx="15" ry="7" fill="#36c83e" opacity="0.75" transform="rotate(-22 615 51)"/><ellipse cx="512" cy="15" rx="16" ry="6" fill="#40d8a0" opacity="0.75" transform="rotate(43 512 15)"/><ellipse cx="559" cy="44" rx="8" ry="5" fill="#36c83e" opacity="0.75" transform="rotate(-46 559 44)"/><ellipse cx="468" cy="44" rx="9" ry="6" fill="#28a838" opacity="0.75" transform="rotate(-10 468 44)"/><ellipse cx="545" cy="42" rx="9" ry="9" fill="#40d8a0" opacity="0.75" transform="rotate(-7 545 42)"/><ellipse cx="526" cy="58" rx="9" ry="5" fill="#2eb848" opacity="0.75" transform="rotate(31 526 58)"/><ellipse cx="604" cy="4" rx="18" ry="5" fill="#2eb848" opacity="0.75" transform="rotate(12 604 4)"/><ellipse cx="522" cy="8" rx="14" ry="5" fill="#36c83e" opacity="0.75" transform="rotate(-14 522 8)"/><ellipse cx="465" cy="22" rx="18" ry="8" fill="#40d8a0" opacity="0.75" transform="rotate(-14 465 22)"/><ellipse cx="574" cy="48" rx="23" ry="8" fill="#2eb848" opacity="0.75" transform="rotate(-26 574 48)"/><ellipse cx="460" cy="53" rx="12" ry="8" fill="#40d8a0" opacity="0.75" transform="rotate(23 460 53)"/><ellipse cx="566" cy="7" rx="20" ry="5" fill="#40d8a0" opacity="0.75" transform="rotate(-25 566 7)"/><ellipse cx="774" cy="55" rx="18" ry="4" fill="#38c040" opacity="0.75" transform="rotate(-24 774 55)"/><ellipse cx="624" cy="-3" rx="17" ry="4" fill="#2aa8b8" opacity="0.75" transform="rotate(-41 624 -3)"/><ellipse cx="726" cy="31" rx="16" ry="6" fill="#40c850" opacity="0.75" transform="rotate(-16 726 31)"/><ellipse cx="698" cy="4" rx="21" ry="7" fill="#38c040" opacity="0.75" transform="rotate(32 698 4)"/><ellipse cx="752" cy="45" rx="15" ry="6" fill="#1f9070" opacity="0.75" transform="rotate(31 752 45)"/><ellipse cx="678" cy="37" rx="13" ry="9" fill="#40c850" opacity="0.75" transform="rotate(33 678 37)"/><ellipse cx="649" cy="37" rx="15" ry="6" fill="#38c040" opacity="0.75" transform="rotate(4 649 37)"/><ellipse cx="688" cy="32" rx="13" ry="9" fill="#1f9070" opacity="0.75" transform="rotate(-42 688 32)"/><ellipse cx="653" cy="38" rx="19" ry="7" fill="#38c040" opacity="0.75" transform="rotate(26 653 38)"/><ellipse cx="671" cy="52" rx="14" ry="8" fill="#2aa8b8" opacity="0.75" transform="rotate(-13 671 52)"/><ellipse cx="638" cy="41" rx="15" ry="9" fill="#40c850" opacity="0.75" transform="rotate(-20 638 41)"/><ellipse cx="670" cy="21" rx="9" ry="9" fill="#2aa8b8" opacity="0.75" transform="rotate(-48 670 21)"/><ellipse cx="726" cy="33" rx="20" ry="6" fill="#2aa8b8" opacity="0.75" transform="rotate(-11 726 33)"/><ellipse cx="644" cy="33" rx="11" ry="9" fill="#2aa8b8" opacity="0.75" transform="rotate(38 644 33)"/><ellipse cx="664" cy="-4" rx="17" ry="7" fill="#38c040" opacity="0.75" transform="rotate(47 664 -4)"/><ellipse cx="722" cy="47" rx="17" ry="6" fill="#38c040" opacity="0.75" transform="rotate(5 722 47)"/><ellipse cx="673" cy="13" rx="22" ry="5" fill="#38c040" opacity="0.75" transform="rotate(13 673 13)"/><ellipse cx="643" cy="43" rx="12" ry="5" fill="#1f9070" opacity="0.75" transform="rotate(27 643 43)"/><ellipse cx="702" cy="45" rx="14" ry="9" fill="#1f9070" opacity="0.75" transform="rotate(-17 702 45)"/><ellipse cx="641" cy="27" rx="19" ry="9" fill="#38c040" opacity="0.75" transform="rotate(-9 641 27)"/><ellipse cx="750" cy="38" rx="21" ry="9" fill="#38c040" opacity="0.75" transform="rotate(39 750 38)"/><ellipse cx="770" cy="37" rx="19" ry="9" fill="#40c850" opacity="0.75" transform="rotate(-8 770 37)"/><ellipse cx="686" cy="5" rx="24" ry="6" fill="#2aa8b8" opacity="0.75" transform="rotate(-33 686 5)"/><ellipse cx="652" cy="23" rx="12" ry="9" fill="#40c850" opacity="0.75" transform="rotate(-3 652 23)"/><ellipse cx="735" cy="15" rx="20" ry="5" fill="#2aa8b8" opacity="0.75" transform="rotate(-44 735 15)"/><ellipse cx="692" cy="33" rx="13" ry="5" fill="#38c040" opacity="0.75" transform="rotate(-14 692 33)"/></symbol></defs></svg><div class="a" style="left:101px;top:390px;width:340px;height:197px;border-radius:6px;background:#ebe9f0"></div><div class="a" style="left:101px;top:691px;width:340px;height:198px;border-radius:6px;background:#ebe9f0"></div><div class="a" style="left:101px;top:992px;width:340px;height:40px;border-radius:6px;background:#ebe9f0"></div><div class="a" style="left:106px;top:95px;width:330px;height:186px;overflow:hidden"><div class="a" style="left:0;top:0;width:777px;height:437px;transform:scale(0.42471);transform-origin:0 0"><div class="a" style="left:0;top:0;width:777px;height:437px;background:#1e4c3d;overflow:hidden"><div class="a nw" style="left:57px;top:140px;font:bold 27px/32px 'Liberation Sans';color:#fff;letter-spacing:-0.3px">product launch</div><div class="a nw" style="left:58px;top:229px;font:15px/15px 'Liberation Sans';color:#b9cbc2">&#8226;</div><div class="a nw" style="left:76px;top:230px;font:15px/14.5px 'Liberation Sans';color:#b9cbc2">Currently gearing up for a<br>ground-breaking launch</div><div class="a nw" style="left:58px;top:269px;font:15px/15px 'Liberation Sans';color:#b9cbc2">&#8226;</div><div class="a nw" style="left:76px;top:270px;font:15px/14.5px 'Liberation Sans';color:#b9cbc2">Our new offerings will captivate<br>the market</div><div class="a nw" style="left:58px;top:308px;font:15px/15px 'Liberation Sans';color:#b9cbc2">&#8226;</div><div class="a nw" style="left:76px;top:309px;font:15px/14.5px 'Liberation Sans';color:#b9cbc2">Our marketing campaign will<br>generate anticipation</div><div class="a" style="left:350px;top:208px;width:368px;height:2px;background:#6f9a7d"></div><svg style="left:712px;top:203px" width="12" height="12"><path d="M0 1L10 6L0 11Z" fill="#8fb39a"/></svg><div class="a" style="left:411px;top:147px;width:2px;height:62px;background:#6f9a7d"></div><div class="a" style="left:408px;top:205px;width:8px;height:8px;border-radius:50%;background:#7fa88b"></div><div class="a" style="left:569px;top:147px;width:2px;height:62px;background:#6f9a7d"></div><div class="a" style="left:566px;top:205px;width:8px;height:8px;border-radius:50%;background:#7fa88b"></div><div class="a" style="left:490px;top:209px;width:2px;height:58px;background:#6f9a7d"></div><div class="a" style="left:487px;top:205px;width:8px;height:8px;border-radius:50%;background:#7fa88b"></div><div class="a" style="left:653px;top:209px;width:2px;height:58px;background:#6f9a7d"></div><div class="a" style="left:650px;top:205px;width:8px;height:8px;border-radius:50%;background:#7fa88b"></div><div class="a" style="left:350px;top:89px;width:124px;height:58px;border-radius:8px;background:#e9e9e6;border:2px solid #b7c9b5;display:flex;align-items:center;justify-content:center;text-align:center;font:bold 14.5px/15px 'Liberation Sans';color:#000;letter-spacing:-0.6px;-webkit-text-stroke:1px #000">Market<br>research</div><div class="a" style="left:507px;top:89px;width:126px;height:58px;border-radius:8px;background:#e9e9e6;border:2px solid #b7c9b5;display:flex;align-items:center;justify-content:center;text-align:center;font:bold 14.5px/15px 'Liberation Sans';color:#000;letter-spacing:-0.6px;-webkit-text-stroke:1px #000">User<br>testing</div><div class="a" style="left:428px;top:267px;width:125px;height:60px;border-radius:8px;background:#e9e9e6;border:2px solid #b7c9b5;display:flex;align-items:center;justify-content:center;text-align:center;font:bold 14.5px/15px 'Liberation Sans';color:#000;letter-spacing:-0.6px;-webkit-text-stroke:1px #000">Product<br>development</div><div class="a" style="left:591px;top:267px;width:125px;height:53px;border-radius:8px;background:#e9e9e6;border:2px solid #b7c9b5;display:flex;align-items:center;justify-content:center;text-align:center;font:bold 14.5px/15px 'Liberation Sans';color:#000;letter-spacing:-0.6px;-webkit-text-stroke:1px #000">Product launch</div><div class="a nw" style="left:483px;top:180px;width:28px;text-align:center;font:bold 15px/18px 'Liberation Sans';color:#fff;-webkit-text-stroke:0.6px #fff">Q4</div><div class="a nw" style="left:641px;top:180px;width:28px;text-align:center;font:bold 15px/18px 'Liberation Sans';color:#fff;-webkit-text-stroke:0.6px #fff">Q2</div><div class="a nw" style="left:404px;top:219px;width:28px;text-align:center;font:bold 15px/18px 'Liberation Sans';color:#fff;-webkit-text-stroke:0.6px #fff">Q3</div><div class="a nw" style="left:561px;top:219px;width:28px;text-align:center;font:bold 15px/18px 'Liberation Sans';color:#fff;-webkit-text-stroke:0.6px #fff">Q1</div><svg style="left:0;top:382px" width="777" height="55"><use href="#jungle" width="777" height="55"/></svg></div></div></div><div class="a" style="left:106px;top:396px;width:330px;height:186px;overflow:hidden"><div class="a" style="left:0;top:0;width:777px;height:437px;transform:scale(0.42471);transform-origin:0 0"><div class="a" style="left:0;top:0;width:777px;height:437px;background:#1e4c3d;overflow:hidden"><svg style="left:0;top:0" width="390" height="437"><use href="#leaf" width="390" height="437"/></svg><div class="a nw" style="left:440px;top:143px;font:bold 27px/32px 'Liberation Sans';color:#fff;letter-spacing:-0.2px">marketing strategies</div><div class="a nw" style="left:440px;top:226.0px;font:15px/15.6px 'Liberation Sans';color:#cddbd3">&#8226;</div><div class="a nw" style="left:458px;top:227.0px;font:15px/15.6px 'Liberation Sans';color:#cddbd3">Implement personalized engagement<br>strategies</div><div class="a nw" style="left:440px;top:265.7px;font:15px/15.6px 'Liberation Sans';color:#cddbd3">&#8226;</div><div class="a nw" style="left:458px;top:266.7px;font:15px/15.6px 'Liberation Sans';color:#cddbd3">Tailor campaigns to resonate with<br>specific demographics, fostering a sense<br>of relevance and connection</div><div class="a nw" style="left:440px;top:320.9px;font:15px/15.6px 'Liberation Sans';color:#cddbd3">&#8226;</div><div class="a nw" style="left:458px;top:321.9px;font:15px/15.6px 'Liberation Sans';color:#cddbd3">Collaborate with influencers and<br>thought leaders to amplify our brand<br>message</div></div></div></div><div class="a" style="left:106px;top:697px;width:330px;height:186px;overflow:hidden"><div class="a" style="left:0;top:0;width:777px;height:437px;transform:scale(0.42471);transform-origin:0 0"><div class="a" style="left:0;top:0;width:777px;height:437px;background:#333f33;overflow:hidden"><svg style="left:0;top:0" width="777" height="42"><use href="#coral" width="777" height="42"/></svg><div class="a nw" style="left:58px;top:142px;font:bold 27px/32px 'Liberation Sans';color:#fff;letter-spacing:-0.1px">financial overview</div><div class="a nw" style="left:58px;top:228px;font:15px/15.9px 'Liberation Sans';color:#c8cfc6"><div style="margin-bottom:7px">Our financial overview reflects a robust and<br>resilient fiscal performance.</div><div style="margin-bottom:7px">Key indicators show consistent revenue<br>growth over the past quarter, attributed to<br>strategic cost management and successful<br>marketing.</div></div><div class="a nw" style="left:414px;top:228px;font:15px/15.9px 'Liberation Sans';color:#c8cfc6"><div style="margin-bottom:7px">Operating margins have improved, signaling<br>operational efficiency, while strengthening<br>our reserves.</div><div style="margin-bottom:7px">This underscores our commitment to financial<br>stability, positioning us for sustained growth.</div></div></div></div></div><div class="a" style="left:106px;top:998px;width:330px;height:186px;overflow:hidden"><div class="a" style="left:0;top:0;width:777px;height:437px;transform:scale(0.42471);transform-origin:0 0"><div class="a" style="left:0;top:0;width:777px;height:437px;background:#35529a;overflow:hidden"><svg style="left:0;top:0" width="777" height="42"><use href="#feather" width="777" height="42"/></svg></div></div></div><div class="a" style="left:105px;top:445px;width:332px;height:138px;border:1.5px solid #b29ef4"></div><div class="a" style="left:105px;top:696px;width:332px;height:188px;border:1.5px solid #b3a2f2"></div><div class="a" style="left:105px;top:997px;width:332px;height:40px;border:1.5px solid #b3a2f2"></div><div class="a" style="left:106px;top:396px;width:330px;height:49px;background:rgba(150,160,230,0.09)"></div><div class="a nw" style="left:251px;top:320px;width:40px;text-align:center;font:15px/15px 'Liberation Sans';color:#333">6</div><div class="a nw" style="left:251px;top:621px;width:40px;text-align:center;font:15px/15px 'Liberation Sans';color:#333">7</div><div class="a nw" style="left:251px;top:923px;width:40px;text-align:center;font:15px/15px 'Liberation Sans';color:#333">8</div>
<!--DOC--><div class="a" style="left:466px;top:113px;width:839px;height:898px;overflow:hidden"><div class="a" style="left:24px;top:-117.7px;width:777px;height:437px"><div class="a" style="left:0;top:0;width:777px;height:437px;background:#1e4c3d;overflow:hidden"><svg style="left:0;top:0" width="390" height="437"><use href="#leaf" width="390" height="437"/></svg><div class="a nw" style="left:440px;top:143px;font:bold 27px/32px 'Liberation Sans';color:#fff;letter-spacing:-0.2px">marketing strategies</div><div class="a nw" style="left:440px;top:226.0px;font:15px/15.6px 'Liberation Sans';color:#cddbd3">&#8226;</div><div class="a nw" style="left:458px;top:227.0px;font:15px/15.6px 'Liberation Sans';color:#cddbd3">Implement personalized engagement<br>strategies</div><div class="a nw" style="left:440px;top:265.7px;font:15px/15.6px 'Liberation Sans';color:#cddbd3">&#8226;</div><div class="a nw" style="left:458px;top:266.7px;font:15px/15.6px 'Liberation Sans';color:#cddbd3">Tailor campaigns to resonate with<br>specific demographics, fostering a sense<br>of relevance and connection</div><div class="a nw" style="left:440px;top:320.9px;font:15px/15.6px 'Liberation Sans';color:#cddbd3">&#8226;</div><div class="a nw" style="left:458px;top:321.9px;font:15px/15.6px 'Liberation Sans';color:#cddbd3">Collaborate with influencers and<br>thought leaders to amplify our brand<br>message</div></div></div><div class="a" style="left:24px;top:344px;width:777px;height:437px"><div class="a" style="left:0;top:0;width:777px;height:437px;background:#333f33;overflow:hidden"><svg style="left:0;top:0" width="777" height="42"><use href="#coral" width="777" height="42"/></svg><div class="a nw" style="left:58px;top:142px;font:bold 27px/32px 'Liberation Sans';color:#fff;letter-spacing:-0.1px">financial overview</div><div class="a nw" style="left:58px;top:228px;font:15px/15.9px 'Liberation Sans';color:transparent"><div style="margin-bottom:7px"><span style="background:#2a323d;padding:0 3px 1px 0">Our financial overview reflects a robust and</span><br><span style="background:#2a323d;padding:0 3px 1px 0">resilient fiscal performance.</span></div><div style="margin-bottom:7px"><span style="background:#2a323d;padding:0 3px 1px 0">Key indicators show consistent revenue</span><br><span style="background:#2a323d;padding:0 3px 1px 0">growth over the past quarter, attributed to</span><br><span style="background:#2a323d;padding:0 3px 1px 0">strategic cost management and successful</span><br><span style="background:#2a323d;padding:0 3px 1px 0">marketing.</span></div></div><div class="a nw" style="left:58px;top:228px;font:15px/15.9px 'Liberation Sans';color:#adb4e2"><div style="margin-bottom:7px">Our financial overview reflects a robust and<br>resilient fiscal performance.</div><div style="margin-bottom:7px">Key indicators show consistent revenue<br>growth over the past quarter, attributed to<br>strategic cost management and successful<br>marketing.</div></div><div class="a nw" style="left:414px;top:228px;font:15px/15.9px 'Liberation Sans';color:transparent"><div style="margin-bottom:7px"><span style="background:#2a323d;padding:0 3px 1px 0">Operating margins have improved, signaling</span><br><span style="background:#2a323d;padding:0 3px 1px 0">operational efficiency, while strengthening</span><br><span style="background:#2a323d;padding:0 3px 1px 0">our reserves.</span></div><div style="margin-bottom:7px"><span style="background:#2a323d;padding:0 3px 1px 0">This underscores our commitment to financial</span><br><span style="background:#2a323d;padding:0 3px 1px 0">stability, positioning us for sustained growth.</span></div></div><div class="a nw" style="left:414px;top:228px;font:15px/15.9px 'Liberation Sans';color:#adb4e2"><div style="margin-bottom:7px">Operating margins have improved, signaling<br>operational efficiency, while strengthening<br>our reserves.</div><div style="margin-bottom:7px">This underscores our commitment to financial<br>stability, positioning us for sustained growth.</div></div></div></div><div class="a" style="left:24px;top:807px;width:777px;height:437px"><div class="a" style="left:0;top:0;width:777px;height:437px;background:#35529a;overflow:hidden"><svg style="left:0;top:0" width="777" height="42"><use href="#feather" width="777" height="42"/></svg></div></div></div><!-- doc toolbar -->
<svg style="left:535px;top:74px" width="20" height="20" viewBox="0 0 20 20"><circle cx="9.8" cy="9.5" r="9" fill="none" stroke="#333" stroke-width="1.4"/><path d="M5.5 9.5H14" stroke="#333" stroke-width="1.4"/></svg>
<div class="a nw" style="left:595px;top:75px;font:15px/17px 'Liberation Sans';color:#333">49%</div>
<svg style="left:658px;top:79px" width="9" height="7"><path d="M0 0H8.5L4.25 6Z" fill="#666"/></svg>
<svg style="left:702px;top:74px" width="20" height="20" viewBox="0 0 20 20"><circle cx="9.8" cy="9.5" r="9" fill="none" stroke="#333" stroke-width="1.4"/><path d="M5.5 9.5H14M9.8 5.2V13.8" stroke="#333" stroke-width="1.4"/></svg>
<div class="a" style="left:749px;top:76px;width:1px;height:13px;background:#d6d6d6"></div>
<svg style="left:780px;top:77px" width="16" height="13" viewBox="0 0 16 13"><path d="M1 1.5H15M2.5 11L8 5.5L13.5 11" fill="none" stroke="#333" stroke-width="1.4" stroke-linecap="round" stroke-linejoin="round"/></svg>
<svg style="left:835px;top:76px" width="16" height="15" viewBox="0 0 16 15"><path d="M2 7L8 1.5L14 7M2 13.5L8 8L14 13.5" fill="none" stroke="#333" stroke-width="1.4" stroke-linecap="round" stroke-linejoin="round"/></svg>
<div class="a" style="left:881px;top:67px;width:99px;height:28px;border-radius:5px;background:#fff;border:1px solid #e2e2e2"></div>
<div class="a nw" style="left:906px;top:74px;font:16.5px/18px 'Liberation Sans';color:#333">8</div><div class="a nw" style="left:925px;top:74px;font:16.5px/18px 'Liberation Sans';color:#333">/</div><div class="a nw" style="left:942px;top:74px;font:16.5px/18px 'Liberation Sans';color:#333">13</div>
<svg style="left:1011px;top:76px" width="16" height="15" viewBox="0 0 16 15"><path d="M2 1.5L8 7L14 1.5M2 8L8 13.5L14 8" fill="none" stroke="#333" stroke-width="1.4" stroke-linecap="round" stroke-linejoin="round"/></svg>
<svg style="left:1066px;top:77px" width="16" height="13" viewBox="0 0 16 13"><path d="M2.5 1.5L8 7L13.5 1.5M1 11.5H15" fill="none" stroke="#333" stroke-width="1.4" stroke-linecap="round" stroke-linejoin="round"/></svg>
<div class="a" style="left:1112px;top:76px;width:1px;height:13px;background:#d6d6d6"></div>
<svg style="left:1139px;top:75px" width="22" height="17" viewBox="0 0 22 17"><path d="M7 13H4A3 3 0 0 1 1 10V4A3 3 0 0 1 4 1H18A3 3 0 0 1 21 4V10A3 3 0 0 1 18 13H15" fill="none" stroke="#333" stroke-width="1.5" stroke-linecap="round"/><path d="M7.5 16.5L11 11.5L14.5 16.5Z" fill="#333"/></svg>
<div class="a" style="left:1188px;top:76px;width:1px;height:13px;background:#d6d6d6"></div>
<svg style="left:1214px;top:71px" width="26" height="22" viewBox="0 0 26 22"><path d="M12 3H3.5A1.5 1.5 0 0 0 2 4.5V17.5A1.5 1.5 0 0 0 3.5 19H12M14 3H22.5A1.5 1.5 0 0 1 24 4.5V17.5A1.5 1.5 0 0 1 22.5 19H14" fill="none" stroke="#333" stroke-width="1.5"/><path d="M13 1V21.5" stroke="#333" stroke-width="1.5"/><path d="M5 7.5H10M5 11H10M5 14.5H10M16 7.5H21M16 11H21M16 14.5H21" stroke="#333" stroke-width="1.4"/></svg>
<!-- scrollbar -->
<div class="a" style="left:1295px;top:553px;width:8px;height:132px;border-radius:4px;background:#b2b2b2"></div>
<!-- undo pill -->
<div class="a" style="left:502px;top:941px;width:98px;height:45px;border-radius:6px;background:#f9f8f8;box-shadow:0 1px 3px rgba(0,0,0,0.12)"></div>
<svg style="left:536px;top:956px" width="17" height="16" viewBox="0 0 17 16"><path d="M4.5 1.5L1.5 4.5L4.5 7.5M1.8 4.5H10.5A4.8 4.8 0 0 1 10.5 14.2H5" fill="none" stroke="#444" stroke-width="1.4" stroke-linecap="round" stroke-linejoin="round"/></svg>
<div class="a nw" style="left:561px;top:957px;font:15px/16px 'Liberation Sans';color:#444">1</div>

<!--AI--><!-- AI header -->
<svg style="left:1320px;top:65px" width="30" height="30" viewBox="0 0 30 30"><g fill="none" stroke-width="2.7" stroke-linecap="round"><path d="M8.56 15A4.9 4.9 0 1 1 15 8.56" stroke="#a87cf5"/><path d="M15 8.56A4.9 4.9 0 1 1 21.44 15" stroke="#22b3de"/><path d="M21.44 15A4.9 4.9 0 1 1 15 21.44" stroke="#3cc98f"/><path d="M15 21.44A4.9 4.9 0 1 1 8.56 15" stroke="#f2c21c"/></g></svg>
<div class="a nw" style="left:1355px;top:72px;font:bold 14px/16px 'Liberation Sans';color:#222">UPDF AI</div>
<div class="a" style="left:1745px;top:65px;width:40px;height:29px;border-radius:6px;border:1.5px solid #b7a3f6;background:transparent"></div>
<svg style="left:1754px;top:74px" width="22" height="11" viewBox="0 0 22 11"><path d="M11 5.5C8.5 2 7 1 5 1A4.5 4.5 0 0 0 5 10C7 10 8.5 9 11 5.5C13.5 2 15 1 17 1A4.5 4.5 0 0 1 17 10C15 10 13.5 9 11 5.5Z" fill="none" stroke="#9b7df2" stroke-width="1.6"/></svg>
<svg style="left:1801px;top:69px" width="18" height="22" viewBox="0 0 18 22"><path d="M7 8V3A2 2 0 0 1 11 3V8M3.5 11.5V8.5H14.5V11.5M3 11.5H15V20.5H3Z M7 15V20.5M11 15V20.5" fill="none" stroke="#8a8a8a" stroke-width="1.5" stroke-linejoin="round"/></svg>
<div class="a" style="left:1319px;top:104px;width:504px;height:1px;background:#e0e0e2"></div>
<!-- tabs -->
<div class="a" style="left:1333px;top:117px;width:469px;height:34px;border-radius:6px;background:#dadada"></div>
<div class="a" style="left:1568px;top:119px;width:232px;height:30px;border-radius:5px;background:#fff"></div>
<div class="a nw" style="left:1424px;top:126px;font:15px/17px 'Liberation Sans';color:#333;letter-spacing:-0.3px">Ask PDF</div>
<div class="a nw" style="left:1668px;top:126px;font:15px/17px 'Liberation Sans';color:#333;letter-spacing:-0.2px">Chat</div>
<!-- chat content clip -->
<div class="a" style="left:1305px;top:161px;width:508px;height:690px;overflow:hidden">
 <div class="a" style="left:18px;top:-40px;width:490px;height:122px;border-radius:8px;background:#fff"></div>
 <div class="a nw" style="left:32px;top:-17px;font:16px/21.1px 'Liberation Sans';color:#9a9a9a;letter-spacing:0.05px">proper support, please upload a document through [Ask PDF] mode, simply</div>
 <div class="a nw" style="left:32px;top:7px;font:16px/21.1px 'Liberation Sans';color:#333;letter-spacing:0.05px">Please note that in [chat] mode, I can't directly access PDF files.<br>If you need to chat with the document, please switch to [Ask<br>PDF] mode.</div>
</div>
<!-- purple bubble -->
<div class="a" style="left:1323px;top:254px;width:490px;height:237px;border-radius:9px;background:linear-gradient(100deg,#a876f8 0%,#9d80f8 40%,#8891f8 100%)"></div>
<div class="a nw" style="left:1337px;top:269px;font:16px/21.3px 'Liberation Sans';color:#fff;letter-spacing:0.1px">Translate the below text in German: Our financial overview<br>reflects a robust and resilient fiscal performance. Key<br>indicators show consistent revenue growth over the past<br>quarter, attributed to strategic cost management and<br>successful marketing. Operating margins have improved,<br>signaling operational efficiency, while strengthening our<br>reserves. This underscores our commitment to financial<br>stability, positioning us for sustained growth.</div>
<svg style="left:1780px;top:455px" width="20" height="21" viewBox="0 0 20 21"><path d="M3 15L4 11L13.5 1.5A2 2 0 0 1 16.5 4.5L7 14Z M11.5 3.5L14.5 6.5" fill="none" stroke="#fff" stroke-width="1.4" stroke-linejoin="round"/><path d="M1.5 19.5H18" stroke="#fff" stroke-width="1.4"/></svg>
<!-- UPDF AI label -->
<div class="a nw" style="left:1322px;top:510px;font:12px/14px 'Liberation Sans';color:#8a8a8a">UPDF AI</div>
<svg style="left:1786px;top:506px" width="19" height="19" viewBox="0 0 19 19"><path d="M8 2.5H3A1.5 1.5 0 0 0 1.5 4V16A1.5 1.5 0 0 0 3 17.5H15A1.5 1.5 0 0 0 16.5 16V11M10 9L17 2M11.5 1.5H17.5V7.5" fill="none" stroke="#333" stroke-width="1.5" stroke-linecap="round" stroke-linejoin="round"/></svg>
<!-- response card -->
<div class="a" style="left:1323px;top:536px;width:490px;height:304px;border-radius:9px;background:#fff"></div>
<div class="a nw" style="left:1337px;top:552px;font:16px/21.45px 'Liberation Sans';color:#333;letter-spacing:0.15px"><div style="margin-bottom:1.4px">Hier ist die Übersetzung des Textes ins Deutsche:</div>Unser finanzieller Überblick spiegelt eine robuste und<br>widerstandsfähige finanzielle Leistung wider. Wichtige<br>Indikatoren zeigen ein kontinuierliches Umsatzwachstum im<br>vergangenen Quartal, das auf strategisches<br>Kostenmanagement und erfolgreiches Marketing<br>zurückzuführen ist. Die operativen Margen haben sich<br>verbessert, was auf eine betriebliche Effizienz hinweist und<br>gleichzeitig unsere Rücklagen stärkt. Dies unterstreicht unser<br>Engagement für finanzielle Stabilität und positioniert uns für<br>nachhaltiges Wachstum.</div>
<svg style="left:1661px;top:804px" width="20" height="20" viewBox="0 0 20 20"><path d="M2.5 8.5A7.5 7.5 0 0 1 16 5.5M17.5 11.5A7.5 7.5 0 0 1 4 14.5M16.5 1.5V5.8H12.2M3.5 18.5V14.2H7.8" fill="none" stroke="#333" stroke-width="1.5" stroke-linecap="round" stroke-linejoin="round"/></svg>
<svg style="left:1698px;top:804px" width="20" height="20" viewBox="0 0 20 20"><rect x="5.5" y="5.5" width="12.5" height="12.5" rx="2.5" fill="none" stroke="#333" stroke-width="1.5"/><path d="M2.5 13.5V4A1.8 1.8 0 0 1 4.3 2.2H13.5" fill="none" stroke="#333" stroke-width="1.5" stroke-linecap="round"/></svg>
<div class="a" style="left:1729px;top:806px;width:1px;height:14px;background:#dedede"></div>
<svg style="left:1743px;top:803px" width="21" height="21" viewBox="0 0 21 21"><path d="M1.5 9H5V19.5H1.5Z M5 9L9.5 1.5C11 1.5 12 2.5 11.7 4.3L11 8H17.5A2 2 0 0 1 19.4 10.5L17.6 17.8A2.2 2.2 0 0 1 15.5 19.5H5" fill="none" stroke="#333" stroke-width="1.5" stroke-linejoin="round"/></svg>
<svg style="left:1780px;top:803px" width="21" height="21" viewBox="0 0 21 21"><path d="M19.5 12H16V1.5H19.5Z M16 12L11.5 19.5C10 19.5 9 18.5 9.3 16.7L10 13H3.5A2 2 0 0 1 1.6 10.5L3.4 3.2A2.2 2.2 0 0 1 5.5 1.5H16" fill="none" stroke="#333" stroke-width="1.5" stroke-linejoin="round"/></svg>
<!-- prompt card -->
<div class="a" style="left:1323px;top:860px;width:489px;height:134px;border-radius:9px;background:#fff;border:1px solid #dcdcdc;overflow:hidden">
 <div class="a" style="left:0;top:0;width:489px;height:50px;background:#f6f5f6"></div>
</div>
<div class="a" style="left:1339px;top:877px;width:8px;height:8px;border-radius:50%;background:#b38cf6"></div>
<div class="a" style="left:1350px;top:877px;width:8px;height:8px;border-radius:50%;background:#1ea3e2"></div>
<div class="a" style="left:1339px;top:887px;width:8px;height:8px;border-radius:50%;background:#f6c21e"></div>
<div class="a" style="left:1350px;top:887px;width:8px;height:8px;border-radius:50%;background:#3ecf8e"></div>
<div class="a nw" style="left:1371px;top:879px;font:15px/17px 'Liberation Sans';color:#333">Prompt</div>
<svg style="left:1787px;top:884px" width="9" height="7"><path d="M0 0H8.5L4.25 6Z" fill="#666"/></svg>
<div class="a nw" style="left:1335px;top:929px;font:16px/18px 'Liberation Sans';color:#9a9a9a">Ask something</div>
<div class="a" style="left:1795px;top:923px;width:7px;height:25px;border-radius:4px;background:#b5b5b5"></div>
<svg style="left:1696px;top:960px" width="20" height="18" viewBox="0 0 20 18"><rect x="1.5" y="1.5" width="17" height="15" rx="2.5" fill="none" stroke="#333" stroke-width="1.5"/><path d="M2 15C5 11 8 10 9 12S14 11 18 9" fill="none" stroke="#333" stroke-width="1.4"/><circle cx="6" cy="6.5" r="1.5" fill="#333"/></svg>
<svg style="left:1735px;top:959px" width="22" height="20" viewBox="0 0 22 20"><path d="M5 1V15H18M1 5H15V19" fill="none" stroke="#333" stroke-width="1.5" stroke-linecap="round" stroke-linejoin="round"/><path d="M9.5 6.5V11.5M7 9H12" stroke="#333" stroke-width="1.4"/><path d="M19 17.5H21" stroke="#333" stroke-width="1.2"/></svg>
<svg style="left:1776px;top:961px" width="20" height="17" viewBox="0 0 20 17"><path d="M1 1L19.5 8.5L1 16L4 8.5Z" fill="#c8b3f8"/><path d="M4 8.5H11" stroke="#fff" stroke-width="1" opacity="0.6"/></svg>
<!-- right toolbar -->
<svg style="left:1855px;top:69px" width="22" height="22" viewBox="0 0 22 22"><circle cx="9" cy="9" r="7.5" fill="none" stroke="#333" stroke-width="1.6"/><path d="M14.5 14.5L20 20" stroke="#333" stroke-width="2.6" stroke-linecap="round"/><path d="M6.5 5.5A4 4 0 0 0 5.3 8" stroke="#333" stroke-width="1.3" fill="none" stroke-linecap="round"/></svg>
<div class="a" style="left:1860px;top:115px;width:11px;height:1px;background:#cfcfcf"></div>
<svg style="left:1853px;top:139px" width="26" height="23" viewBox="0 0 26 23"><path d="M1 6H25M6 6V3A2 2 0 0 1 8 1H18A2 2 0 0 1 20 3V6M4 9V19.5A2 2 0 0 0 6 21.5H20A2 2 0 0 0 22 19.5V9" fill="none" stroke="#333" stroke-width="1.5"/><text x="13" y="18" text-anchor="middle" font-family="Liberation Mono" font-weight="bold" font-size="8.5" fill="#333" letter-spacing="-0.3">OCR</text></svg>
<svg style="left:1855px;top:189px" width="20" height="24" viewBox="0 0 20 24"><path d="M12.5 1.5H3.5A2 2 0 0 0 1.5 3.5V20.5A2 2 0 0 0 3.5 22.5H16.5A2 2 0 0 0 18.5 20.5V7.5Z M12.5 1.5V7.5H18.5" fill="none" stroke="#333" stroke-width="1.5" stroke-linejoin="round"/><path d="M6 12A4.2 4.2 0 0 1 13.5 10.5M14 14.5A4.2 4.2 0 0 1 6.5 16M13.8 8.3V10.9H11.2M6.2 18.2V15.6H8.8" fill="none" stroke="#333" stroke-width="1.4" stroke-linecap="round" stroke-linejoin="round"/></svg>
<svg style="left:1855px;top:239px" width="22" height="25" viewBox="0 0 22 25"><path d="M8 22.5H3.5A2 2 0 0 1 1.5 20.5V3.5A2 2 0 0 1 3.5 1.5H12.5L18.5 7.5V11M12.5 1.5V7.5H18.5" fill="none" stroke="#333" stroke-width="1.5" stroke-linejoin="round"/><rect x="10.5" y="15" width="10" height="8" rx="1.5" fill="none" stroke="#333" stroke-width="1.5"/><path d="M12.8 15V13A2.7 2.7 0 0 1 18.2 13V15" fill="none" stroke="#333" stroke-width="1.4"/><circle cx="15.5" cy="19" r="1" fill="#333"/></svg>
<svg style="left:1855px;top:290px" width="21" height="23" viewBox="0 0 21 23"><path d="M6 9H3.5A2 2 0 0 0 1.5 11V19.5A2 2 0 0 0 3.5 21.5H17.5A2 2 0 0 0 19.5 19.5V11A2 2 0 0 0 17.5 9H15M10.5 15V1.5M6 5.5L10.5 1.5L15 5.5" fill="none" stroke="#333" stroke-width="1.5" stroke-linecap="round" stroke-linejoin="round"/></svg>
<svg style="left:1854px;top:341px" width="22" height="20" viewBox="0 0 22 20"><rect x="1.5" y="1.5" width="19" height="17" rx="3" fill="none" stroke="#333" stroke-width="1.5"/><path d="M4.5 5L11 10.5L17.5 5" fill="none" stroke="#333" stroke-width="1.5" stroke-linecap="round" stroke-linejoin="round"/></svg>
<div class="a" style="left:1859px;top:387px;width:12px;height:1px;background:#cfcfcf"></div>
<svg style="left:1855px;top:412px" width="20" height="21" viewBox="0 0 20 21"><path d="M3.5 1.5H16.5A2 2 0 0 1 18.5 3.5V17.5A2 2 0 0 1 16.5 19.5H3.5A2 2 0 0 1 1.5 17.5V3.5A2 2 0 0 1 3.5 1.5Z M7 1.5V4.5A1 1 0 0 0 8 5.5H12A1 1 0 0 0 13 4.5V1.5" fill="none" stroke="#333" stroke-width="1.5"/><circle cx="10" cy="12" r="3.3" fill="none" stroke="#333" stroke-width="1.5"/></svg>
<div class="a" style="left:1859px;top:458px;width:12px;height:1px;background:#cfcfcf"></div>
<svg style="left:1857px;top:486px" width="16" height="15" viewBox="0 0 16 15"><path d="M4.5 1L1.5 4L4.5 7M1.8 4H10A4.8 4.8 0 0 1 10 13.6H5" fill="none" stroke="#b9b9b9" stroke-width="1.4" stroke-linecap="round" stroke-linejoin="round"/></svg>
<svg style="left:1857px;top:536px" width="16" height="15" viewBox="0 0 16 15"><path d="M11.5 1L14.5 4L11.5 7M14.2 4H6A4.8 4.8 0 0 0 6 13.6H11" fill="none" stroke="#b9b9b9" stroke-width="1.4" stroke-linecap="round" stroke-linejoin="round"/></svg>
<div class="a" style="left:1850px;top:925px;width:30px;height:29px;border-radius:6px;background:#fff"></div>
<svg style="left:1850px;top:924.5px" width="30" height="30" viewBox="0 0 30 30"><g fill="none" stroke-width="2.7" stroke-linecap="round"><path d="M8.56 15A4.9 4.9 0 1 1 15 8.56" stroke="#a87cf5"/><path d="M15 8.56A4.9 4.9 0 1 1 21.44 15" stroke="#22b3de"/><path d="M21.44 15A4.9 4.9 0 1 1 15 21.44" stroke="#3cc98f"/><path d="M15 21.44A4.9 4.9 0 1 1 8.56 15" stroke="#f2c21c"/></g></svg>
<svg style="left:1854px;top:979px" width="22" height="22" viewBox="0 0 22 22"><path d="M3 1.5H19A1.5 1.5 0 0 1 20.5 3V15A1.5 1.5 0 0 1 19 16.5H13.5L11 20L8.5 16.5H3A1.5 1.5 0 0 1 1.5 15V3A1.5 1.5 0 0 1 3 1.5Z" fill="none" stroke="#333" stroke-width="1.5" stroke-linejoin="round"/><path d="M5.5 6H16.5M5.5 9H16.5M5.5 12H12" stroke="#333" stroke-width="1.4"/></svg>

<!--RTOOL-->
<!-- notch on left -->
<div class="a" style="left:4px;top:64px;width:22px;height:32px;border-radius:50%;background:#353535"></div>
<div class="a" style="left:15px;top:77px;width:6px;height:6px;border-radius:50%;background:#b197f4"></div>

</body></html>
